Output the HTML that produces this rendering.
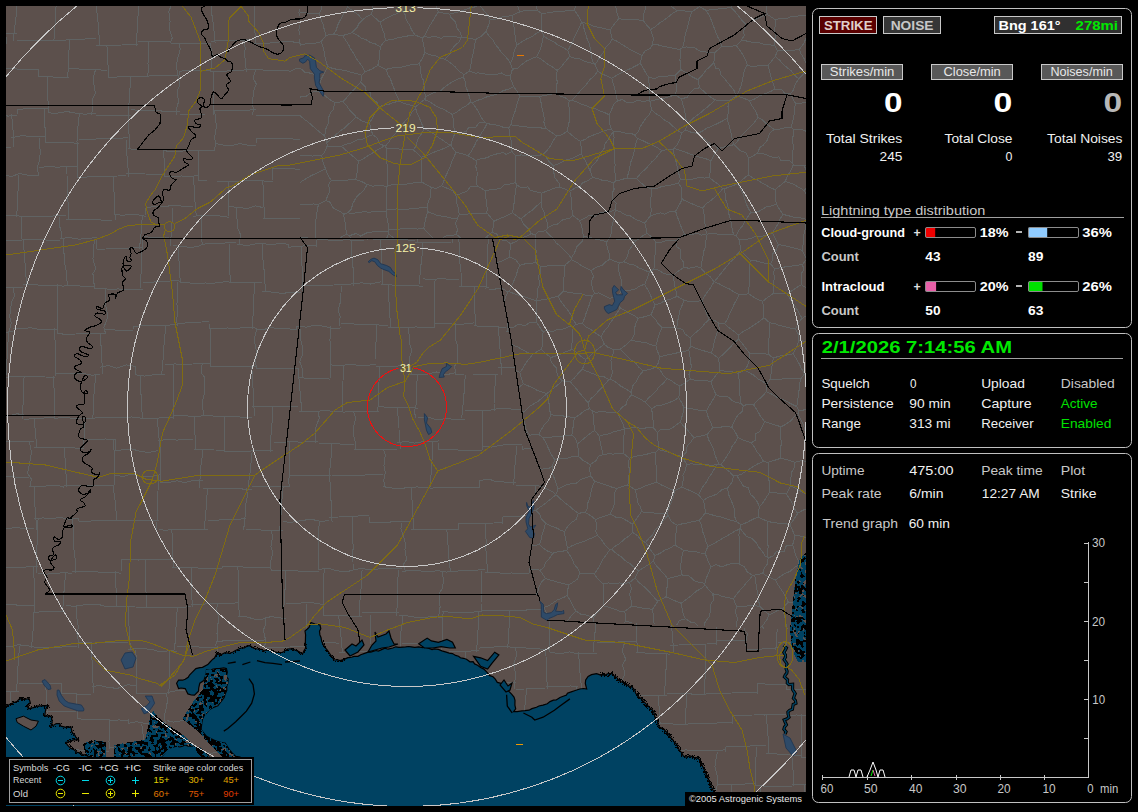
<!DOCTYPE html><html><head><meta charset="utf-8"><style>html,body{margin:0;padding:0;background:#000;width:1138px;height:812px;overflow:hidden;}body{position:relative;}</style></head><body><svg width="1138" height="812" viewBox="0 0 1138 812" style="position:absolute;left:0;top:0;font-family:'Liberation Sans',sans-serif;">
<defs><clipPath id="mc"><rect x="6" y="6" width="800" height="800"/></clipPath></defs>
<rect x="0" y="0" width="1138" height="812" fill="#000"/>
<g clip-path="url(#mc)">
<rect x="6" y="6" width="800" height="800" fill="#5c504c"/>
<g fill="none" stroke="#606363" stroke-width="1" shape-rendering="crispEdges">
<path d="M6,33.5 L8.9,33.4 L17,33.5"/>
<path d="M17,6 L16.3,14.5 L15.2,23.3 L14.1,32.2 L13.5,40.7"/>
<path d="M17,40.7 L26.7,40.6 L36.9,40.3 L46.6,40.8 L56.1,40.4"/>
<path d="M56.1,6 L55.5,14.9 L55.1,23.1 L54.7,31.9 L53.8,40.7"/>
<path d="M56.1,40.4 L64.3,40.2 L72.2,39.4 L80.1,39.3 L88,38.8 L96.3,38.4"/>
<path d="M96.3,6 L97.1,14.1 L98,21.8 L98.3,30.3 L99.5,37.9 L100,46"/>
<path d="M96.3,46 L104.8,45.8 L113.3,45.4 L121.6,45 L129.7,44.7 L138.4,44.7"/>
<path d="M138.4,6 L138.1,13.9 L137.8,22.1 L137.1,29.8 L136.9,37.8 L136.3,46"/>
<path d="M138.4,41.5 L146.6,41.6 L154.4,41.3 L163,41.6 L170.9,41.4"/>
<path d="M170.9,6 L168.8,12 L170.1,21.2 L169,27.7 L172.2,37.9 L170.4,43.2"/>
<path d="M170.9,43.2 L179.2,43.3 L186.9,43.2 L194.8,43.5 L202.8,43.2 L211.2,43.6"/>
<path d="M211.2,6 L211.7,13.5 L212.9,21.1 L213.7,28.4 L214.5,36 L215.1,43.2"/>
<path d="M211.2,41.2 L219.8,40.6 L228.6,40.8 L236.7,40.2 L245.4,40 L254.3,39.6"/>
<path d="M254.3,6 L254.2,13.6 L254.9,21.2 L254.9,28.4 L255.1,36.1 L255.1,43.5"/>
<path d="M254.3,43.5 L263.8,43.5 L273.1,42.8 L281,41.7 L293.5,42 L300,43.1"/>
<path d="M300,9.4 L298.8,12.6 L300,16.1"/>
<path d="M300,25 L298.7,30.3 L300,34.4"/>
<path d="M300,38.9 L299.3,43.5"/>
<path d="M6,37 L6.9,40.6 L6,44.2"/>
<path d="M6,68.9 L13.6,68.9 L22,69.2 L30.4,69.4 L38.5,69.5"/>
<path d="M38.5,68.9 L38.5,76.6"/>
<path d="M38.5,76.6 L48.6,76.7 L59.3,77.4 L69.4,77.5"/>
<path d="M69.4,40.4 L69.1,47.8 L68.8,54.7 L68.2,62 L68.2,69.4 L67.6,76.6"/>
<path d="M69.4,68.9 L78.5,69 L88,69.6 L97.6,69.8 L106.9,70.4"/>
<path d="M106.9,46 L107.6,53.6 L107.7,61.8 L108.4,69.2 L108.9,77"/>
<path d="M106.9,77 L115.4,77.1 L123.3,76.6 L132.1,76.7 L140.5,76.4 L148.7,76.4"/>
<path d="M148.7,41.5 L148.3,48.4 L148.5,55.8 L148,63 L148.2,69.8 L147.8,77"/>
<path d="M148.7,75.4 L158.9,75.4 L169.2,75.6 L179.4,75.8"/>
<path d="M179.4,43.2 L180.2,49.4 L177.3,60 L176.4,66.5 L177.8,75.4"/>
<path d="M179.4,71.1 L189.4,70.7 L199.9,70.4 L210,70.2"/>
<path d="M210,43.2 L212,52.3 L212.1,57.2 L211.8,63.8 L210.6,71.8"/>
<path d="M210,71.8 L218.7,71.7 L226.9,71 L235.5,70.7 L243.7,70.7"/>
<path d="M243.7,41.2 L245.3,48.3 L244.4,55 L245.9,62.8 L246.1,71.8"/>
<path d="M243.7,69.5 L253.6,69.6 L262.7,70 L272.7,70.3 L282.3,70.5"/>
<path d="M282.3,69.5 L282.3,70.4"/>
<path d="M282.3,70.4 L290.5,71.1 L296.9,68.2 L300,69"/>
<path d="M6,115.7 L8,116.1 L17,115.2"/>
<path d="M17,109.3 L17,113.9"/>
<path d="M17,109.3 L27.5,108.8 L37.8,108.9 L47.9,108.3"/>
<path d="M47.9,76.6 L47.8,83.7 L47.9,90.9 L47.8,98.5 L48.4,105.6 L48.1,112.8"/>
<path d="M47.9,112.8 L56.3,113.3 L66.7,111.5 L75,113 L84.8,114.3 L95.7,113"/>
<path d="M95.7,68.9 L93.9,75.7 L93.6,82.4 L95.4,93.5 L92.6,99.2 L92.7,105.6 L91.7,115.3"/>
<path d="M95.7,115.3 L104.3,115.2 L112.9,115.4 L122.1,115.4 L130.6,115.1"/>
<path d="M130.6,77 L130.3,84.6 L129.6,92.2 L129.4,100.3 L128.5,107.7 L128.2,115.3"/>
<path d="M130.6,109.8 L139.2,110.2 L147,110.6 L155.7,110.5 L163.6,111.2 L171.8,111.5 L180.2,111.6"/>
<path d="M180.2,71.1 L178.4,77.5 L180,84.2 L177.1,91.7 L178.6,101.4 L176.8,108.1 L176.8,114.6"/>
<path d="M180.2,114.6 L188.4,114.6 L197.3,114.9 L205.4,115 L213.9,115"/>
<path d="M213.9,71.8 L213.9,79 L213.5,86.1 L213.6,93.1 L213.8,100.1 L213.4,107.6 L213.5,114.6"/>
<path d="M213.9,111 L222.4,110.5 L230.8,110.3 L239.2,110.3 L247.6,110.1 L255.7,109.8"/>
<path d="M255.7,69.5 L253.2,78.3 L256.3,84 L253.9,90.3 L252.4,101.5 L253.4,109.8 L252.2,115.3"/>
<path d="M255.7,115.3 L265.4,115.1 L274.8,115.5 L284.5,115.4 L294.2,115.7 L300,115.7"/>
<path d="M6,147.8 L11.5,147.7"/>
<path d="M11.5,113.9 L12.3,122.3 L13,130.2 L13.6,138.7 L13.9,147"/>
<path d="M11.5,137.7 L21.3,135.7 L28.4,136.2 L36,136.5 L44.7,136.7"/>
<path d="M44.7,109.3 L44.9,117.5 L44.9,125.9 L45.5,133.9 L45.7,142.3"/>
<path d="M44.7,142.3 L53.2,142.7 L62.1,142.9 L70.6,142.8 L79.5,143.3"/>
<path d="M79.5,112.8 L78.6,120.1 L77.9,127.3 L77.8,135.1 L76.9,142.3"/>
<path d="M79.5,139.6 L87.4,139 L95.8,139 L103.8,138.6 L112.3,138.3 L120.3,138.2 L128.3,137.7"/>
<path d="M128.3,115.3 L128.9,123.5 L128.8,131.9 L129.6,140.1 L129.7,148.7"/>
<path d="M128.3,148.7 L136.3,149.5 L147,149.3 L158,149.6 L166.9,150.3"/>
<path d="M166.9,148.7 L166.9,151.5"/>
<path d="M166.9,151.5 L175,151.4 L182.9,151 L191.1,150.7 L198.8,150.5 L206.6,150.5 L214.9,150"/>
<path d="M214.9,111 L215.2,119.5 L216.6,125.7 L214.5,137.5 L215.6,142.6 L214.5,151.5"/>
<path d="M214.9,143.3 L222.8,145 L230.1,145.9 L239.7,143.6 L249.2,145.4 L256.2,145.3"/>
<path d="M256.2,138.1 L256.2,143.3"/>
<path d="M256.2,138.1 L264.5,138.6 L272.5,138.7 L281.1,138.5 L289.4,138.8 L297.5,139.3 L300,139.3"/>
<path d="M6,175.8 L12.2,176.2 L19.7,173.5 L30.9,175.8 L39.1,175.3"/>
<path d="M39.1,137.7 L39.5,145 L40.2,151.1 L39.8,159.7 L37,167.7 L38.8,175.2"/>
<path d="M39.1,167.2 L48.6,166.8 L58.5,167.1 L67.6,166.6 L77.3,166.6"/>
<path d="M77.3,142.3 L77.7,149.6 L77.5,156.4 L77.5,163.5 L77.5,170.3 L77.8,177.4"/>
<path d="M77.3,177.4 L85.6,177.1 L93.6,176.7 L101.5,176.8 L109.9,176.4 L117.6,176 L126,175.6"/>
<path d="M126,139.6 L126.7,147 L126.9,154.5 L127.5,162.6 L128.2,169.7 L128.9,177.4"/>
<path d="M126,173 L135.5,173.3 L145,174 L154.1,174.2 L163.6,174.8"/>
<path d="M163.6,148.7 L164,158 L164.4,167 L165,176.6"/>
<path d="M163.6,176.6 L172.2,176.4 L181.3,176 L190,176.2 L198.5,175.8"/>
<path d="M198.5,151.5 L198.7,159.1 L198.8,166 L198.4,173.8 L198.8,180.9"/>
<path d="M198.5,180.9 L207.4,181 L216.3,181 L224.9,181.3 L233.8,181.5 L242.8,181.5"/>
<path d="M242.8,179.9 L242.8,180.9"/>
<path d="M242.8,179.9 L252.6,180.8 L263,180.9 L272.9,181.7"/>
<path d="M272.9,168.1 L272.9,179.9"/>
<path d="M272.9,168.1 L281.8,168.3 L290,168.6 L298.5,169.3 L300,169.3"/>
<path d="M6,215.9 L10.7,216 L19,215.8"/>
<path d="M19,175.2 L18.8,183.2 L17.9,191.9 L17.4,200.2 L17.2,208.3 L16.7,216.7"/>
<path d="M19,216.7 L28.4,216.2 L37.7,216.2 L47.5,216.3 L57,215.8 L66.4,215.6"/>
<path d="M66.4,167.2 L67,174.4 L67.1,182.2 L67.4,189.8 L67.9,197.5 L68.1,205.1 L68.5,212.3 L68.8,219.9"/>
<path d="M66.4,219.9 L75.7,220 L85.1,219.7 L94.8,219.8 L104.3,220.1 L113.7,220"/>
<path d="M113.7,177.4 L113.9,184.4 L114,191.5 L114.8,198.9 L114.5,205.4 L114.9,212.9 L115.3,219.9"/>
<path d="M113.7,214.8 L123.5,215.1 L130.8,214.6 L139,215 L145.9,216.3"/>
<path d="M145.9,207.8 L145.9,214.8"/>
<path d="M145.9,207.8 L156.2,206.1 L163.3,207 L172.7,205.2 L183.5,206.2 L193.4,206"/>
<path d="M193.4,176.6 L194,184.6 L194.5,192.8 L194.9,200.3 L195.5,208.5 L196.3,216.2"/>
<path d="M193.4,216.2 L203.6,215.4 L209.4,215.2 L219.1,215.9 L228.7,217.2"/>
<path d="M228.7,180.9 L228.5,188 L228.5,194.9 L228.7,202.1 L228.4,209.4 L228.4,216.2"/>
<path d="M228.7,206.9 L237.8,207.1 L246.7,208.7 L255.5,205.8 L262.6,207.5"/>
<path d="M262.6,179.9 L263.2,187.7 L263.4,195.2 L263.8,202.7 L264.2,210.6 L264.4,218.2"/>
<path d="M262.6,218.2 L270.9,218.5 L279.2,218.2 L287.4,218.3 L296.2,218.3 L300,218.4"/>
<path d="M6,240.4 L13,240.8 L21.8,240.7"/>
<path d="M21.8,216.7 L21.9,224.3 L21.7,231.7 L21.8,239.3"/>
<path d="M21.8,239.3 L31,239.7 L40.8,239.9 L50.2,240.1 L59.6,240.3"/>
<path d="M59.6,216.7 L59,224.2 L61.8,233.4 L61.4,239.3"/>
<path d="M59.6,238.6 L69.1,237.5 L79,239.2 L87.6,238.3 L96.7,237.7"/>
<path d="M96.7,238.6 L96.7,249.1"/>
<path d="M96.7,249.1 L105.9,249 L115,248.8 L124.3,248.1 L133.6,247.9 L142.6,247.7"/>
<path d="M142.6,214.8 L141.6,223.3 L141.2,232.1 L140.3,240.8 L139.4,249.1"/>
<path d="M142.6,236.6 L152.5,237.3 L162.8,237.5 L172.9,238.3"/>
<path d="M172.9,207.8 L172.3,215.1 L172,223.1 L171.6,230.3 L170.9,237.9 L170.2,245.5"/>
<path d="M172.9,245.5 L182.6,246.8 L192.3,247.3 L201.1,245.7"/>
<path d="M201.1,216.2 L201.3,223.2 L201.6,230.7 L201.9,238.2 L202.1,245.5"/>
<path d="M201.1,244.2 L209.7,243.8 L218.9,243.6 L227.8,242.7 L236.5,242.4"/>
<path d="M236.5,206.9 L236.5,216.2 L237.4,221.4 L237.8,228.6 L240.6,234.7 L238.9,244.2"/>
<path d="M236.5,244 L246.7,245.6 L253.5,244.3 L260.9,243.1 L269.7,244.6 L278.9,243.7 L288.2,244.1"/>
<path d="M288.2,244 L288.2,247.3"/>
<path d="M288.2,247.3 L297.5,246.4 L307.1,245.7 L316.8,245.3"/>
<path d="M316.8,240 L316.8,247.3"/>
<path d="M316.8,240 L326.1,239.9 L335.6,240.4 L345.1,239.9 L354.8,240.1 L364.2,240.2"/>
<path d="M367.7,238 L368,240"/>
<path d="M364.2,238.7 L372.4,239 L380.9,239.2 L389.6,239.8 L397.8,239.6 L406.2,239.9 L414.6,240.4"/>
<path d="M417.3,238 L417.9,243"/>
<path d="M414.6,243 L424.2,242.6 L433.5,242.6 L443.4,242.1 L452.8,242"/>
<path d="M452.5,238 L452.5,243"/>
<path d="M6,287.4 L14.3,287.3 L23.3,287.8"/>
<path d="M23.3,239.3 L23.7,247.4 L24.5,254.8 L25,263.1 L25.4,270.7 L26.2,278.6 L26.5,286.5"/>
<path d="M23.3,284.3 L31.4,284.6 L39.9,285.1 L47.9,285.1 L55.9,285.6 L64,286.1"/>
<path d="M64,238.6 L63,246.1 L64.2,254.9 L64.1,261.1 L66,269.5 L66.7,277.8 L67.5,285.1"/>
<path d="M64,285.1 L74.4,285.9 L84.1,286.1 L94.3,286.9"/>
<path d="M94.3,238.6 L93.8,248 L93.8,250.9 L92.9,258.9 L95.8,268.9 L92.9,273.4 L93.9,283 L95.2,289"/>
<path d="M94.3,289 L102.4,288.9 L110.7,289.1 L118.3,289 L126.9,289.3 L135,289.2 L142.8,289.2"/>
<path d="M142.8,236.6 L142.7,243.9 L141.8,251.8 L141.8,259.3 L141.4,266.7 L141,274.1 L140.1,281.6 L140,289"/>
<path d="M142.8,282.4 L151.5,282.1 L160.7,281.8 L170,281 L178.7,280.6"/>
<path d="M178.7,245.5 L178.9,252.9 L179,260.5 L179.8,267.8 L179.9,274.9 L180.2,282.4"/>
<path d="M178.7,281.9 L188.2,282.7 L194.2,283.6 L205.4,283 L210.9,283.5 L221.8,282.1 L229,281.7"/>
<path d="M229,244.2 L229.4,251.6 L229.4,259.2 L229.6,267.1 L230,274.9 L230.4,282.2"/>
<path d="M229,282.2 L237.4,282.6 L246,282.7 L254.3,282.7 L262.4,282.9"/>
<path d="M262.4,244 L262.9,251.8 L263,259.9 L263.9,267.8 L264.4,275.6 L265,283.5 L265.3,291.1"/>
<path d="M262.4,291.1 L272.6,292.2 L282.1,293.4 L290,292.5 L301.4,292.7"/>
<path d="M301.4,247.3 L301.4,254.5 L301.8,261.7 L302.2,269.1 L302.6,276.4 L302.9,283.6 L302.9,291.1"/>
<path d="M301.4,285.7 L309.4,285.4 L318.2,285.2 L326.2,285.1 L334.4,285 L342.5,284.7 L351.1,284.6"/>
<path d="M351.1,240 L351.7,247.3 L351.8,255.4 L352.7,263.1 L353.2,270.2 L353.6,278.1 L354,285.7"/>
<path d="M351.1,283.3 L362.7,282.9 L370.1,284.1 L380.9,281.8"/>
<path d="M380.9,238.7 L380.9,246.1 L381.3,254 L381.8,261.8 L382.4,269.3 L382.3,277 L382.8,284.5"/>
<path d="M380.9,284.5 L389.2,284.9 L397.9,285.2 L406.1,285.6 L414.4,285.9 L423,286.1"/>
<path d="M423,243 L422.5,251.5 L421.6,259.6 L420.6,268 L419.9,276.2 L419.5,284.5"/>
<path d="M423,278.8 L430.5,279.7 L441.5,278.5 L450.7,279.6 L458.6,279.5"/>
<path d="M458.7,238 L459.2,243.8 L459.2,250.9 L459.7,258.3 L460.1,264.9 L461,272.3 L461.1,279.2 L461.5,286.3"/>
<path d="M458.6,286.3 L468.6,286.5 L479,286.7 L488.7,287.1"/>
<path d="M488.6,238 L488,244.4 L487.9,251.8 L487.8,259.2 L487.3,266.8 L486.5,274 L486.4,282 L485.9,289.3"/>
<path d="M488.7,289.3 L498,288.9 L501.6,288.9"/>
<path d="M6,332.1 L13,331.8"/>
<path d="M13,286.5 L14.4,295.9 L11.5,302.3 L10.8,307.8 L9.7,316.7 L11.3,322.8 L9,332.1"/>
<path d="M13,328.3 L20.1,328.8 L30.5,327.7 L41.4,329.8 L47.9,329.4 L57.4,329.6"/>
<path d="M57.4,284.3 L57.2,291.2 L57.2,298.4 L57.3,305.6 L57.2,312.7 L57.3,319.9 L57.5,326.7 L57.3,333.9"/>
<path d="M57.4,333.9 L66.9,334.1 L76.5,334 L86.1,333.7 L95.6,333.8 L105.2,333.4"/>
<path d="M105.2,289 L105.4,296.7 L105.7,305.9 L106.6,309.7 L107.8,316.8 L103.8,327.8 L105.8,333.9"/>
<path d="M105.2,329.1 L114.8,330 L123.8,330.4 L133.4,331"/>
<path d="M133.4,326.4 L133.4,329.1"/>
<path d="M133.4,326.4 L141.9,325.9 L150.9,325.9 L159.8,325.5 L168.5,325.1 L177.2,324.5"/>
<path d="M177.2,282.4 L177.1,289.9 L177.1,297.1 L177,304.2 L177.3,311.8 L176.9,318.8 L177.1,326.4"/>
<path d="M177.2,323.5 L185.2,323 L193.2,322.3 L201.7,322 L209.5,321.7"/>
<path d="M209.5,323.5 L209.5,328.5"/>
<path d="M209.5,328.5 L218.9,328.3 L227.6,328 L236.4,328.2 L245.5,327.7 L254.7,327.8"/>
<path d="M254.7,282.2 L254.2,290.1 L253.9,297.5 L253.6,305.8 L253.2,313.2 L252.7,321.1 L252.3,328.7"/>
<path d="M254.7,328.7 L262.2,329.9 L270.1,327.8 L280,328.3 L288.6,328.8 L296.8,329.8"/>
<path d="M296.8,326.2 L296.8,328.7"/>
<path d="M296.8,326.2 L306.5,327.2 L313.7,325.1 L325.2,326.3 L332,328.5 L341.2,327.9"/>
<path d="M341.2,285.7 L341,293.1 L340.1,303.1 L338.2,309.9 L340.1,316.5 L339.7,326.2"/>
<path d="M341.2,323.6 L350.3,323.8 L360.1,324.4 L369.5,324.6 L378.8,325 L388.3,325.2"/>
<path d="M388.3,284.5 L388.6,291.8 L388.7,298.8 L389.4,306.3 L389.6,313.4 L390.2,320.2 L390.3,327.6"/>
<path d="M388.3,327.6 L397.4,327.6 L407.1,327.1 L416.6,327 L425.6,327.3 L435.1,327.1"/>
<path d="M435.1,278.8 L434.8,286.9 L434.8,295.1 L434.8,303.3 L434.8,311.5 L434.9,319.4 L434.9,327.6"/>
<path d="M435.1,323.1 L446.2,323.1 L456.1,324.7 L465.8,323.8 L474.4,322.8"/>
<path d="M474.4,286.3 L474.3,294.1 L474.8,301.9 L474.8,309.9 L475.2,317.8 L475.1,325.9"/>
<path d="M474.4,325.9 L484.8,326.3 L495.3,326.9 L505.8,327.4"/>
<path d="M507.2,319.3 L507.5,324.9 L508,332"/>
<path d="M505.8,332 L509.4,331.5"/>
<path d="M6,377.9 L8.7,377.9"/>
<path d="M8.7,332.1 L8.3,339.4 L7.6,346.6 L7.2,354.2 L6.9,361.3 L6.2,368.9 L6,376.1"/>
<path d="M8.7,376.1 L17.6,376.2 L27,376.4 L36.4,376.6 L45.1,377 L54.6,377.2"/>
<path d="M54.6,328.3 L54.8,336.3 L55.3,344.2 L55.1,352 L55.1,360.2 L55.6,368 L55.8,376.1"/>
<path d="M54.6,374.1 L64.4,373.4 L73.3,373.4 L82.9,373.2 L91.5,375.2 L100.3,374.4"/>
<path d="M100.3,333.9 L100.7,341.8 L101.4,349.8 L101.6,357.8 L102.3,366 L102.7,374.1"/>
<path d="M100.3,367.2 L108.6,365.4 L116.6,368.2 L126.2,364.9 L135.7,366.5"/>
<path d="M135.7,367.2 L135.7,374.8"/>
<path d="M135.7,374.8 L144.6,376.1 L157,374.2 L165.4,375"/>
<path d="M165.4,326.4 L165,334.4 L164.3,342.3 L163.3,350.4 L163.1,358.9 L162.5,366.7 L161.6,374.8"/>
<path d="M165.4,364.4 L174.3,364 L183.5,364.1 L193,364 L201.9,363.7 L211,363.6"/>
<path d="M211,328.5 L210.6,335.9 L210.7,343.7 L210.4,351.5 L210.2,358.8 L210.2,366.7"/>
<path d="M211,366.7 L220.4,366.4 L229.4,366.9 L238.3,366.9 L247.5,366.9 L256.9,366.9"/>
<path d="M256.9,328.7 L254.7,336.8 L254.9,343.1 L256.8,352.9 L255.4,361.1 L256.6,368.8"/>
<path d="M256.9,368.8 L265.7,368.7 L274,368.4 L282.3,368.8 L290.6,368.5 L299.4,368.3"/>
<path d="M299.4,326.2 L300.5,332.1 L300.9,340.8 L302.7,347.2 L302,355.9 L299.7,361.6 L302.9,370.5 L302.9,377.7"/>
<path d="M299.4,377.7 L309.8,378.4 L319.7,378.5 L330.2,379.1"/>
<path d="M330.2,326.2 L330.1,333.4 L330,340.6 L330.4,348 L330.6,355.9 L330.2,363.2 L330.6,370 L330.6,377.7"/>
<path d="M330.2,364.8 L338.2,365.7 L349.7,364.6 L355.9,365 L366.2,365.4 L376,364.5"/>
<path d="M376,323.6 L376.2,330.7 L376.2,338.1 L375.9,345.2 L375.9,352 L376,359.1 L376,366.5"/>
<path d="M376,366.5 L384.1,366.5 L392.2,366.3 L400.3,365.9 L408.2,365.5"/>
<path d="M408.2,327.6 L409.2,336.1 L409.6,343.4 L411.8,350.2 L409.1,358.9 L410.2,367.7 L411.6,374.6"/>
<path d="M408.2,374.6 L416.6,374.6 L426.7,374.4 L436.4,372 L446.6,374.7 L455.4,372.6"/>
<path d="M455.4,323.1 L456,330.5 L455.7,340.1 L457.4,345 L457.3,353.5 L457.4,362.3 L454.3,366.3 L456.3,374.9"/>
<path d="M455.4,374.9 L464,375 L472.6,375 L480.9,374.5 L489.9,374.6 L498.3,374.5"/>
<path d="M498.3,325.9 L498.7,333 L499.5,339.8 L499.8,347.2 L500.6,354.2 L500.7,361 L501.6,368.2 L502,374.9"/>
<path d="M498.3,368 L507.2,367.7 L515.1,367.8"/>
<path d="M6,416.3 L6.1,416.4 L16.6,413.8 L24.2,414.6"/>
<path d="M24.2,376.1 L23.6,383.2 L23.6,390.5 L23,397.9 L23,405 L22.4,412.3 L22,419.2"/>
<path d="M24.2,419.2 L34.3,418.8 L43.9,418 L53.8,417.6"/>
<path d="M53.8,376.1 L53.7,383.2 L54.2,390.4 L54.5,397.9 L54.7,404.6 L54.6,412.3 L54.7,419.2"/>
<path d="M53.8,418.1 L62.4,417.9 L70.3,418 L78.7,418.6 L87.1,418.7 L95.5,418.6"/>
<path d="M95.5,374.1 L95.2,381.3 L94.5,389 L93.8,396.2 L93.3,403.4 L93.4,410.8 L92.7,418.1"/>
<path d="M95.5,417.3 L104.5,417.2 L113.3,417.1 L122.3,417.3 L131.2,417 L140.4,417.2"/>
<path d="M140.4,374.8 L140.6,382.2 L140.8,389.5 L141.1,396.7 L141.5,404.2 L142,411.5 L142.4,419"/>
<path d="M140.4,419 L148.4,418.4 L157.1,418.2 L165.4,417.3 L173.6,417.1"/>
<path d="M173.6,364.4 L173.5,372.4 L173.5,380.3 L173.2,387.8 L173.3,395.3 L173.5,403.5 L173.4,410.9 L173.3,419"/>
<path d="M173.6,415.6 L181.4,415.5 L194,416.5 L202.1,415.9"/>
<path d="M202.1,364.4 L201.2,372.6 L204.4,376.9 L204.9,386.1 L204.9,391.5 L202.8,400.1 L202.7,409 L204.2,415.7"/>
<path d="M202.1,415.7 L210.2,415.8 L218.6,416.4 L227,416.8 L235.3,416.8 L243.5,417.2 L251.6,417.3"/>
<path d="M251.6,366.7 L252.2,373.5 L252.1,380.8 L253,387.5 L253.4,394.8 L253.4,401.5 L254.1,408.7 L254.4,415.7"/>
<path d="M251.6,406.6 L261.2,406.6 L270.4,406.3 L279.6,406.6 L288.9,406.3 L298.3,406.5"/>
<path d="M298.3,368.8 L298.7,375.9 L299.5,383 L299.8,389.8 L300.7,396.7 L301.1,404.1 L301.7,411"/>
<path d="M298.3,411 L307.3,411.3 L316.3,411.1 L325.1,410.9 L334.2,411.1 L343.4,411.3"/>
<path d="M343.4,364.8 L343.5,372.9 L343,380.7 L342.9,388.6 L342.9,396.1 L342.7,404.2 L342.5,412.2"/>
<path d="M343.4,412.2 L352.3,411.3 L363.2,411.6 L368.8,411.1 L379.4,411.2"/>
<path d="M379.4,366.5 L379.4,374.1 L379,382 L378.6,389.3 L378.4,397 L378.2,404.6 L377.6,412.2"/>
<path d="M379.4,406.8 L388.9,407.2 L398.7,407.8 L408.5,407.6 L417.9,408.2"/>
<path d="M417.9,374.6 L416.7,383.5 L416.1,387.5 L416.1,396.1 L416.5,403.4 L414.3,411.9 L416,418"/>
<path d="M417.9,418 L427.6,417.1 L435.8,419.4 L446.5,418.8 L455.9,419.2 L465.4,419.9"/>
<path d="M465.4,374.9 L464.8,382 L464.3,389.3 L463.8,396.7 L463.2,403.7 L462.4,410.6 L461.8,418"/>
<path d="M465.4,410.6 L475.1,410.4 L484.8,411 L495.7,409.3"/>
<path d="M495.7,374.9 L495.3,382.1 L494.8,389.4 L494.6,396.5 L494,403.5 L494,410.6"/>
<path d="M495.7,408.7 L505.1,408.8 L513.8,409.1 L521.1,409.2"/>
<path d="M6,441.5 L7.1,441.5 L16,441.3 L25.2,441.2 L34.4,441.3"/>
<path d="M34.4,419.2 L34.8,426.4 L35.7,433.3 L36.1,440.3 L36.5,447.4"/>
<path d="M34.4,447.4 L43.1,447.4 L51.1,447.6 L59.9,447.6 L68.6,447.6 L76.7,448.1 L85.3,448"/>
<path d="M85.3,418.1 L84.9,425.5 L84.6,432.6 L84,440.1 L83.5,447.4"/>
<path d="M85.3,439.1 L95.4,439.4 L105,439 L115,439.1"/>
<path d="M115,439.1 L115,450.6"/>
<path d="M115,450.6 L124.1,449.7 L131.6,448.8 L141.4,451.8 L150,452.3 L157.7,450.7"/>
<path d="M157.7,419 L158,427.1 L158.7,435 L159.5,442.7 L159.8,450.6"/>
<path d="M157.7,440.9 L166.9,439.3 L177.2,440.1 L183.2,439.1 L194.1,439"/>
<path d="M194.1,415.6 L194.2,424.3 L194.8,432.5 L195.6,440.9 L195.8,449.2"/>
<path d="M194.1,449.2 L204.2,449.7 L214.3,450 L224.2,450.1"/>
<path d="M224.2,415.7 L224.4,422.9 L224.3,430 L224.9,437.3 L224.7,444.2 L224.9,451.7"/>
<path d="M224.2,451.7 L232.1,451.5 L240.5,451.1 L248.3,451.2 L256.8,450.7 L264.6,450.6 L272.9,450.4"/>
<path d="M272.9,406.6 L272.6,414.2 L272.1,421.8 L271.4,429.2 L270.9,436.8 L270.5,444.4 L270.1,451.7"/>
<path d="M272.9,442 L281.9,442.2 L291.2,441.8 L300.5,442.1 L309.1,441.9 L318.5,441.7"/>
<path d="M318.5,411 L319.2,418.4 L315.8,427.5 L315.5,432.9 L315.3,443"/>
<path d="M318.5,443 L327.3,443.4 L335.9,443.7 L344.8,444.3 L353.7,444.4"/>
<path d="M353.7,412.2 L355.6,418.3 L353.4,427.9 L353.8,436.1 L355.2,441.4 L355.6,449.1"/>
<path d="M353.7,449.1 L362.3,449.5 L370.9,449.6 L380,449.6 L388.6,449.8 L397.4,449.7"/>
<path d="M397.4,406.8 L397.8,414 L398.5,420.9 L399,427.9 L399.1,435 L400,441.9 L400.3,449.1"/>
<path d="M397.4,442.5 L406.5,441.6 L414.2,443.1 L422.5,441.8 L431,442 L438.7,440.9"/>
<path d="M438.7,442.5 L438.7,449.7"/>
<path d="M438.7,449.7 L447.6,450 L456.5,449.9 L464.8,450.4 L473.5,450.4 L482.5,450.6"/>
<path d="M482.5,410.6 L482.3,418.5 L482.6,426.1 L482.4,433.8 L482.5,442.1 L482.5,449.7"/>
<path d="M482.5,445.9 L491.3,447.1 L503.7,444.9 L511.7,444.4 L522.3,444.6"/>
<path d="M522.3,445.9 L522.3,449.1"/>
<path d="M522.3,449.1 L531.6,448.6 L531.9,448.6"/>
<path d="M6,476.9 L9.8,476.8 L19.6,477.2 L29.1,477.2"/>
<path d="M29.1,441.5 L31.3,450.8 L30.8,457.7 L29.4,464.2 L27.5,473.4 L31.4,479 L30,486.5"/>
<path d="M29.1,486.5 L36.2,486.3 L45.3,486.1 L56.7,485.2 L64.2,487.2"/>
<path d="M64.2,447.4 L64.7,455.2 L65.6,463.2 L65.8,470.7 L66.3,478.4 L66.9,486.5"/>
<path d="M64.2,485.5 L72.3,485.6 L80.7,485.8 L89.2,485.6 L96.9,485.6 L105.3,485.4 L113.7,485.6"/>
<path d="M113.7,439.1 L113.7,446.7 L114.4,454.6 L114.4,462.2 L114.8,470.2 L114.7,477.5 L114.9,485.5"/>
<path d="M113.7,475 L123.4,476.5 L131.3,474.1 L140.3,476.4 L151.3,476.5 L160.5,474.7"/>
<path d="M160.5,440.9 L160.8,449.1 L160.4,457.6 L160.3,466 L160.4,473.8 L160.6,482.3"/>
<path d="M160.5,482.3 L168.3,482.7 L176.9,480.8 L184.2,482.6 L193.5,480.4 L202.7,481"/>
<path d="M202.7,449.2 L202.2,457.2 L201,464.8 L200.8,472.7 L199.8,480.8 L199.3,488.4"/>
<path d="M202.7,488.4 L210.9,488.4 L219.2,488.7 L227.3,488.7 L235.7,488.6 L244.1,489.1 L252.1,489.1"/>
<path d="M252.1,451.7 L251.6,458.9 L250.6,466.5 L249.9,473.8 L248.9,481.1 L248.4,488.4"/>
<path d="M252.1,486.9 L261.8,486.7 L270.6,486.7 L279.8,486.2 L289.4,486.2"/>
<path d="M289.4,442 L289.1,449.6 L289.5,456.9 L289.1,464.3 L289.5,472.2 L288.9,479.3 L289.1,486.9"/>
<path d="M289.4,475.9 L298.1,476 L306.7,475.4 L315,475.2 L323.4,475.2 L331.9,475"/>
<path d="M331.9,443 L331.6,451.4 L330.9,459.2 L330,467.9 L329.7,475.9"/>
<path d="M331.9,475.4 L340.3,475.2 L349,475.2 L357.7,475.4 L366.5,474.9 L374.7,474.9 L383.4,474.8"/>
<path d="M383.4,449.1 L385.3,455.2 L383.9,465.6 L385.3,472.2 L383.7,480.7 L385.3,486.8"/>
<path d="M383.4,486.8 L390.7,487.8 L400.5,489 L408.2,487.1 L417.8,487 L426.2,487.6 L433,488.3"/>
<path d="M433,442.5 L432.7,450.3 L432.1,457.5 L431.8,465.1 L431.2,472.4 L430.7,480 L430.5,487.5"/>
<path d="M433,487.5 L442,487.2 L451.6,487.3 L460.8,487.6 L469.7,487.2 L479,487.3"/>
<path d="M479,480.5 L479,487.5"/>
<path d="M479,480.5 L489.5,479.3 L496,481.7 L507,482.1 L516.5,482.4"/>
<path d="M516.5,445.9 L516.2,453.7 L515.4,461.4 L514.6,469.4 L514.1,477.5 L513.6,485.3"/>
<path d="M516.5,485.3 L525.1,485.5 L533.8,485.8 L541,486.1"/>
<path d="M6,528.2 L15,527.9 L23.9,528.1 L34,528.3"/>
<path d="M34,486.5 L34.6,493.5 L34.6,500.7 L35.1,508.1 L35.5,515.3 L36.3,522.5 L36.6,529.7"/>
<path d="M34,518.9 L43,517.9 L50.7,519 L59.6,517.3 L69.2,519.3 L78.9,518.3"/>
<path d="M78.9,518.9 L78.9,521.3"/>
<path d="M78.9,521.3 L87.6,521.3 L96.5,520.5 L104.9,520.5 L113.6,520.3"/>
<path d="M113.6,485.5 L114,492.9 L115,499.6 L115.5,506.8 L116.3,514.1 L116.8,521.3"/>
<path d="M113.6,520.9 L122.7,520.8 L131.4,520.8 L140.8,520.7 L149.5,520.6 L158.8,520.5"/>
<path d="M158.8,475 L158.5,482.9 L158,490.8 L157.8,498.2 L157.6,506.6 L157.2,514 L157,522 L156.7,529.9"/>
<path d="M158.8,529.9 L166.8,530.1 L174.8,529.6 L183.4,529.5 L191.2,529.7 L199.4,529.6 L207.7,529.6"/>
<path d="M207.7,488.4 L206.9,496.4 L206.5,504.8 L205.7,513 L205,521.5 L204.3,529.9"/>
<path d="M207.7,520.2 L217.2,520.1 L226.7,519.5 L236.6,519.1 L246.3,518.9"/>
<path d="M246.3,488.4 L247.5,494.9 L245.6,505.6 L245.4,513.4 L244.4,522.5 L243.7,529.7"/>
<path d="M246.3,529.7 L255.7,529.9 L264.8,530.1 L273.7,530.5 L283.1,530.5"/>
<path d="M283.1,486.9 L282.3,494 L281.9,501.2 L281.4,508.5 L281,515.6 L280.5,522.3 L279.6,529.7"/>
<path d="M283.1,521.6 L290.7,522.4 L300.3,520.8 L310.8,519.2 L320.9,521.4 L329.5,520.5"/>
<path d="M329.5,475.9 L330.1,483.4 L330.1,491.2 L330.9,498.8 L331.4,506.4 L331.4,514.1 L332.1,521.6"/>
<path d="M329.5,517.1 L339.3,517 L349.6,516.6 L359.4,515.9 L369.1,515.8"/>
<path d="M369.1,517.1 L369.1,522.6"/>
<path d="M369.1,522.6 L377.7,522.6 L386.1,522.4 L394,521.7 L402.9,521.5 L411.1,521.4"/>
<path d="M411.1,486.8 L411.5,493.8 L412.1,501.2 L412.5,507.9 L412.7,514.9 L413.4,522.2 L413.7,529.2"/>
<path d="M411.1,529.2 L420.8,529.5 L430.3,529.2 L439.5,529.4 L449.3,529.4 L458.5,529.4"/>
<path d="M458.5,523.7 L458.5,529.2"/>
<path d="M458.5,523.7 L467.4,523.6 L476.2,523.4 L484.7,523.2 L493.8,523 L502.6,522.8"/>
<path d="M502.6,516.5 L502.6,523.7"/>
<path d="M502.6,516.5 L510.5,516.3 L519,516.1 L526.9,515.7 L531.9,515.6"/>
<path d="M534.9,485.3 L535.7,492.8 L535.7,493.5"/>
<path d="M6,567.4 L13.9,567.5 L22,567.2 L29.9,566.8 L38.1,566.9"/>
<path d="M38.1,518.9 L37.6,526.6 L37.8,534.4 L37.1,542.4 L36.8,550.2 L36.9,558.1 L36,565.8 L36,573.4"/>
<path d="M38.1,573.4 L45.3,574.2 L55.6,573.5 L64.8,572.5 L72.4,573.8"/>
<path d="M72.4,518.9 L73.2,526.9 L73.2,534.4 L73.8,542.3 L74,550 L75,557.8 L75.4,565.9 L75.6,573.4"/>
<path d="M72.4,571.2 L80.3,571.6 L89,571.7 L96.8,571.9 L105.3,572.5 L113.3,572.8 L121.4,573.1"/>
<path d="M121.4,559.8 L121.4,571.2"/>
<path d="M121.4,559.8 L129.8,559.7 L138.5,560 L146.6,559.7 L155.1,559.7 L163.4,559.8 L171.9,560"/>
<path d="M171.9,529.9 L172.2,537.4 L172.3,545 L172.6,552.3 L173.1,560 L173.4,567.5"/>
<path d="M171.9,567.5 L180.2,567.6 L188.5,567.7 L197.5,568 L205.6,568.3 L213.9,568.2 L222.5,568.6"/>
<path d="M222.5,566.4 L222.5,567.5"/>
<path d="M222.5,566.4 L230.8,566.6 L238.6,566.6 L247,567.4 L255.4,567.7 L263,567.5 L271.3,568"/>
<path d="M271.3,529.7 L272.5,536.7 L270.9,546.6 L272.9,552.9 L270.5,561.9 L271.1,570.2"/>
<path d="M271.3,570.2 L281.1,570.7 L290.7,570.7 L300,571.1 L309.7,571.5 L319.2,571.8"/>
<path d="M319.2,521.6 L318.9,529.9 L318.7,537.8 L318.9,545.9 L318.4,554 L318.3,562.2 L318.2,570.2"/>
<path d="M319.2,569.3 L328.6,568.3 L335.2,570.5 L344.9,571.7 L352.9,570.5"/>
<path d="M352.9,517.1 L352.7,524.7 L353,532.1 L352.9,539.4 L353.1,547.5 L352.8,554.5 L353,562.4 L353.1,569.8"/>
<path d="M352.9,569.8 L361.9,568.5 L368.5,569.6 L377.5,569.1 L385,568.2 L392.8,568.3 L401.8,568.8"/>
<path d="M401.8,522.6 L400.9,528.3 L403.6,536.6 L405.2,542.9 L405,550.2 L406.6,559.5 L403.6,564 L405.5,571.6"/>
<path d="M401.8,571.6 L410,570 L421.2,571 L430.5,571.8 L437.5,570.5 L446.7,572.2"/>
<path d="M446.7,529.2 L447.4,536.2 L447.8,543.2 L448.6,550.6 L448.8,557.5 L449.8,564.4 L450.2,571.6"/>
<path d="M446.7,571.4 L456.1,571.2 L466.1,570.2 L475.4,570.2 L485,569.5"/>
<path d="M485,523.7 L485.4,531.7 L486.1,540.2 L485.9,548.3 L486.2,556.1 L487.1,564.7 L487.2,572.6"/>
<path d="M485,572.6 L494.1,572.5 L502.7,573.2 L511.5,573 L520.8,573.7 L529.5,573.6"/>
<path d="M529.5,567.9 L529.5,572.6"/>
<path d="M529.5,567.9 L530.3,567.9"/>
<path d="M6,604.5 L9.5,604.5 L17.8,605.1 L25.5,605.2 L33.9,605.4"/>
<path d="M33.9,567.4 L33.8,574.6 L34.3,582.6 L34.2,589.9 L34.8,597.6 L34.5,604.9 L34.8,612.4"/>
<path d="M33.9,612.4 L44.5,611.6 L55.2,611.5 L65.8,611"/>
<path d="M65.8,573.4 L64.9,581.2 L64.2,589.3 L63.6,596.5 L63.1,604.7 L62.3,612.4"/>
<path d="M65.8,604.9 L74.1,606.6 L84,604.8 L90.4,604.1 L97.1,604.1 L106.8,606.7 L115.1,606.2"/>
<path d="M115.1,571.2 L115.4,578.1 L115.9,585.6 L116.2,592.8 L116.8,599.9 L116.9,606.9"/>
<path d="M115.1,606.9 L125.1,606.8 L135,607 L145.1,607.2"/>
<path d="M145.1,559.8 L145.7,567.9 L145.5,575.7 L145.8,583.7 L146,591.7 L146.6,599.5 L146.8,607.4"/>
<path d="M145.1,607.4 L154.6,607.1 L163.6,607.1 L172.7,607.1 L182,607.1 L191.4,606.9"/>
<path d="M191.4,567.5 L191.4,575.4 L191.7,583.7 L191.5,591.4 L192,599.6 L192,607.4"/>
<path d="M191.4,604.1 L200.6,604.1 L209.9,603.9 L219.3,603.4 L228.7,603.3 L237.9,602.9"/>
<path d="M237.9,566.4 L238.1,573.4 L238.5,580.6 L238.3,588.3 L238.6,595.2 L238.5,602.5 L239,609.9 L239,617"/>
<path d="M237.9,617 L245.4,616.5 L254.3,619.1 L262.6,619.2 L271.1,616.5 L278.4,617.6 L285.9,618.8"/>
<path d="M285.9,570.2 L285.4,577.8 L285.3,585.9 L284.7,593.6 L284.4,601.4 L283.6,609.5 L283.4,617"/>
<path d="M285.9,603.9 L294.9,603.5 L305.4,602.6 L314.1,603 L324.1,604.7"/>
<path d="M324.1,569.3 L323.9,577.2 L323.8,584.6 L323.8,592.7 L323.9,600 L323.4,607.7 L323.6,615.7"/>
<path d="M324.1,615.7 L333.4,615.7 L343.3,615.7 L352.8,616.3 L362.1,616.3"/>
<path d="M362.1,569.8 L361.6,577.6 L361.1,585.2 L360.9,593 L359.9,600.4 L359.9,607.7 L359.2,615.7"/>
<path d="M362.1,612.6 L371.4,612.5 L380.2,612.3 L389.6,612.4 L398.6,612.3"/>
<path d="M398.6,569.8 L398,577.5 L397.7,585.5 L397.5,593.1 L397.2,600.5 L397,608.5 L396.6,616"/>
<path d="M398.6,616 L406.6,615.8 L414.6,617.1 L423.2,617.5 L433.6,616.4 L442.2,617.5"/>
<path d="M442.2,571.6 L443.5,580.7 L442.4,588.3 L439.8,592.2 L439.6,603.1 L440.1,606.9 L438.8,616"/>
<path d="M442.2,611.3 L452.7,612.6 L461.8,612.3 L472.2,612.2 L481.8,611.2"/>
<path d="M481.8,571.4 L481.5,579.4 L481.4,587.6 L481.2,595.4 L481,603.5 L481,611.3"/>
<path d="M481.8,610.7 L490.9,610.9 L499.8,610.3 L508.7,610.5 L517.6,610.5 L526.8,610.4"/>
<path d="M526.8,609.3 L526.8,610.7"/>
<path d="M526.8,609.3 L536.5,609.2 L541.9,609.4"/>
<path d="M6,646.3 L10,646.8 L17.5,644.8 L26,645.4 L33.9,646.8"/>
<path d="M33.9,612.4 L33.7,619.4 L33.2,626.5 L32.9,633.8 L32.1,640.4 L31.7,647.7"/>
<path d="M33.9,647.7 L42.3,647.5 L51,647.4 L59.8,647.2 L67.9,646.6 L76.7,646.6"/>
<path d="M76.7,604.9 L76.7,613.4 L77,619.4 L78.6,628 L76.5,631.7 L78.1,639.1 L78.5,647.7"/>
<path d="M76.7,643.1 L85.2,642.7 L94.1,643.1 L102.8,642.8 L111.2,642.9 L119.8,642.9 L128.3,642.7"/>
<path d="M128.3,606.9 L128.5,613.8 L128.8,621.4 L129.1,628.3 L129.8,635.5 L130,642.5 L130.4,649.6"/>
<path d="M128.3,649.6 L137.3,648.4 L144.4,648.7 L153.7,649.8 L159.7,652 L170.3,650.6 L177.4,651.4"/>
<path d="M177.4,607.4 L176.8,614.4 L176.6,621.3 L175.8,628.7 L175.3,635.7 L175.1,642.8 L174.2,649.6"/>
<path d="M177.4,646.1 L185.3,646.4 L193.5,646.6 L201.9,647.2 L209.9,647.4 L217.8,647.5"/>
<path d="M217.8,604.1 L216.2,610.7 L219,617.3 L217.9,624.2 L217,633.7 L217.8,639.4 L215.2,646.1"/>
<path d="M217.8,641.2 L227.6,640.8 L236.7,640.9 L246.5,640.4 L255.9,640.4 L265.7,639.9"/>
<path d="M265.7,617 L265.4,624.7 L263.4,630.1 L265.4,639.3 L264.8,647.5"/>
<path d="M265.7,647.5 L273.6,647.1 L282.1,647.1 L290.2,647 L298.2,646.5 L306.3,646.5"/>
<path d="M306.3,603.9 L306.3,611.3 L306.6,618.5 L306.7,625.9 L306.8,632.8 L307,640.2 L307.3,647.5"/>
<path d="M306.3,641.2 L314.5,641.8 L322.7,642 L331,642.6 L338.8,643.2"/>
<path d="M338.8,615.7 L339.3,623 L340.3,630.3 L341.1,637.7 L341.8,644.9 L342.3,652.2"/>
<path d="M338.8,652.2 L349.1,651.9 L359.7,651.5 L370,651"/>
<path d="M370,612.6 L370.1,620.8 L370.4,628.5 L370.6,636.6 L371,644.4 L371.3,652.2"/>
<path d="M370,652.2 L379.9,651.1 L392.8,653.4 L402,652"/>
<path d="M402,616 L402.7,621.2 L401.2,628.8 L400.4,637.9 L400.5,644.9 L402.5,652.2"/>
<path d="M402,643.5 L410.4,643.7 L418.7,643.6 L427,644.2 L434.7,644.4 L443.2,644.3"/>
<path d="M443.2,611.3 L442.7,619.3 L442.6,627.6 L442.3,635.8 L441.7,644.1 L441.2,652.3"/>
<path d="M443.2,652.3 L452.4,651.8 L461.2,651.4 L469.7,651.1 L478.9,650.6"/>
<path d="M478.9,611.3 L478.4,619.4 L478.1,627.6 L477.8,635.7 L477.1,643.9 L476.6,652.3"/>
<path d="M478.9,648.1 L489.1,647.3 L499.8,646.6 L509.9,646.1"/>
<path d="M509.9,610.7 L509.6,618.1 L509.2,625.6 L508.6,633.3 L508.3,640.9 L507.7,648.1"/>
<path d="M509.9,647.7 L519.5,647.8 L529.5,648.1 L539.6,649 L549.2,649"/>
<path d="M549.4,620.1 L549.6,623.6 L549.5,630.3 L549.7,637.3 L549.7,644.7 L550,651.8"/>
<path d="M549.2,651.8 L559.8,653.9 L569.6,651.9 L576.6,653.6 L588.1,653 L596.8,653.7"/>
<path d="M595.9,621.9 L595.6,627.1 L594.7,635.6 L593.8,643.8 L593.4,651.8"/>
<path d="M596.8,643 L606.7,642.3 L616.4,642.1 L626.5,641.6 L636.4,641.2"/>
<path d="M636.5,623.5 L636.9,630.4 L636.6,637.8 L637.2,645.5 L637,652.8"/>
<path d="M636.4,652.8 L645.1,653 L653.5,653.7 L662,653.8 L670.2,654.1"/>
<path d="M671.5,624.8 L671.9,628.8 L672.3,637.2 L673.3,644.9 L673.6,652.8"/>
<path d="M670.2,645.1 L679.5,645 L688.6,644.6 L698.1,644.1 L707.1,644 L716.4,643.5"/>
<path d="M716.7,626.6 L716.8,628.4 L716.6,636.9 L716.9,645.1"/>
<path d="M716.4,640.8 L726,640.9 L736.2,640.8 L745.7,640.9"/>
<path d="M744.8,627.6 L744.4,630.4 L747.6,633.5 L745.5,643.8 L747.3,649.6"/>
<path d="M745.7,649.6 L753.9,649.4 L761.9,649 L770.1,648.2 L778,647.9"/>
<path d="M777.3,628.9 L776.9,633.3 L776.3,641.3 L775.9,649.6"/>
<path d="M778,642.8 L786.5,642.8 L795.1,643.2 L804.1,643.3 L806,643.5"/>
<path d="M6,691.8 L10.9,692 L19.3,691.7"/>
<path d="M19.3,645.9 L19,653.6 L18.6,661.2 L17.7,668.8 L17.6,676.4 L17,684.3 L16.6,692"/>
<path d="M19.3,683.5 L27.5,683.5 L35.9,683.4 L44.7,683.9 L53.3,683.7 L61.5,684"/>
<path d="M61.5,683.5 L61.5,693.5"/>
<path d="M61.5,693.5 L71.7,693.8 L81.8,694.3 L91.5,694.6"/>
<path d="M91.5,643.1 L91.5,650.4 L91.9,657.4 L92.2,664.6 L92.7,672.2 L92.8,679.2 L93.2,686.1 L93.3,693.5"/>
<path d="M91.5,687.1 L99.5,685.3 L108.8,687.8 L117.9,688.2 L127.8,684.7 L135.8,686"/>
<path d="M135.8,649.6 L136.1,656.8 L136.1,664.4 L136.1,671.6 L136.3,679 L136.6,686.5 L136.6,694"/>
<path d="M135.8,694 L144.1,693.5 L153,693.7 L161.6,693.2 L169.9,692.9"/>
<path d="M169.9,649.6 L169.6,657.2 L169.2,664.6 L169.4,671.7 L169,679.5 L169.2,686.7 L168.7,694"/>
<path d="M169.9,691.2 L178.3,690.9 L187.3,691 L198.7,691.2 L207.2,690.4 L217.3,689.5"/>
<path d="M217.3,646.1 L217.3,653.6 L217.7,661.2 L217.3,668.9 L217.7,676.2 L217.9,683.8 L217.7,691.2"/>
<path d="M217.3,686.4 L225.8,686.4 L233.7,686.4 L242.3,686.1 L250.1,685.9 L258.5,685.9 L266.8,686"/>
<path d="M266.8,647.5 L266.9,655.5 L266.4,663.1 L265.9,670.9 L265.9,678.3 L265.8,686.4 L265.5,693.9"/>
<path d="M266.8,693.9 L276.5,695.1 L284.9,692.9 L295.4,693.2 L306,692.3"/>
<path d="M306,647.5 L305.3,655.6 L304.6,663.3 L304.5,671.7 L303.8,679.5 L303.2,687.7 L302.5,695.7"/>
<path d="M306,695.7 L314.8,696 L323.7,696.3 L333.3,696.4 L342,696.3 L350.9,696.7"/>
<path d="M350.9,652.2 L351.4,659.3 L351.8,667 L352.1,673.7 L352.4,681.2 L353.3,688.7 L353.5,695.7"/>
<path d="M350.9,693.9 L360.2,692.5 L370.2,694.2 L380.1,692.8"/>
<path d="M380.1,652.2 L380.4,660.5 L381.1,668.9 L381.4,677.3 L381.9,685.7 L382.6,693.9"/>
<path d="M380.1,684.1 L388.6,684.1 L395.8,684 L404.2,683.1 L412.5,685.5 L421.9,684.1"/>
<path d="M421.9,643.5 L421.6,651.3 L421.3,658.6 L420.8,666.5 L420.8,673.8 L420.3,681.4 L420.3,689"/>
<path d="M421.9,689 L430.7,688.7 L439.2,689.1 L448,688.8 L456.9,689.1 L465.7,689"/>
<path d="M465.7,652.3 L465.2,660 L464,666.9 L463.8,674.2 L462.9,681.9 L462.1,689"/>
<path d="M465.7,683.8 L474.3,683.4 L482.3,683.6 L490.9,683.6 L499.1,683 L507.6,682.9 L515.8,682.9"/>
<path d="M515.8,647.7 L516.4,655.9 L513.8,663.6 L515.2,672 L515,680.7 L514.8,689.1"/>
<path d="M515.8,689.1 L525.6,689 L535.6,688.6 L545.5,688.4"/>
<path d="M545.5,647.7 L546,656.1 L546.2,664.1 L546.5,672.8 L546.9,680.9 L547.6,689.1"/>
<path d="M545.5,686.8 L553.4,686.8 L561.8,686.7 L570,686 L578.2,686.1"/>
<path d="M578.2,651.8 L579.1,659.4 L579.5,667.1 L580.2,674.7 L581,682.5 L581.9,690.2"/>
<path d="M578.2,690.2 L587.7,690.1 L596.7,689.6 L605.9,689.3 L615.4,688.7 L624.4,688.5"/>
<path d="M624.4,643 L622.3,651.1 L625.8,659.3 L622.5,664.6 L625,674.1 L622.9,678.3 L620.5,688.6 L621.7,695"/>
<path d="M624.4,695 L632.9,695.2 L641.3,695.5 L650,695.4 L658.6,695.6 L667.1,695.8"/>
<path d="M667.1,652.8 L666.5,659.8 L666.1,666.5 L665.9,673.8 L665.6,680.9 L664.8,687.9 L664.7,695"/>
<path d="M667.1,693.2 L676.6,693.6 L686.3,693.6 L696.5,694.4 L705.9,694.5"/>
<path d="M705.9,645.1 L705.9,653.2 L705.7,661.3 L705.1,669.6 L705.1,677.6 L704.6,685.5 L704.5,693.9"/>
<path d="M705.9,693.9 L714.7,693.7 L723.2,693.3 L731.8,693 L740.4,692.7 L748.8,692.6 L757.2,692.5"/>
<path d="M757.2,683.6 L757.2,693.9"/>
<path d="M757.2,683.6 L767.2,684.1 L776.9,684.2 L786.9,684.5"/>
<path d="M786.9,642.8 L786.9,650.6 L786.7,658.6 L786.4,666.4 L786.7,674.1 L786.2,682.1 L786.2,689.6"/>
<path d="M786.9,689.6 L795.3,689.5 L803.2,689.4 L806,689.4"/>
<path d="M6,720.6 L10.6,720.6"/>
<path d="M10.6,692 L10.4,701 L10.3,709.8 L10.1,719"/>
<path d="M10.6,715.6 L18,716.5 L27.7,718 L37.4,716.6 L45.7,716.7"/>
<path d="M45.7,683.5 L46.1,691.8 L46.6,699.8 L47.3,707.4 L47.8,715.6"/>
<path d="M45.7,711.5 L56.2,711.2 L66.1,711.2 L76.5,711.1"/>
<path d="M76.5,693.5 L76.8,702.2 L77.8,710.1 L78,718.7"/>
<path d="M76.5,718.7 L85.3,719.3 L93.6,719.4 L102.5,719.7 L111,720.1 L119.7,720 L128.2,720.4"/>
<path d="M128.2,718.7 L128.2,723.5"/>
<path d="M128.2,723.5 L136.4,721.6 L146.1,723.7 L158.7,723.1 L166.5,722.7"/>
<path d="M166.5,694 L167.6,700.5 L165.8,709.9 L164.1,717.3 L165.6,723.5"/>
<path d="M166.5,720.6 L173.9,722.1 L183.6,720.3 L190.1,719.9 L198.2,720.4 L208.2,721.3"/>
<path d="M208.2,691.2 L208.3,698.4 L208,705.9 L207.9,713 L208.1,720.6"/>
<path d="M208.2,717.8 L217.3,717.9 L226.4,718 L235.6,718 L244.9,718.1"/>
<path d="M244.9,686.4 L244.4,693.7 L243.7,700.9 L243,708.7 L242.2,715.7 L241.6,723.1"/>
<path d="M244.9,723.1 L253.7,723 L262,722.5 L270.5,722.4 L279.2,721.8"/>
<path d="M279.2,711.9 L279.2,723.1"/>
<path d="M279.2,711.9 L289.9,710.5 L297.7,713.2 L306.2,710.8 L314.9,712.2"/>
<path d="M314.9,711.9 L314.9,714.2"/>
<path d="M314.9,714.2 L323,713.9 L331.7,714 L339.8,714.2 L348.4,714.1 L356.6,713.7 L365.3,713.6"/>
<path d="M365.3,714.2 L365.3,716.4"/>
<path d="M365.3,716.4 L375.5,716.4 L385.1,716.8 L395,717 L405,717.6"/>
<path d="M405,711.5 L405,716.4"/>
<path d="M405,711.5 L413,710.2 L422.6,713.1 L433.2,711.7 L440.4,711.5 L450.1,712.9"/>
<path d="M450.1,689 L450.7,696.7 L451.1,704.9 L451.9,712.5"/>
<path d="M450.1,712.5 L458.6,712.5 L466.9,713.1 L476,713.2 L484.6,713.6 L492.9,713.5"/>
<path d="M492.9,683.8 L492.4,691.4 L492.2,699.4 L491.8,706.9 L491.4,714.5 L491.3,722.4"/>
<path d="M492.9,722.4 L501.5,722.8 L509.7,722.7 L518.3,723.3 L526.7,723.4"/>
<path d="M526.7,689.1 L525.8,697.4 L525,705.5 L524.4,713.8 L523.7,722.4"/>
<path d="M526.7,717.8 L533.8,718.7 L543,718.1 L553,717.9 L558.5,717.3 L567,719.4 L576.5,718"/>
<path d="M576.5,686.8 L576.3,695 L576.9,703.6 L576.5,711.7 L576.8,720.4"/>
<path d="M576.5,720.4 L585.1,720.7 L593.2,720.1 L601.6,720.2 L609.9,720.5 L618.4,720.5 L626.5,720.4"/>
<path d="M626.5,695 L627.8,703.4 L628.4,712 L629.6,720.4"/>
<path d="M626.5,713.8 L635.2,715.2 L648,715.4 L657.9,714.2"/>
<path d="M657.9,695 L658.7,702 L659.3,709.3 L659.4,716.8 L660.3,724"/>
<path d="M657.9,724 L667.6,723.9 L677.2,724.1 L687,724.5"/>
<path d="M687,693.2 L686.8,701.2 L685.9,708.9 L685.7,716.2 L685.1,724.1"/>
<path d="M687,724.1 L696.2,723.5 L705.1,723.4 L714,723.1 L723.3,722.8 L732.4,722.3"/>
<path d="M732.4,716 L732.4,724.1"/>
<path d="M732.4,716 L743.2,715.1 L753.8,715 L764,714.1"/>
<path d="M764,714 L764,716"/>
<path d="M764,714 L771.9,714.3 L780.3,714.5 L788.6,715.2 L796.5,715 L804.6,715.8 L806,715.9"/>
<path d="M6,760.8 L7.6,761.2 L16.5,760.1 L23.7,760.8"/>
<path d="M23.7,715.6 L23.1,722.8 L22.8,730.7 L21.8,738.2 L21,745.5 L20.9,753.2 L20,760.5"/>
<path d="M23.7,755.4 L32.4,755.8 L41.4,754.2 L47.9,755.7 L57.2,756.7 L65.9,754.8"/>
<path d="M65.9,749.2 L65.9,755.4"/>
<path d="M65.9,749.2 L74.8,749.8 L83,750.2 L92.2,750.2 L100.5,751 L109.4,751.1"/>
<path d="M109.4,718.7 L109.5,726.6 L109.6,734.2 L109,741.3 L109.2,749.2"/>
<path d="M109.4,747.2 L118.7,748.2 L125.2,748.1 L132.7,748.2 L141.8,748.9"/>
<path d="M141.8,723.5 L142.5,730.9 L143.7,738.9 L144.5,747 L145.8,754.6"/>
<path d="M141.8,754.6 L152.4,753 L158.4,754.9 L168.4,754.6 L178.3,755.6 L187.6,754.1"/>
<path d="M187.6,752 L187.6,754.6"/>
<path d="M187.6,752 L194.5,753.9 L205.5,752 L211.7,753.4 L218.2,751.7 L226.3,752 L236,752.8"/>
<path d="M236,717.8 L235.6,724.6 L234.8,731.7 L233.8,739.1 L233.3,746.3 L232.7,753.1"/>
<path d="M236,753.1 L245.2,753 L254.7,753.1 L264.6,753.3 L273.8,753.3 L283.3,753.7"/>
<path d="M283.3,711.9 L282.5,720 L282.2,728.5 L281.3,736.4 L280.7,745.1 L280.3,753.1"/>
<path d="M283.3,752 L295.4,751.3 L305.1,754.4 L315.3,753.1"/>
<path d="M315.3,714.2 L315.9,722.6 L316.4,730.8 L317.4,739.1 L317.6,747.2 L318.4,755.3"/>
<path d="M315.3,755.3 L324,754.4 L333.7,755.8 L339.7,755.7 L348,755.2 L359.6,755.6 L366.8,756.1"/>
<path d="M366.8,716.4 L365.8,724.3 L365.6,732.6 L365,740.9 L364.3,749.1 L363.4,757.5"/>
<path d="M366.8,757.5 L375.1,756.5 L382.4,759.3 L393.2,757.3 L401.4,758.4 L408.2,758.9 L417,757.9"/>
<path d="M417,711.5 L417.6,719.3 L418.2,727 L418.5,734.8 L418.8,741.9 L419.1,750 L419.8,757.5"/>
<path d="M417,749.5 L427.2,750.3 L437.6,750.7 L447.9,751.2"/>
<path d="M447.9,746.7 L447.9,749.5"/>
<path d="M447.9,746.7 L456.9,747 L465.7,746.4 L474.6,746.7 L483.3,746.6"/>
<path d="M483.3,712.5 L483.2,720.1 L482.4,727.5 L482.1,735.2 L481.6,742.9 L481.3,750.9 L481,758.2"/>
<path d="M483.3,758.2 L491.6,758.5 L504.2,757.9 L510.8,755.7 L522.2,756.8"/>
<path d="M522.2,722.4 L522.3,729.8 L521.9,736.9 L521.6,743.9 L521.4,751.1 L521.5,758.2"/>
<path d="M522.2,757 L532.4,757 L542.4,757.3 L552.2,757.3"/>
<path d="M552.2,755.4 L552.2,757"/>
<path d="M552.2,755.4 L560.6,755.4 L568.3,755.1 L576.6,754.7 L585.3,754.6 L593.3,754.2"/>
<path d="M593.3,720.4 L592.8,727.7 L591.9,734.3 L591.1,741.5 L590.7,748.3 L590.1,755.4"/>
<path d="M593.3,746.6 L601.5,746 L609.4,746.1 L617.3,745.4 L625.4,745.4 L633.7,745"/>
<path d="M633.7,713.8 L634.4,721.4 L634.6,729.1 L635.2,736.8 L636,744.8 L636.6,752.5"/>
<path d="M633.7,752.5 L642,752.2 L650.7,752.2 L658.7,751.7 L667.3,751.7 L675.5,751.4"/>
<path d="M675.5,751.6 L675.5,752.5"/>
<path d="M675.5,751.6 L685.3,749.9 L691.6,750.3 L699.6,750.3 L707.9,750.4 L716.5,750.3 L725.6,749.9"/>
<path d="M725.6,746.8 L725.6,751.6"/>
<path d="M725.6,746.8 L733.8,746.4 L742,746.3 L750.3,746 L758.2,745.9 L766.5,745.8"/>
<path d="M766.5,714 L766.9,722.2 L767.5,730 L768.2,738 L768.6,745.7 L769,753.7"/>
<path d="M766.5,753.7 L775.4,753.9 L784,754.6 L792.5,755.2 L801.1,755.3"/>
<path d="M801.1,714 L801.2,721.3 L801.1,728.6 L801.1,735.7 L801.4,742.9 L801.2,750.4 L801.2,757.4"/>
<path d="M801.1,757.4 L806,757.7"/>
<path d="M6,789.1 L12.4,788.5 L22,789.8 L30.4,789.4 L36.1,788.8 L47.5,787.1 L54.7,787.5"/>
<path d="M54.7,755.4 L55,763.1 L55.9,770.9 L56.6,778.7 L57.4,786 L57.9,793.9"/>
<path d="M54.7,793.9 L63.1,793.6 L71.5,793.3 L79.6,793.2 L87.9,793.1 L96.1,792.7 L104.2,792.4"/>
<path d="M104.2,749.2 L103.9,756.4 L103.3,764 L102.2,771.8 L101.7,779 L101.4,786.7 L100.5,793.9"/>
<path d="M104.2,793.3 L112.7,793 L121.8,792.9 L130.2,792.5 L139.2,792.5"/>
<path d="M139.2,747.2 L139,754.9 L139,763.2 L138.7,770.8 L139.2,778.7 L139.1,786.8 L138.8,794.6"/>
<path d="M139.2,794.6 L147.7,794.7 L156.3,794.5 L164.9,793.9 L173.6,793.8 L182.4,794 L190.8,793.8"/>
<path d="M190.8,752 L191.8,759.2 L190,764.2 L194.3,773.4 L192.7,778.9 L192.4,787 L194.5,794.6"/>
<path d="M190.8,794.4 L198.2,792.8 L206.8,795.5 L217.2,793.4 L225.6,793.4"/>
<path d="M225.6,752 L224.5,760.9 L226.3,767.5 L224.7,771.2 L224.6,778.2 L226.6,787.4 L226.6,794.4"/>
<path d="M225.6,787.2 L234.2,787.4 L243.4,786.9 L252.5,787.5 L261.4,787.2"/>
<path d="M261.4,753.1 L260.4,760.9 L259.7,769 L258.8,777.1 L258.4,784.7 L257.4,792.9"/>
<path d="M261.4,792.9 L272.4,791.6 L282.3,792.5 L291.5,793.5 L299.9,791.5"/>
<path d="M299.9,752 L300.4,760.3 L299.2,767.9 L302.5,774.7 L298.7,785.4 L300.6,792.9"/>
<path d="M299.9,788.9 L308.9,789 L315.9,788.1 L324.8,787.4 L332,790 L341.2,786.6 L348.2,788.2"/>
<path d="M348.2,755.3 L347.6,762.2 L347.3,769.3 L346.7,776.6 L346.6,783.4 L346.3,790.4 L345.8,797.3"/>
<path d="M348.2,797.3 L358,796.9 L367.5,796.7 L377.3,796.7"/>
<path d="M377.3,757.5 L377.3,765.2 L377.7,773.1 L377.8,781.1 L377.7,789.1 L377.9,797.3"/>
<path d="M377.3,785.5 L386.9,784.2 L394.2,785.9 L400.6,784.3 L410.3,783.6 L419.9,783.3 L427.3,784.5"/>
<path d="M427.3,749.5 L427.9,757 L428.2,764 L429.4,771.3 L429.7,778 L430.2,785.5"/>
<path d="M427.3,785 L437,784.7 L446.2,785 L455.7,784.5 L465,785 L474.5,784.7"/>
<path d="M474.5,746.7 L473.9,754.4 L473.8,762.3 L473.2,769.8 L473.3,777.6 L472.8,785.6"/>
<path d="M474.5,785.6 L484.2,785.5 L494.4,784.9 L504.2,784.6 L514.2,784.3"/>
<path d="M514.2,758.2 L514.2,767.5 L513.7,776.3 L513.7,785.6"/>
<path d="M514.2,784.3 L523.9,783.7 L533.4,783.6 L542.9,782.7 L552.7,782.5"/>
<path d="M552.7,784.3 L552.7,785.3"/>
<path d="M552.7,785.3 L561.6,785.7 L571.2,786 L580.2,786.4 L589.7,786.7 L598.7,787"/>
<path d="M598.7,746.6 L598.8,753.5 L599,761 L598.9,767.9 L598.4,775.1 L598.8,782.2 L598.6,789.6"/>
<path d="M598.7,789.6 L608.1,789.6 L617.6,789.2 L626.9,789 L636.7,789 L645.8,789"/>
<path d="M645.8,789.6 L645.8,792.2"/>
<path d="M645.8,792.2 L654.2,792.4 L662.8,792 L671.2,791.9 L679.7,792 L688.3,792.1"/>
<path d="M688.3,790.1 L688.3,792.2"/>
<path d="M688.3,790.1 L698.4,790.5 L706.9,788.3 L717.4,789.6"/>
<path d="M717.4,751.6 L715.7,761 L714.9,767 L716.9,774.1 L718,781.9 L716.2,790.1"/>
<path d="M717.4,784.7 L727,784.8 L736.7,784.6 L746.3,783.9 L756.3,783.9"/>
<path d="M756.3,746.8 L756.1,754.3 L755.8,762.2 L755.8,770.1 L755.5,777.6 L755.3,785.6"/>
<path d="M756.3,785.6 L765.4,786.2 L774.2,786.5 L782.7,786.4 L791.7,787"/>
<path d="M791.7,753.7 L792.3,761.8 L793,769.8 L793.6,777.8 L794,785.6"/>
<path d="M791.7,784.2 L801.3,784.3 L806,784.5"/>
<path d="M6.8,789.3 L7.6,797.6 L8,805.7 L8,806"/>
<path d="M36.6,789.3 L35.3,798.1 L34.5,802.5 L34.3,806"/>
<path d="M77.1,793.9 L77.2,802.1 L77.3,806"/>
<path d="M160.1,794.6 L160.1,803 L160.1,806"/>
<path d="M196.8,794.4 L196.9,801.2 L197.1,806"/>
<path d="M280.1,792.9 L280.1,800.2 L279.5,806"/>
<path d="M328.9,788.9 L329.6,796.2 L330,803.6 L330.2,806"/>
<path d="M357.9,797.3 L358.2,804.4 L358.3,806"/>
<path d="M394.6,785.5 L396.4,792.9 L394.8,803.5 L396,806"/>
<path d="M430.2,785 L430.6,793.3 L430.6,801.4 L431,806"/>
<path d="M466.7,785 L466.6,793.4 L466.1,801.5 L466.2,806"/>
<path d="M503.9,785.6 L504.3,792.7 L505.3,799.7 L505.7,806"/>
<path d="M543.1,784.3 L543.1,791.5 L543.2,798.8 L543.2,806"/>
<path d="M576.9,785.3 L577.1,792.8 L576.9,800.9 L577.3,806"/>
<path d="M623.1,789.6 L623.9,796.6 L624,804 L624.3,806"/>
<path d="M666,792.2 L665.5,799.7 L664.6,806"/>
<path d="M698.1,790.1 L698.8,797.6 L699.7,805.5 L699.7,806"/>
<path d="M732,784.7 L731.7,791.6 L731.7,798.9 L731.4,806"/>
<path d="M761.1,785.6 L760.4,793.4 L759.8,801 L759.3,806"/>
<path d="M804.2,784.2 L805.2,793.3 L806,801.5"/>
<path d="M806,801.9 L803.9,806"/>
<path d="M517.4,6 L517.9,7.1 L519.9,11.8"/>
<path d="M519.9,11.8 L525.5,10.2 L529.8,10.2 L537.3,10.3"/>
<path d="M537.3,10.3 L536.4,6"/>
<path d="M436.7,6 L436.9,7.3 L438.4,11.8"/>
<path d="M438.4,11.8 L444.3,13.5 L449.8,14.1"/>
<path d="M449.8,14.1 L454.7,12.9 L459.7,11.5 L464.7,9.7 L469.8,7.9 L474.6,7 L477.4,6"/>
<path d="M300,237.3 L305.1,237.6 L308.4,238"/>
<path d="M315.9,238 L315.2,232.8 L315.6,227.8 L315.5,222.1 L316.6,216.2 L317.2,210 L318.5,204.5"/>
<path d="M318.5,204.5 L313.1,203.9 L308.7,205 L303.4,204.1 L300,204.6"/>
<path d="M300,97.3 L300.8,96.6 L306.5,96.1 L311.7,92.1 L318.6,91.6"/>
<path d="M318.6,91.6 L319.4,85.1 L321.2,79.1"/>
<path d="M321.2,79.1 L314.9,75.8 L312.6,73.5 L304.5,72.2 L302.5,70 L300,68.4"/>
<path d="M300,46.3 L301.5,44.8"/>
<path d="M301.5,44.8 L300,43.7"/>
<path d="M300,155.8 L301,155.9 L306.1,155.1 L312.1,156.1 L316.7,155.6 L321.7,155.7"/>
<path d="M321.7,155.7 L324.2,152.6 L327.2,146.2"/>
<path d="M327.2,146.2 L326.9,142.6"/>
<path d="M326.9,142.6 L324.7,135.7"/>
<path d="M324.7,135.7 L320.4,132.8 L316.2,129.1 L312.8,126.2 L308.7,122.5 L304.1,119.1 L300.1,115.7 L300,115.6"/>
<path d="M300,182.6 L302.2,181 L306.6,178.4 L311.1,175.6 L315.8,173.7 L321,171.1 L325.5,168.8"/>
<path d="M325.5,168.8 L323.1,162.7 L321.7,155.7"/>
<path d="M300,12.1 L300.2,12.1 L307.4,13.3 L313,13.7 L319.4,13.9"/>
<path d="M319.4,13.9 L321.7,8.1 L321.3,6"/>
<path d="M301.5,44.8 L307.5,43.6 L314.9,43.2 L321.1,41.7"/>
<path d="M321.1,41.7 L326.2,35.3"/>
<path d="M326.2,35.3 L324.4,30.1 L323,24.2 L320.9,18.8 L319.4,13.9"/>
<path d="M321.2,79.1 L324.5,72.8 L327.7,66.5"/>
<path d="M327.7,66.5 L326.1,61.7 L324.9,57 L324.3,52 L322.8,46.7 L321.1,41.7"/>
<path d="M318.5,204.5 L325.8,200.4"/>
<path d="M325.8,200.4 L327.8,195.8 L329.7,191 L328.6,184.5 L331.1,180.5"/>
<path d="M331.1,180.5 L327.8,174.7 L325.5,168.8"/>
<path d="M324.7,135.7 L325.8,129.1 L328,123.7 L328,118.8 L331.1,112 L333.3,109.6 L334.8,102.6"/>
<path d="M334.8,102.6 L329.5,99.4 L324.6,95.4 L318.6,91.6"/>
<path d="M327.2,146.2 L334.4,146.2 L341.4,146.2"/>
<path d="M341.4,146.2 L346.1,144.3 L351.7,142.8 L357.1,140 L362.8,139.1 L367.5,136.6 L372.7,134.9"/>
<path d="M372.7,134.9 L371,129.1 L369.6,123"/>
<path d="M369.6,123 L362.6,121.4 L356.3,117.1"/>
<path d="M356.3,117.1 L351.8,121.1 L347.8,124.8 L344,128.4 L339.7,131.2 L334.8,135.8 L330.7,139.4 L326.9,142.6"/>
<path d="M347.5,6 L347.6,7"/>
<path d="M347.6,7 L352.8,10.8 L358.2,14.8 L362.7,19.6"/>
<path d="M362.7,19.6 L366.6,16.5 L371.4,14.5"/>
<path d="M371.4,14.5 L373,8.1 L372.3,6"/>
<path d="M334.8,102.6 L342.9,101.7"/>
<path d="M342.9,101.7 L346.2,98.2 L349.9,93.6 L354.1,89.6 L357.2,85.8 L360.8,82"/>
<path d="M360.8,82 L361.9,75.2"/>
<path d="M361.9,75.2 L356.7,73.7 L352.1,72.6 L347.5,71.2 L342.1,70 L337.2,69.4 L332,68.2 L327.7,66.5"/>
<path d="M361.9,75.2 L364.8,72"/>
<path d="M364.8,72 L362.6,66.9 L359.5,62.9 L356.5,58.9 L354.2,54.3 L350.6,49 L348.6,44.6 L345.6,40.2 L342.6,35.6"/>
<path d="M342.6,35.6 L333.4,34.3"/>
<path d="M333.4,34.3 L326.2,35.3"/>
<path d="M340.4,238 L342.5,236.3 L346.6,234.2"/>
<path d="M346.6,234.2 L345.9,229 L345.5,224.4 L344.3,219.1 L343.7,214.3"/>
<path d="M343.7,214.3 L340.7,211.7 L333.6,208.4 L329.8,202.1 L325.8,200.4"/>
<path d="M356.3,117.1 L353.2,113.7 L349.4,109.9 L346.3,105.2 L342.9,101.7"/>
<path d="M331.1,180.5 L337.7,180.6 L343.6,180.6 L350,179.7 L355.7,179.6"/>
<path d="M355.7,179.6 L357,172.9 L357.4,166.9 L358.5,161.1"/>
<path d="M358.5,161.1 L354.7,157.6 L349.8,153.7 L346.2,150.5 L341.4,146.2"/>
<path d="M350.4,238 L349.5,235.7"/>
<path d="M349.5,235.7 L346.6,234.2"/>
<path d="M333.4,34.3 L336.2,30.2 L337.8,24.9 L340.1,20.2 L342.4,16.5 L345.1,11.3 L347.6,7"/>
<path d="M343.7,214.3 L347.4,212.9"/>
<path d="M347.4,212.9 L351.2,209.5 L352.8,203.6 L356.4,197.1 L359.1,194.4 L363.5,190.8 L367.1,184.5"/>
<path d="M367.1,184.5 L361.9,181.6 L355.7,179.6"/>
<path d="M342.6,35.6 L351.9,32.7"/>
<path d="M351.9,32.7 L357.1,27.4 L359,23.6 L362.7,19.6"/>
<path d="M364.8,72 L371,69.4 L377.8,65.6"/>
<path d="M377.8,65.6 L379.1,59.2 L379.6,53.6 L380.4,46.7"/>
<path d="M380.4,46.7 L375.3,43.9 L370.6,42.6 L365.6,39.5 L361.1,37.9 L356.4,34.5 L351.9,32.7"/>
<path d="M369.6,123 L373,117.1 L375.4,112.6 L378.8,106.7"/>
<path d="M378.8,106.7 L377.2,102.6 L371.1,97.4 L370.2,92.6 L365.2,90.3 L365.3,86.9 L360.8,82"/>
<path d="M358.5,161.1 L363.3,158.9 L367,156.3 L371.5,153.8 L375.3,151.1 L379.9,148.5 L384.5,145.9"/>
<path d="M384.5,145.9 L379.9,143.8 L376.5,137.1 L372.7,134.9"/>
<path d="M378.8,106.7 L384.1,105.1 L389.3,104.1 L394.3,102.3 L399.4,101.1"/>
<path d="M399.4,101.1 L396.7,95.7 L394.9,90.4 L392.8,85.8 L390.7,79.6 L388.3,75.3 L385.7,69.4"/>
<path d="M385.7,69.4 L377.8,65.6"/>
<path d="M349.5,235.7 L356.4,233.4 L360.5,236 L367.3,232.6 L370.3,232.2 L378.9,231.2 L384.5,231.8 L388.4,231.1"/>
<path d="M388.4,231.1 L388.9,229.7"/>
<path d="M388.9,229.7 L388.1,223.2 L387,217.9 L386.2,211.7"/>
<path d="M386.2,211.7 L381,211.9 L375.1,211.6 L369.9,212.1 L363.6,211.9 L358,212.3 L353.5,213.3 L347.4,212.9"/>
<path d="M371.4,14.5 L375.9,18.6 L380.1,22.3"/>
<path d="M380.1,22.3 L385.2,19 L391,16 L396.6,13.6 L402.1,10.7"/>
<path d="M402.1,10.7 L402.1,6"/>
<path d="M367.1,184.5 L373.1,186.2 L380.9,185 L386.5,187"/>
<path d="M386.5,187 L387.6,185.7"/>
<path d="M387.6,185.7 L387.7,180.6 L387.8,175.5 L387.5,169.8 L387.1,164.9 L386.6,159.3 L386.4,153.9 L386.5,148.3"/>
<path d="M386.5,148.3 L385.2,146.3"/>
<path d="M385.2,146.3 L384.5,145.9"/>
<path d="M386.2,211.7 L386.6,210"/>
<path d="M386.6,210 L386.5,204.8 L386.4,198.2 L386.3,192.5 L386.5,187"/>
<path d="M385.2,146.3 L389,142.1 L391.7,137.3 L395.5,133.5 L398.5,128.9 L402.2,124.5 L405.8,120.3 L409.2,117.1 L411.6,112.6 L415.6,108.1"/>
<path d="M415.6,108.1 L415.7,106.9"/>
<path d="M415.7,106.9 L410.2,105 L404.3,103.6 L399.4,101.1"/>
<path d="M380.4,46.7 L385.4,40.2"/>
<path d="M385.4,40.2 L384.2,33.7 L381.8,27.7 L380.1,22.3"/>
<path d="M386.8,238 L388.6,233.7"/>
<path d="M388.6,233.7 L388.4,231.1"/>
<path d="M386.6,210 L391.1,209.6 L397.1,208.9 L402.3,209.4 L407.4,209.3 L411.9,208.4 L417.4,208.2 L421.7,207.6 L427,207.7"/>
<path d="M427,207.7 L427.6,204.2 L430.3,196.9 L430.1,192.4 L431.4,187.5"/>
<path d="M431.4,187.5 L425.3,184 L421.5,182"/>
<path d="M421.5,182 L415.8,182.2 L409.9,183.7 L405,184.2 L398.4,184.6 L392.7,184.6 L387.6,185.7"/>
<path d="M388.6,233.7 L393.6,238"/>
<path d="M432.7,238 L430.4,235.5 L427,232 L423.8,228.3"/>
<path d="M423.8,228.3 L417.8,229.1 L412,228.6 L406.6,228.7 L400.2,228.9 L395.2,229.8 L388.9,229.7"/>
<path d="M385.4,40.2 L391.8,39.7 L397.3,38 L403.4,36.6 L409,35.8 L414.9,34.9"/>
<path d="M414.9,34.9 L411.7,30 L410,26.1 L406,19.1 L405.5,15 L402.1,10.7"/>
<path d="M385.7,69.4 L391.6,68.1 L396.4,67.5 L402.2,67 L407.5,65.5 L413.2,64.4 L419.1,63.9"/>
<path d="M419.1,63.9 L422.5,57.9 L424.8,52.6"/>
<path d="M424.8,52.6 L423.7,45.2 L422.3,38"/>
<path d="M422.3,38 L414.9,34.9"/>
<path d="M415.7,106.9 L420,102.9 L424.6,99.6"/>
<path d="M424.6,99.6 L425.5,97.1"/>
<path d="M425.5,97.1 L424.7,92.6 L424.4,87.7 L423.1,79.6 L421.1,76.7 L420.8,67.9 L419.1,63.9"/>
<path d="M421.5,182 L421.7,176.1 L421.3,169.8 L421.8,163.9 L421.3,157.2"/>
<path d="M421.3,157.2 L417.6,153.7 L413.5,150"/>
<path d="M413.5,150 L408.6,149.6 L402.5,149.8 L397.5,148.5 L392,148.3 L386.5,148.3"/>
<path d="M422.3,38 L424.3,36.1"/>
<path d="M424.3,36.1 L427.2,30.8 L429.4,26.2 L432.3,21.9 L435,17.1 L438.4,11.8"/>
<path d="M425.5,97.1 L431.5,93.5 L434.4,92.4 L440.5,91.1 L443.8,87.9 L448.9,84 L455.6,80.1 L458.2,79.1 L463.3,76.8"/>
<path d="M463.3,76.8 L464.1,74.6"/>
<path d="M464.1,74.6 L458.8,71.1 L454.8,66.4 L450,62.6 L445.1,59.2"/>
<path d="M445.1,59.2 L439.6,57.8 L435.4,55.6 L429.3,54.7 L424.8,52.6"/>
<path d="M423.8,228.3 L424.8,222.7 L426.1,217.1 L427.6,211.7"/>
<path d="M427.6,211.7 L427,207.7"/>
<path d="M413.5,150 L415.9,146.2 L418.1,138.5 L422.7,132.3 L423.7,127.9"/>
<path d="M423.7,127.9 L421.1,122.6 L419.6,118.3 L417.3,113.6 L415.6,108.1"/>
<path d="M423.7,127.9 L428,130.5 L432.9,133.3 L437.2,136.7 L442.1,139.7 L445.5,142.3 L450.5,145.3"/>
<path d="M450.5,145.3 L450.8,145.3"/>
<path d="M450.8,145.3 L452.4,139.2 L455,133.4"/>
<path d="M455,133.4 L454,127.7 L453.5,120.5 L452.4,114.5"/>
<path d="M452.4,114.5 L447.3,111.6 L443.7,109.3 L439,107.6 L434.1,104.8 L429.4,101.7 L424.6,99.6"/>
<path d="M431.4,187.5 L436,188.3 L441.5,185.9"/>
<path d="M441.5,185.9 L443.8,181 L445.8,175.9 L447.8,171.9 L450.1,166.4 L451.7,161.8 L453.9,157.6 L455.8,152.4"/>
<path d="M455.8,152.4 L450.8,145.3"/>
<path d="M450.5,145.3 L445.4,147.7 L441.2,149.6 L435.6,151.6 L431.6,153.2 L426.1,155.7 L421.3,157.2"/>
<path d="M442.7,238 L446.5,235.5 L452,236 L456.1,234.1"/>
<path d="M456.1,234.1 L457.6,229.9 L455.5,223.5 L457.5,218.7"/>
<path d="M457.5,218.7 L451.6,218.1 L448.4,217.2 L441.2,216.1 L436.1,215.2 L432.9,213.6 L427.6,211.7"/>
<path d="M457.5,218.7 L459.3,214.2"/>
<path d="M459.3,214.2 L458.1,207.7 L456.5,201.7 L455.9,194.6"/>
<path d="M455.9,194.6 L452.8,190.9 L445,187.3 L441.5,185.9"/>
<path d="M460.7,238 L456.1,234.1"/>
<path d="M455.8,152.4 L462.1,153.7 L468,155.7"/>
<path d="M468,155.7 L471.2,151.6 L473.9,146.8 L476.2,142 L478.8,137.7 L481.3,133.3 L484.6,128.3 L487,123.6"/>
<path d="M487,123.6 L485.5,122.8"/>
<path d="M485.5,122.8 L479.2,122.8 L475.6,127.2 L468.8,127.3 L466.3,131.1 L460.5,133.1 L455,133.4"/>
<path d="M459.3,214.2 L464.7,214.5 L470,213.6 L476.4,213.9 L481.3,213 L486.9,213"/>
<path d="M486.9,213 L487.2,207.6 L486.2,202.4 L485.8,195.9 L485.6,190.7"/>
<path d="M485.6,190.7 L477.3,186.1"/>
<path d="M477.3,186.1 L470.4,186.5 L467.5,190.8 L459.7,194.1 L455.9,194.6"/>
<path d="M452.4,114.5 L457,112 L462,108.1 L466.5,105.6 L470.7,102.1"/>
<path d="M470.7,102.1 L469.5,97.2 L467.9,91.6 L466.1,87.2 L465.2,81.4 L463.3,76.8"/>
<path d="M445.1,59.2 L450.1,54.1 L450.1,51.6 L455.3,45 L458.8,42.1 L461.2,37.5"/>
<path d="M461.2,37.5 L455,36.7 L450.2,36.7 L444,36.4 L441.2,38.4 L435.6,36.5 L428.4,37.3 L424.3,36.1"/>
<path d="M477.3,186.1 L476.4,181.6 L477.1,175.6 L477,171.2 L476,167.4 L476.1,160.5"/>
<path d="M476.1,160.5 L468,155.7"/>
<path d="M485.5,238 L487.2,236.4"/>
<path d="M487.2,236.4 L491.9,232.3"/>
<path d="M491.9,232.3 L493.5,226.2 L494,221.2"/>
<path d="M494,221.2 L490.8,217.5 L486.9,213"/>
<path d="M464.1,74.6 L469.5,71"/>
<path d="M469.5,71 L470.7,65.9 L471.4,60.7 L472.8,55.5 L473.8,50.3 L474.9,44.4 L475.5,39.5"/>
<path d="M475.5,39.5 L468.2,38.1 L461.9,37.2"/>
<path d="M461.9,37.2 L461.2,37.5"/>
<path d="M461.9,37.2 L460.1,32.2 L457.2,28.4 L455.3,21.6 L450.8,17.5 L449.8,14.1"/>
<path d="M470.7,102.1 L472.4,102.9"/>
<path d="M472.4,102.9 L477.7,100.3 L482.8,98.6 L487.8,96.4 L493,95.3 L498.8,93.3 L503.3,90.5 L509,89.2 L513.7,86.7"/>
<path d="M513.7,86.7 L511,79.6 L510.4,75.9"/>
<path d="M510.4,75.9 L504.4,74.9 L501.3,72.9 L495.5,74.9 L490.5,74.7 L484.7,74 L478.1,72.8 L476.1,73.3 L469.5,71"/>
<path d="M475.5,39.5 L480.6,36.8 L486,31.7"/>
<path d="M486,31.7 L488.6,25.1 L490.2,19.6"/>
<path d="M490.2,19.6 L487.1,14.6 L483,9.5 L480.1,6"/>
<path d="M503.9,301.4 L504,301.2 L506,296.3 L507.8,291.9"/>
<path d="M507.8,291.9 L503.4,289.2 L501.4,287.7"/>
<path d="M485.5,122.8 L481.7,118.3 L478.9,112.5 L475.8,107.7 L472.4,102.9"/>
<path d="M510.4,75.9 L512.4,69.2"/>
<path d="M512.4,69.2 L510.6,63.5"/>
<path d="M510.6,63.5 L507.7,59.1 L504.2,55.2 L501.1,52 L498.4,48 L495.1,44.2 L492.6,39.4 L489,35.7 L486,31.7"/>
<path d="M487,123.6 L492.5,124.5 L497.5,125.2 L503.6,127.4 L508.9,127.9"/>
<path d="M508.9,127.9 L510.8,124.8"/>
<path d="M510.8,124.8 L512.2,119.6 L513.8,115 L515.5,110.1 L516.7,105.3 L518.2,100.5 L519.8,96"/>
<path d="M519.8,96 L517,91 L513.7,86.7"/>
<path d="M487.9,238 L487.2,236.4"/>
<path d="M485.6,190.7 L490,189.9 L493.8,189.8 L501.1,188.2 L504,184.7 L511.4,183.8 L515.4,182.7"/>
<path d="M515.4,182.7 L516,177.1 L515.5,172.1 L515.3,167.2 L515.6,160.9 L515.7,155.9"/>
<path d="M515.7,155.9 L512,151.5"/>
<path d="M512,151.5 L506.3,154.5 L503.3,152.6 L496.1,154.1 L490,156.1 L487.4,157.7 L480.6,158.8 L476.1,160.5"/>
<path d="M512,151.5 L511.8,147 L511.2,140.3 L509.6,135.1 L508.9,127.9"/>
<path d="M527.3,437.4 L529.9,435.1"/>
<path d="M529.9,435.1 L527.5,432.4"/>
<path d="M527.5,432.4 L525.1,431.8"/>
<path d="M494,221.2 L498.8,219 L503.2,217.3 L508.6,214.7 L512.7,212.8"/>
<path d="M512.7,212.8 L513.5,205.4 L515,199.7 L514.8,196.9 L515.4,191.8 L516.6,184.5"/>
<path d="M516.6,184.5 L515.4,182.7"/>
<path d="M549,620.1 L547.4,617.3 L546.1,612 L543.7,607.6"/>
<path d="M543.7,607.6 L540.9,606.8"/>
<path d="M510.6,63.5 L513,57 L514.2,51.4 L516.7,45.3"/>
<path d="M516.7,45.3 L515.7,40.1 L515.1,35.7 L514.5,30.5 L513.9,25.8 L512.7,20.7 L511.9,15.5"/>
<path d="M511.9,15.5 L506.1,16.6 L500.6,17.2 L496,19.1 L490.2,19.6"/>
<path d="M512.4,69.2 L518,68.2 L520.2,65.7 L526,61.3 L531.3,58.7 L536.4,56.7"/>
<path d="M536.4,56.7 L538.7,52.9 L541.6,45.8 L542.4,40.5 L543.6,36"/>
<path d="M543.6,36 L542.1,30.4"/>
<path d="M542.1,30.4 L537,33 L532,36.7 L526.4,39 L521.4,42 L516.7,45.3"/>
<path d="M511.9,15.5 L519.9,11.8"/>
<path d="M507.8,291.9 L509.4,291.7"/>
<path d="M509.4,291.7 L511.3,286.4 L513.5,281.7 L516.2,275.8 L517.6,270.1 L520,265.3"/>
<path d="M520,265.3 L515.7,259.7 L509.8,257.2"/>
<path d="M509.8,257.2 L503.1,260.6 L496.7,262.9"/>
<path d="M531.6,510.2 L532.3,510"/>
<path d="M532.3,510 L531.4,507.5"/>
<path d="M527.5,432.4 L525.7,428 L524.7,422.7 L522.5,418.6 L522.5,418.4"/>
<path d="M515.7,155.9 L521.1,154.9 L525,155.4 L532.3,155.6 L539,155.4 L543.1,154.3"/>
<path d="M543.1,154.3 L547.3,150.2 L550.7,145.7 L552.7,141.2 L556.6,136.1"/>
<path d="M556.6,136.1 L551.5,132.3 L545.5,128.2"/>
<path d="M545.5,128.2 L539.2,127.9 L534.3,127.4 L528.2,127.1 L522.5,126.5 L516.9,125.7 L510.8,124.8"/>
<path d="M508.8,327.9 L513.3,327.5 L517.2,324.9 L525.7,325.1 L530.2,322.2 L536.3,322.1"/>
<path d="M536.3,322.1 L536.6,316.6 L536.9,311.2 L536.2,306.5 L536.3,301.2"/>
<path d="M536.3,301.2 L536,300.8"/>
<path d="M536,300.8 L531.1,299 L525,297 L520.1,295.6 L514.6,293.9 L509.4,291.7"/>
<path d="M518.2,389.2 L519.2,387.3 L523.2,383.7"/>
<path d="M523.2,383.7 L521.1,377.8 L519.9,372.4"/>
<path d="M519.9,372.4 L515.4,370.4"/>
<path d="M509.8,257.2 L510,250.6 L510.6,243.8"/>
<path d="M510.6,243.8 L506,240.3 L499.9,239.8 L497.3,234.3 L491.9,232.3"/>
<path d="M510.6,243.8 L515.6,241.7 L521.3,238.1 L526.6,236.1 L531.3,233.6"/>
<path d="M531.3,233.6 L528.3,228.6 L523.7,224.3 L520.9,219.1"/>
<path d="M520.9,219.1 L516.3,215.6 L512.7,212.8"/>
<path d="M519.9,372.4 L522.9,368.1 L525.9,362.9 L529.5,358.5 L532.8,354.3"/>
<path d="M532.8,354.3 L527.9,352.7 L522.6,349.8 L518.3,347.2 L513.2,345.3 L511.7,344.7"/>
<path d="M519.8,96 L526.7,96.3 L533,96.4 L539.7,96.4"/>
<path d="M539.7,96.4 L543.6,95.7 L550.4,94.2 L556,93.3"/>
<path d="M556,93.3 L556.8,87.9 L557.1,81.6 L556.7,76.1 L557.2,70.4"/>
<path d="M557.2,70.4 L551.9,66.5 L546.9,63.7 L541.8,59.6 L536.4,56.7"/>
<path d="M536,300.8 L537.8,296.4 L537.7,289.2 L539.8,283.5 L538.1,276.2 L541,273.1 L540.4,266.4"/>
<path d="M540.4,266.4 L535.9,262.5"/>
<path d="M535.9,262.5 L530.7,263.3 L524.8,263.9 L520,265.3"/>
<path d="M529.9,435.1 L539.1,434.5"/>
<path d="M539.1,434.5 L540.5,430.8 L544.7,424.2 L548.4,420.7 L550.8,414.8"/>
<path d="M550.8,414.8 L549.7,410.2 L549.1,403.9 L547.8,398.6 L546.8,394"/>
<path d="M546.8,394 L542.1,397.8 L538.6,401 L534,403.6 L529.4,406.6 L525.8,410.4 L521.7,413.1"/>
<path d="M539.9,468.8 L541.4,469.1 L548.3,468.7 L552.2,466.3"/>
<path d="M552.2,466.3 L554.8,459.9"/>
<path d="M554.8,459.9 L551.5,454.7 L548.9,449.4 L546,442.9 L543,437.9"/>
<path d="M543,437.9 L539.1,434.5"/>
<path d="M535.9,262.5 L535.4,257 L536.1,252 L535.9,246.3 L535.4,240.2 L535.2,234.9"/>
<path d="M535.2,234.9 L531.3,233.6"/>
<path d="M542.1,30.4 L541.4,24.2 L541.5,18.5 L541,13.1"/>
<path d="M541,13.1 L537.3,10.3"/>
<path d="M546.8,394 L546.8,393.9"/>
<path d="M546.8,393.9 L542.1,391.9 L536.9,390.3 L532.6,387.8 L528,385.8 L523.2,383.7"/>
<path d="M530.7,569.9 L536.7,569 L540.1,570.5"/>
<path d="M540.1,570.5 L544.4,566.6 L545.1,563.4 L550.1,557.4 L552.9,553.2"/>
<path d="M552.9,553.2 L548.6,551.6 L543.8,548.6 L539.6,544.6"/>
<path d="M539.6,544.6 L534.7,545.3 L531.5,546"/>
<path d="M532.8,354.3 L541.2,349.3"/>
<path d="M541.2,349.3 L542.5,345 L542.7,336.8 L543.1,332.3"/>
<path d="M543.1,332.3 L540.9,328.8 L536.3,322.1"/>
<path d="M546.8,393.9 L550.6,390.2 L554.7,387.3 L558.6,384.3 L562.3,380.9"/>
<path d="M562.3,380.9 L558.2,376.4 L557,372.8 L556.2,367.9 L551.2,362.3 L550.7,357.6"/>
<path d="M550.7,357.6 L545.6,353.3 L541.2,349.3"/>
<path d="M516.6,184.5 L520.7,187.5 L527.8,186.9 L530.1,190.1 L537,192 L541.7,193.1"/>
<path d="M541.7,193.1 L547,191.1 L553.5,188.4 L559,186.9"/>
<path d="M559,186.9 L559,183 L555,177.8 L553.1,169.4 L553.2,165.7"/>
<path d="M553.2,165.7 L549.2,161.8 L547.1,158.4 L543.1,154.3"/>
<path d="M536.3,301.2 L541.7,299.8 L547.1,299 L552.2,297.6 L558,296.3"/>
<path d="M558,296.3 L563.1,291.4"/>
<path d="M563.1,291.4 L563.5,286.3 L563.6,281.2 L564.1,276.1 L564.5,269.8 L565.1,265"/>
<path d="M565.1,265 L559.2,265.5 L553.2,265.4 L546.5,266.1 L540.4,266.4"/>
<path d="M536.3,594.7 L537.6,592.8 L538.9,587.5 L541.8,581.8 L545.4,578.4"/>
<path d="M545.4,578.4 L540.1,570.5"/>
<path d="M543.6,36 L548.3,39.4 L553.4,41.4 L558.3,45.3 L562.5,47.1 L567.9,50.6"/>
<path d="M567.9,50.6 L570.1,46.3 L572.9,41.3 L574.6,36.8 L577.3,31.6 L579.7,27 L581.6,21.9"/>
<path d="M581.6,21.9 L578.3,16 L574.3,10"/>
<path d="M574.3,10 L569,10.4 L562.7,11.3 L558.1,11.6 L552.6,12 L546.6,13 L541,13.1"/>
<path d="M520.9,219.1 L525.4,215.2 L528.4,212.8 L533.3,209.4 L537.2,205.4 L541,202.4"/>
<path d="M541,202.4 L541.7,193.1"/>
<path d="M567.1,620.8 L569,618.9 L572.2,614.6 L576.1,611.1"/>
<path d="M576.1,611.1 L572.8,606 L570.5,600.8 L567.1,595.6"/>
<path d="M567.1,595.6 L562.9,597.8 L557.5,599.9 L553.3,602.6 L548.9,605.6 L543.7,607.6"/>
<path d="M535.2,234.9 L538.6,231.6 L545.6,230.8"/>
<path d="M545.6,230.8 L548,227.4"/>
<path d="M548,227.4 L546.9,221.9 L545.2,216.8 L544.2,212.2 L541.9,207.9 L541,202.4"/>
<path d="M539.6,544.6 L541.3,539 L542.1,534.2 L544.2,528.9 L545.4,523"/>
<path d="M545.4,523 L541.7,519.2 L539.4,514 L535.9,510.1"/>
<path d="M535.9,510.1 L532.3,510"/>
<path d="M565.1,265 L571.3,259.8"/>
<path d="M571.3,259.8 L571.3,258"/>
<path d="M571.3,258 L568.1,254 L564.2,250.3 L560.3,246.2 L556.1,243 L552.9,238 L549.3,234.9 L545.6,230.8"/>
<path d="M543.1,332.3 L546.6,330.2 L552.6,331.5 L557.9,329.3 L561.8,329.5 L568.9,326.8 L573.2,326.4"/>
<path d="M573.2,326.4 L576.4,324.3"/>
<path d="M576.4,324.3 L572.9,319.8 L570.8,314.5 L567.6,309.8 L563.8,305.3 L560.5,300.8 L558,296.3"/>
<path d="M535.9,510.1 L540,507.2 L544.1,504.5 L547.8,501.3 L552.1,498.1 L555.8,494.7"/>
<path d="M555.8,494.7 L552.2,491.4 L547.4,489.2 L543.3,486.7 L541.7,485.1"/>
<path d="M550.8,414.8 L556.3,415.3 L562.9,415.9 L569.1,416.9 L574.6,417.7"/>
<path d="M574.6,417.7 L579.8,414.6 L583.9,411.1 L589.3,408.6"/>
<path d="M589.3,408.6 L588.1,402.9"/>
<path d="M588.1,402.9 L584.1,398.2 L580.7,394.3 L577.7,390.5 L574,386.1 L570.2,381.6"/>
<path d="M570.2,381.6 L562.3,380.9"/>
<path d="M545.4,523 L550,525.7 L555.4,527.4 L560.3,530 L564.5,531.8"/>
<path d="M564.5,531.8 L568.1,525.6 L571.4,522.6 L576.1,519.5 L578.4,513.2"/>
<path d="M578.4,513.2 L573.7,510 L569.8,506.4 L564.4,502.5 L560,498.4 L555.9,494.7"/>
<path d="M555.9,494.7 L555.8,494.7"/>
<path d="M545.4,578.4 L551.6,580.5 L557.4,582 L562.7,583.6 L569,584.7"/>
<path d="M569,584.7 L573.8,581.7 L577.8,578.8 L579.8,573.2"/>
<path d="M579.8,573.2 L577.8,568.2 L574.4,564.6 L572.1,559.3 L570,555.4 L566.8,550.7"/>
<path d="M566.8,550.7 L559.3,551.4 L552.9,553.2"/>
<path d="M567.1,595.6 L567.5,590.5 L569,584.7"/>
<path d="M555.9,494.7 L558,489.2"/>
<path d="M558,489.2 L555.9,482.5 L554.1,477.7 L552.2,473.5 L552.2,466.3"/>
<path d="M543,437.9 L549.3,437.8 L554.8,436.3 L560.6,436.3 L566.5,435.6 L571.8,435.1"/>
<path d="M571.8,435.1 L572.9,428.8 L573.4,423.4 L574.6,417.7"/>
<path d="M545.5,128.2 L544,122.5 L544.1,117.1 L543.2,112.6 L541.6,106.4 L540.9,101.8 L539.7,96.4"/>
<path d="M556.6,136.1 L561.1,134.9 L567.1,131.6"/>
<path d="M567.1,131.6 L568,126.8 L569.5,120.4 L569.7,115.5 L569.8,110 L568.3,104.3 L569.5,100.9"/>
<path d="M569.5,100.9 L565.6,98 L560.7,96.3 L556,93.3"/>
<path d="M548,227.4 L554.5,224.2 L557.3,224.3 L563.4,219.2 L569.5,218.7 L572.9,215.4"/>
<path d="M572.9,215.4 L572,209.8 L571.1,202.8 L571.1,197.5 L569.8,191.3"/>
<path d="M569.8,191.3 L563.8,188.5 L559,186.9"/>
<path d="M553.2,165.7 L557.7,164.1 L562.9,161.6 L567.3,159.5 L572.4,158.4 L576.1,156.3 L581.2,154"/>
<path d="M581.2,154 L581.1,146.8 L580.2,141.3"/>
<path d="M580.2,141.3 L574.1,137.2 L569.8,133.3 L567.1,131.6"/>
<path d="M569.5,100.9 L571.8,100.3"/>
<path d="M571.8,100.3 L575.9,96.4 L578.8,92.6 L582.5,88.3 L586.6,84.1 L589.7,79.9 L594.5,75.4 L597.7,71.1"/>
<path d="M597.7,71.1 L595.1,64.4"/>
<path d="M595.1,64.4 L593.7,63.6"/>
<path d="M593.7,63.6 L589.1,62.6 L584.7,61.3 L579.4,58.9 L574.7,58.1 L569.7,56.5"/>
<path d="M569.7,56.5 L565.5,61.3 L561.8,66.2 L557.2,70.4"/>
<path d="M569.7,56.5 L567.9,50.6"/>
<path d="M566.8,550.7 L567.4,548.4"/>
<path d="M567.4,548.4 L566.5,542.8 L565.2,537.4 L564.5,531.8"/>
<path d="M554.8,459.9 L560.2,458.6 L566.4,458.4 L572.9,456.5 L578.2,456.1"/>
<path d="M578.2,456.1 L578.3,450.6 L577.5,443.9"/>
<path d="M577.5,443.9 L575.5,438.7 L571.8,435.1"/>
<path d="M571.3,258 L574.4,253.2 L576.9,246.5 L582,241.5 L583.5,236.7"/>
<path d="M583.5,236.7 L582.4,230.3 L581.3,225 L579.5,220.6"/>
<path d="M579.5,220.6 L572.9,215.4"/>
<path d="M550.7,357.6 L555.8,355.9 L561.6,353.9 L566,351.6 L572,349.5"/>
<path d="M572,349.5 L571.8,343.4 L573,338.5 L572.8,331.8 L573.2,326.4"/>
<path d="M574.3,10 L575.9,6"/>
<path d="M563.1,291.4 L568.6,292.2 L574.4,293.2 L581,293.8 L586.3,295.4 L592.3,295.7"/>
<path d="M592.3,295.7 L594.8,293.6"/>
<path d="M594.8,293.6 L592.9,289.5 L591.3,282.5 L593.5,276.1 L591.1,270.6"/>
<path d="M591.1,270.6 L586.4,268.2 L581.3,265.5 L576.8,262.2 L571.3,259.8"/>
<path d="M567.4,548.4 L571.9,545.8 L577.2,543.6 L582.4,542 L587.3,539.9 L592.5,537.7 L597.5,535.2"/>
<path d="M597.5,535.2 L595.6,531.6 L596.9,526.4 L595.6,519.6"/>
<path d="M595.6,519.6 L590.9,515.7 L585.2,512.6"/>
<path d="M585.2,512.6 L578.4,513.2"/>
<path d="M569.8,191.3 L575.3,187.9 L580,187.4 L582,183.3 L588.9,179.9 L592.6,177.6"/>
<path d="M592.6,177.6 L590.1,170.6"/>
<path d="M590.1,170.6 L587.4,165.3 L584.6,159.3 L581.2,154"/>
<path d="M558,489.2 L561.4,487.3 L568,484.1 L573.2,483.9 L576.3,483.3 L580.8,479.5 L585.7,477.6 L591,476.1"/>
<path d="M591,476.1 L589.7,470.4 L590.3,464.7"/>
<path d="M590.3,464.7 L583.1,460.5 L578.2,456.1"/>
<path d="M576.1,611.1 L580.8,614.1 L586.6,615.2 L593.2,617.8"/>
<path d="M593.2,617.8 L596,614.3 L600,609.8 L603.3,605.7"/>
<path d="M603.3,605.7 L603.3,600.7 L603.7,594.4 L603.5,589.8 L603,583.8"/>
<path d="M603,583.8 L597.5,578.8 L594.3,574"/>
<path d="M594.3,574 L587.6,573.4 L579.8,573.2"/>
<path d="M593.7,63.6 L591.8,58.8 L591.4,53.6 L590.1,47.7 L588.8,42.5 L586.9,38.2 L585.4,33.2 L583.9,28.1 L582.8,22.6"/>
<path d="M582.8,22.6 L581.6,21.9"/>
<path d="M585.2,512.6 L588,507 L587.8,503.2 L590.4,496.1 L590.7,492.8 L593,485 L594.7,481.5"/>
<path d="M594.7,481.5 L591,476.1"/>
<path d="M570.2,381.6 L574.8,377.6 L578.3,373.1 L582.1,369.4"/>
<path d="M582.1,369.4 L584.3,364.6 L585.6,359.4"/>
<path d="M585.6,359.4 L581,356.6 L577,352.6 L572,349.5"/>
<path d="M576.4,324.3 L582.5,323.4"/>
<path d="M582.5,323.4 L584.6,317.9 L586.6,311.8 L588.7,306.5 L590.4,300.8 L592.3,295.7"/>
<path d="M585.6,359.4 L590.4,355.7 L594.7,351.5 L599,348.2 L604.3,344.2"/>
<path d="M604.3,344.2 L601.2,336.8"/>
<path d="M601.2,336.8 L596.6,333.7 L591.9,330.2 L586.6,327.3 L582.5,323.4"/>
<path d="M577.5,443.9 L581.8,440.3 L585.7,437.2 L590.4,433.2 L594.7,430.4"/>
<path d="M594.7,430.4 L593.8,423.8 L593.4,417.6 L592.6,411"/>
<path d="M592.6,411 L589.3,408.6"/>
<path d="M588.1,402.9 L591.1,398.5 L594.8,395.3 L598.4,391.2 L602,387.6 L605.6,383.3 L609,379.5"/>
<path d="M609,379.5 L604.2,376.9 L597.7,375.8 L593.2,373.7 L587.7,371.6 L582.1,369.4"/>
<path d="M593.7,621.8 L593.2,617.8"/>
<path d="M590.3,464.7 L596,460.6 L598.3,456.2 L602.9,454.7"/>
<path d="M602.9,454.7 L601.8,448.8 L600.1,441.9 L599.5,436.3"/>
<path d="M599.5,436.3 L594.7,430.4"/>
<path d="M579.5,220.6 L586.1,217.4 L589.1,215.5 L595.4,216.4 L599,213.3 L604.8,211.8 L611.3,211.7 L615,209.1"/>
<path d="M615,209.1 L616.2,203.4 L612.7,199.7 L612.7,192.1 L614.1,189.4 L613.5,182.8"/>
<path d="M613.5,182.8 L608.6,181.1 L602.7,180.5 L598.2,178.6 L592.6,177.6"/>
<path d="M580.2,141.3 L585.7,139.1 L589,136.6 L594.9,134.5 L601.9,131.8 L605.4,130.4 L611.4,129.2"/>
<path d="M611.4,129.2 L609.5,123.6 L609.3,114.9"/>
<path d="M609.3,114.9 L604.7,112.6 L600.1,111 L595.7,108.9 L590.5,107.4 L586.1,105.8 L580.7,103.8 L576.8,102 L571.8,100.3"/>
<path d="M591.1,270.6 L597.3,266.7 L602,265.4 L605.9,261.5 L610,259.2"/>
<path d="M610,259.2 L609.3,254 L607.3,247.5 L606.5,242.1"/>
<path d="M606.5,242.1 L602.4,240.5 L596.5,239.4 L589.2,237.2 L583.5,236.7"/>
<path d="M594.3,574 L597.4,569.7 L600.5,564.4 L603,559.2 L606.6,554.5 L609.8,549.6"/>
<path d="M609.8,549.6 L605.2,545.1 L601.4,539.6 L597.5,535.2"/>
<path d="M590.1,170.6 L591.6,166.7 L596.7,161.2 L599.6,156.1 L600,153.9 L604.6,147.7 L604.2,144.8 L607,141.4 L610.6,135.2 L613.5,131.7"/>
<path d="M613.5,131.7 L613.6,131.3"/>
<path d="M613.6,131.3 L611.4,129.2"/>
<path d="M601.2,336.8 L604,331.5 L607.9,326.9 L610.3,322.8 L613.8,317.9 L617,313.1 L620.3,308"/>
<path d="M620.3,308 L617.8,303.4 L616.2,297.7"/>
<path d="M616.2,297.7 L609.1,298.1 L605.9,296.4 L598.7,292.9 L594.8,293.6"/>
<path d="M592.6,411 L596.3,412.6 L601.7,411 L608.6,412.5 L611,412.4 L617.7,412.5"/>
<path d="M617.7,412.5 L622.7,406.6 L626.2,404.6 L627.3,399.7 L631.5,394.8"/>
<path d="M631.5,394.8 L631,392.3"/>
<path d="M631,392.3 L625.2,388.5 L620.9,386.2 L615.9,382.3 L610.2,379"/>
<path d="M610.2,379 L609,379.5"/>
<path d="M595.6,519.6 L601,517.2 L605.8,515.9 L610.2,513.8"/>
<path d="M610.2,513.8 L613.2,507.5 L614.2,504.3 L614.2,500.2 L614.6,492.9 L616.6,488.5"/>
<path d="M616.6,488.5 L610.8,486.8 L606,485 L599.8,482.8 L594.7,481.5"/>
<path d="M582.8,22.6 L588.1,23.5 L593.2,26 L599,27.4 L605,28.7 L610.2,29.9"/>
<path d="M610.2,29.9 L614.4,23.9 L618.7,18.8"/>
<path d="M618.7,18.8 L617,12.9 L616.6,10 L615.4,6"/>
<path d="M603,583.8 L608.5,583 L613.5,583.5 L619.4,583 L624.4,583.4 L629.5,582.6"/>
<path d="M629.5,582.6 L635.2,577.9"/>
<path d="M635.2,577.9 L638.4,570.9"/>
<path d="M638.4,570.9 L633.7,566.9 L630,563.7 L624.6,560.3 L620.9,556.6 L615.6,552.8 L611.5,549.3"/>
<path d="M611.5,549.3 L609.8,549.6"/>
<path d="M609.3,114.9 L610.7,111.6 L613.8,104.2 L617.5,100.9"/>
<path d="M617.5,100.9 L616.2,95.1 L614.9,89.7 L613.9,85.7 L611.7,78.3"/>
<path d="M611.7,78.3 L607.1,76.2 L602,73.9 L597.7,71.1"/>
<path d="M616.6,488.5 L622.3,486.5 L627.9,485.2"/>
<path d="M627.9,485.2 L628.4,479.4 L629.1,474.1 L629.1,468.5 L628.6,463.2 L629.3,458.2"/>
<path d="M629.3,458.2 L623.2,453.1"/>
<path d="M623.2,453.1 L618.7,453.1 L613.6,454.1 L608.3,453.8 L602.9,454.7"/>
<path d="M595.1,64.4 L597.7,60.7 L600.9,55.5 L603.8,52.1 L606,47 L609.8,43.5 L612.2,39.1"/>
<path d="M612.2,39.1 L610.2,29.9"/>
<path d="M611.5,549.3 L615.2,546.2 L620.1,543.1 L624.7,538.9 L628.8,536 L632.7,532.5"/>
<path d="M632.7,532.5 L632.4,524.5"/>
<path d="M632.4,524.5 L628.5,521.6 L620.7,517.4 L616.2,517.4 L610.2,513.8"/>
<path d="M624.2,623 L625.8,621.1"/>
<path d="M625.8,621.1 L624.8,611.4"/>
<path d="M624.8,611.4 L619.9,611.4 L615.2,609.4 L608.5,607.2 L603.3,605.7"/>
<path d="M599.5,436.3 L604.3,434.6 L609.9,433.6 L614.2,431.4 L619.3,430.7 L624.3,429"/>
<path d="M624.3,429 L624.4,428.8"/>
<path d="M624.4,428.8 L622.6,422.9 L619.8,418 L617.7,412.5"/>
<path d="M606.5,242.1 L609.7,237.9"/>
<path d="M609.7,237.9 L611.4,232.4 L612,226.1 L613.2,221.1 L614,215.7 L615.6,209.9"/>
<path d="M615.6,209.9 L615,209.1"/>
<path d="M610.2,379 L612.5,373 L611.6,368.1 L610.9,360 L612.7,355.8 L613.8,349.6"/>
<path d="M613.8,349.6 L607.7,347.2 L604.3,344.2"/>
<path d="M611.7,78.3 L616.1,75.6 L620.8,73 L626.3,70.3 L630.5,68.6 L635.4,66.1 L640.4,63.4"/>
<path d="M640.4,63.4 L641.9,55.6"/>
<path d="M641.9,55.6 L637,52.9 L631.7,50.6 L626.6,47.3 L622.2,44.6 L617.4,41.4 L612.2,39.1"/>
<path d="M613.6,131.3 L619.8,131.8 L625.3,133.1 L631.2,133.2 L634.9,135.3"/>
<path d="M634.9,135.3 L638.3,131.5 L640.3,126.5 L643.1,122.4 L646,118 L649.2,114.6 L651.6,109.9"/>
<path d="M651.6,109.9 L649.9,101.2"/>
<path d="M649.9,101.2 L649.1,100.3"/>
<path d="M649.1,100.3 L642.2,101.7 L638.8,100.1 L633.8,102 L626.5,102.5 L622.5,99.4 L617.5,100.9"/>
<path d="M613.5,182.8 L615.6,181.2"/>
<path d="M615.6,181.2 L615.5,175.3 L614.5,169.7 L615.2,165 L614.1,159.2 L614.8,154.3 L614,148.2 L613.4,142.4 L614.1,137.4 L613.5,131.7"/>
<path d="M609.7,237.9 L614.6,238.9 L620.7,239.3 L625.3,239.4 L631.5,239.7 L636.3,240.6"/>
<path d="M636.3,240.6 L641.8,236.5 L646.8,233.4"/>
<path d="M646.8,233.4 L646.1,228.6 L644.8,223"/>
<path d="M644.8,223 L640,221.1 L635,219.1 L630.5,216 L625,214.7 L620.5,211.9 L615.6,209.9"/>
<path d="M615.6,181.2 L621.3,179.5 L627,178.2"/>
<path d="M627,178.2 L628.4,173.1 L629.6,168.7 L630.4,163.2 L632.5,157.7 L633.9,153 L634.6,148.6 L635.6,143.9 L637.4,138.4"/>
<path d="M637.4,138.4 L634.9,135.3"/>
<path d="M616.2,297.7 L619.8,293.2"/>
<path d="M619.8,293.2 L621.5,288.8 L621.1,284.2 L621.1,278.9 L619.1,273.1 L618.6,266.8 L619.1,263"/>
<path d="M619.1,263 L610,259.2"/>
<path d="M618.7,18.8 L625.4,19.4 L630.4,19.9 L636.9,19.9 L643.2,20.3"/>
<path d="M643.2,20.3 L643.6,14.6 L645.5,8.9 L645.9,6"/>
<path d="M613.8,349.6 L620.2,349.3"/>
<path d="M620.2,349.3 L625.5,345.2 L631.4,340"/>
<path d="M631.4,340 L634.2,334.9 L634.6,327.9 L636.2,322.7 L638,318.2"/>
<path d="M638,318.2 L633.9,315.3 L629.6,313.4 L625.2,310.7 L620.3,308"/>
<path d="M619.1,263 L624.1,261.8"/>
<path d="M624.1,261.8 L627.5,256.3 L628.6,250.5 L633.4,244.5 L636.3,240.6"/>
<path d="M624.4,428.8 L630.4,427.9 L635.6,427.7 L641.4,428.3 L647,427.9 L653.1,427.4"/>
<path d="M653.1,427.4 L653.2,420.9 L652.3,415.1 L651.8,408.7"/>
<path d="M651.8,408.7 L645.3,402.3"/>
<path d="M645.3,402.3 L640.6,399.2 L636.3,397 L631.5,394.8"/>
<path d="M623.2,453.1 L623.6,447.5 L623.2,441.6 L624,435.1 L624.3,429"/>
<path d="M629.3,458.2 L634.6,456.6 L639.6,455.4 L645.4,454.7 L650.1,453.1 L655.9,452.2"/>
<path d="M655.9,452.2 L658.7,449.5"/>
<path d="M658.7,449.5 L658.6,444.1 L657.4,438.6 L657.4,432.4"/>
<path d="M657.4,432.4 L653.1,427.4"/>
<path d="M631,392.3 L633,385.5 L635.9,381.9 L639.4,375.6 L643.3,370.8"/>
<path d="M643.3,370.8 L638.9,367.2 L635.9,363.5 L631.3,360.1 L627.3,356.5 L623.5,352.4 L620.2,349.3"/>
<path d="M632.4,524.5 L635.9,519.7 L638.1,516.4 L641.4,511.8"/>
<path d="M641.4,511.8 L640.8,507.6 L637.3,502.1 L636.9,496.7 L635.4,489.8"/>
<path d="M635.4,489.8 L627.9,485.2"/>
<path d="M624.8,611.4 L631.6,606.1"/>
<path d="M631.6,606.1 L630.9,598.7 L629.5,594.8 L631.5,588.9 L629.5,582.6"/>
<path d="M631.6,623.3 L631.4,622.9 L625.8,621.1"/>
<path d="M649.1,100.3 L649.2,94.7 L649.4,88.7 L649,82.7 L648.8,77.5"/>
<path d="M648.8,77.5 L645.6,72.5 L643.2,68.1 L640.4,63.4"/>
<path d="M641.9,55.6 L644.8,51.3 L650.2,48.4 L652.7,44.5"/>
<path d="M652.7,44.5 L653.4,37.8 L651.9,33.6 L650.7,29.6"/>
<path d="M650.7,29.6 L645.8,24 L643.2,20.3"/>
<path d="M638,318.2 L644,316.9 L651.1,314.8"/>
<path d="M651.1,314.8 L652.9,310.4 L655,305.1"/>
<path d="M655,305.1 L652.4,299.8 L650.2,294.6 L647.6,289.6 L644.8,284.6"/>
<path d="M644.8,284.6 L640.9,285.3 L634.4,289.6 L630.7,290 L625.9,290.6 L619.8,293.2"/>
<path d="M638.4,570.9 L643.1,568 L648.4,564.7 L653.3,561.2"/>
<path d="M653.3,561.2 L654.9,555.6"/>
<path d="M654.9,555.6 L651.5,551.4 L648.6,546.3 L645.4,542.6"/>
<path d="M645.4,542.6 L640.9,539.5 L637.7,535.9 L632.7,532.5"/>
<path d="M644.8,284.6 L647.8,276.7 L649.2,272.2"/>
<path d="M649.2,272.2 L642.6,269.3 L639.3,268.3 L635,265.1 L629.4,264.3 L624.1,261.8"/>
<path d="M644.8,223 L650.5,215.8"/>
<path d="M650.5,215.8 L651.3,210 L650.6,205.1 L650.8,199.7 L651.2,194 L651.3,189"/>
<path d="M651.3,189 L645.9,186.8 L640.4,182.4 L636.4,178.7"/>
<path d="M636.4,178.7 L627,178.2"/>
<path d="M631.6,606.1 L637,607 L642,608 L647.1,608.7 L652.4,609.3"/>
<path d="M652.4,609.3 L657.9,601.2"/>
<path d="M657.9,601.2 L654,597.3 L650.5,593.1 L646.8,589.1 L642.8,585.7 L638.6,582.2 L635.2,577.9"/>
<path d="M649.2,272.2 L653.9,269"/>
<path d="M653.9,269 L654.7,263.1 L654.2,258.1 L655.5,253.1 L655.6,247 L655.9,242.1"/>
<path d="M655.9,242.1 L652.1,237 L646.8,233.4"/>
<path d="M643.3,370.8 L649.8,369.3 L655.6,367.3"/>
<path d="M655.6,367.3 L658.5,362.9 L659.6,356.8"/>
<path d="M659.6,356.8 L657.4,350.9 L655.9,345.8"/>
<path d="M655.9,345.8 L650.6,344.7 L646.7,343 L640.7,342 L636.7,341.6 L631.4,340"/>
<path d="M654.5,624.2 L653.3,620.2 L653.3,614.3 L652.4,609.3"/>
<path d="M645.4,542.6 L649,538.2 L652.4,535.3 L654.9,530.4 L658.8,526.3 L661.8,522.6 L664.9,518.9 L668.1,515.1"/>
<path d="M668.1,515.1 L667.4,513.9"/>
<path d="M667.4,513.9 L662.3,513.9 L657.3,513.2 L652.3,512.9 L646.1,512.4 L641.4,511.8"/>
<path d="M648.8,77.5 L654.6,78.5 L660.2,76.1 L665.3,76.7 L671.4,75.3 L675.4,75.3"/>
<path d="M675.4,75.3 L680.9,69.6"/>
<path d="M680.9,69.6 L680.7,64.4 L679.9,59.9 L680.7,54 L679.9,49.5"/>
<path d="M679.9,49.5 L674.6,48.5 L668.8,47.3 L663.7,46.5 L658.2,44.9 L652.7,44.5"/>
<path d="M671,6 L672.4,7.1 L677,10.8"/>
<path d="M677,10.8 L684.6,11 L691.6,11.8"/>
<path d="M691.6,11.8 L699.4,6.8"/>
<path d="M699.4,6.8 L699.5,6"/>
<path d="M637.4,138.4 L642.3,140.4 L647.7,143.1 L652.3,145.2 L657,147.6 L662,150.6"/>
<path d="M662,150.6 L666,149.7 L672.9,149.8"/>
<path d="M672.9,149.8 L674,148.4"/>
<path d="M674,148.4 L677.2,144.6 L680.6,137.8 L681.4,132.9"/>
<path d="M681.4,132.9 L676.9,129.9 L672.9,126.2 L668.9,122.6 L664,119.7 L659.7,116 L655.8,113.6 L651.6,109.9"/>
<path d="M635.4,489.8 L641,487.9 L645.5,485.7 L651.5,483.9 L656.6,482.3"/>
<path d="M656.6,482.3 L656.9,476.9 L656.6,472.8 L656.4,467.7 L655.6,462.4 L655.9,457 L655.9,452.2"/>
<path d="M645.3,402.3 L648.5,397.7 L652,395.1 L656.3,390.9 L658.4,387.7 L664.2,382.3 L666.8,378.6"/>
<path d="M666.8,378.6 L662.5,374.2 L659.8,369.4 L655.6,367.3"/>
<path d="M636.4,178.7 L639.5,174.8 L643.4,170.9 L647.6,166.8 L651.5,162.1 L655.1,158.9 L658.3,154.7 L662,150.6"/>
<path d="M676.8,625 L679.3,620.4 L685.6,618.8"/>
<path d="M685.6,618.8 L683.4,614.5 L682.2,608.9 L681.3,603.3"/>
<path d="M681.3,603.3 L675.9,601.2 L671.6,599.3 L666,596.8"/>
<path d="M666,596.8 L657.9,601.2"/>
<path d="M655,305.1 L660.4,303.2 L665.6,300.4 L672.1,298.6 L677.1,296.2"/>
<path d="M677.1,296.2 L676.1,291.3 L674.8,285.9 L674,280.7 L673.4,275.1"/>
<path d="M673.4,275.1 L667.8,274.7 L662.3,272.6 L658.7,270.2 L653.9,269"/>
<path d="M655.9,345.8 L657.9,338.6 L659.5,333.4 L662,327.4"/>
<path d="M662,327.4 L657.9,323.3 L655.3,319.2 L651.1,314.8"/>
<path d="M666,596.8 L666.4,590.6 L667.5,585.2 L667.6,578.6"/>
<path d="M667.6,578.6 L663.9,573.9 L660.3,570 L656.7,566.1 L653.3,561.2"/>
<path d="M651.3,189 L656.8,188.3 L662.5,186.3 L668.1,185.6 L673.1,184.6 L678.4,183"/>
<path d="M678.4,183 L680.4,178.9"/>
<path d="M680.4,178.9 L678.7,173.5 L677.5,169 L676.8,164.6 L675.4,159.2 L674.4,155.2 L672.9,149.8"/>
<path d="M651.8,408.7 L657.4,405.3 L661.2,405.3 L668.7,402.7 L672.8,401.2 L678.7,397.7"/>
<path d="M678.7,397.7 L679.8,391.8 L679.9,386.1"/>
<path d="M679.9,386.1 L675.1,383.5 L671.7,380.7 L666.8,378.6"/>
<path d="M655.9,242.1 L660.9,242.2 L665.8,240.8 L671.8,240.9 L676.8,240.4"/>
<path d="M676.8,240.4 L684.5,234.2"/>
<path d="M684.5,234.2 L681.8,228.8 L679.8,223.1 L677.6,217.4 L675.6,211.2"/>
<path d="M675.6,211.2 L669.8,211.4 L664.9,214.2 L660.7,212.8 L654.6,214.4 L650.5,215.8"/>
<path d="M649.9,101.2 L655.5,99.8 L659.8,98.9 L665.6,97.9 L670.4,96.3 L675.3,95"/>
<path d="M675.3,95 L676.8,89.1 L675.8,80.4 L675.4,75.3"/>
<path d="M657.4,432.4 L661.3,429 L668,429.9 L672.2,427.9 L676.5,424.8 L680.3,422.1"/>
<path d="M680.3,422.1 L682.6,414.6 L684.1,407.7"/>
<path d="M684.1,407.7 L681.8,402.8 L678.7,397.7"/>
<path d="M675.6,211.2 L679.2,205 L682.1,199.4"/>
<path d="M682.1,199.4 L681.4,192.3 L681.2,187.1 L678.4,183"/>
<path d="M667.4,513.9 L668.8,508.1 L671,502.7 L673.3,497.1 L674.6,490.9"/>
<path d="M674.6,490.9 L669.1,488.5 L662.5,485.5 L656.6,482.3"/>
<path d="M654.9,555.6 L659.9,553.4 L664.5,550.4 L670.3,547.9 L675,545"/>
<path d="M675,545 L675.8,538.7 L676.1,531.3 L677.1,525.2"/>
<path d="M677.1,525.2 L671.3,521.6 L668.1,515.1"/>
<path d="M659.6,356.8 L664.5,355.7 L668.6,354.5 L674.2,353.7 L680.6,351.8 L685.3,351.4 L688.7,349.5"/>
<path d="M688.7,349.5 L690.7,346.3"/>
<path d="M690.7,346.3 L690.3,337.8"/>
<path d="M690.3,337.8 L684.5,333.5 L682.7,329.4 L676.8,327.9"/>
<path d="M676.8,327.9 L669.4,327.1 L662,327.4"/>
<path d="M679.9,386.1 L684.6,383.1 L690.3,379"/>
<path d="M690.3,379 L689,374.6 L691.2,367.8 L690.9,362.2 L689.7,354.9 L688.7,349.5"/>
<path d="M681.4,132.9 L685.4,130.2"/>
<path d="M685.4,130.2 L687.5,123.7"/>
<path d="M687.5,123.7 L685.7,118.7 L685.4,114.3 L684,108.3 L682.5,103.2 L681.5,98.8"/>
<path d="M681.5,98.8 L675.3,95"/>
<path d="M650.7,29.6 L655.6,26.4 L659.5,23.1 L664.4,19.9 L667.8,17.4 L672.2,13.7 L677,10.8"/>
<path d="M674.6,490.9 L681.8,487.2"/>
<path d="M681.8,487.2 L683.1,481 L683,475 L685,470.9 L686.6,464.2"/>
<path d="M686.6,464.2 L682.3,456.6"/>
<path d="M682.3,456.6 L676.8,455.4 L670.1,452.5 L664.2,451.1 L658.7,449.5"/>
<path d="M676.8,327.9 L677.4,321.5 L678.7,317.3 L679.6,311 L682.7,304 L683.7,300.1"/>
<path d="M683.7,300.1 L677.1,296.2"/>
<path d="M679.9,49.5 L682.3,47.9"/>
<path d="M682.3,47.9 L684,42.5 L684.6,37 L685.8,33 L687.4,27.7 L688.8,21.9 L690.1,16.7 L691.6,11.8"/>
<path d="M667.6,578.6 L675.1,576.7 L681.8,574.9"/>
<path d="M681.8,574.9 L680.6,567.2 L680.9,564.1 L681.4,558.1 L683.5,550.3"/>
<path d="M683.5,550.3 L678.8,547.4 L675,545"/>
<path d="M677.1,525.2 L682.2,523.8 L687.7,522.9 L694.2,521.3 L699.3,520.5"/>
<path d="M699.3,520.5 L705.5,512.8"/>
<path d="M705.5,512.8 L704.6,506.2 L703.5,500.3"/>
<path d="M703.5,500.3 L698.3,494.9"/>
<path d="M698.3,494.9 L692.6,491.8 L687.2,489.4 L681.8,487.2"/>
<path d="M681.5,98.8 L687.5,97.2 L689,94 L694.2,88.8 L699.7,87.8"/>
<path d="M699.7,87.8 L697.9,79.7"/>
<path d="M697.9,79.7 L692.2,76.8 L686.2,72.9 L680.9,69.6"/>
<path d="M674,148.4 L679.4,150 L684.1,151.7 L689.7,153.8 L694.9,155.6 L700.4,157.4 L706.2,158.9 L710.9,161"/>
<path d="M710.9,161 L714.1,154.9 L718.2,148.6"/>
<path d="M718.2,148.6 L714,145.5 L709.5,143 L705.8,139.9 L701.8,136.9 L697.1,133.5"/>
<path d="M697.1,133.5 L691.4,132.3 L685.4,130.2"/>
<path d="M682.3,456.6 L686.2,452.4 L687.1,446.1 L689.8,443.5 L694,437.5"/>
<path d="M694,437.5 L690.2,433.4 L687.3,429.5 L683.6,426.3 L680.3,422.1"/>
<path d="M673.4,275.1 L678.2,271.3 L684,267.4"/>
<path d="M684,267.4 L683.3,261.7 L680.1,257.8 L680.4,249.5 L676.5,246.6 L676.8,240.4"/>
<path d="M680.4,178.9 L687.3,179.7 L692.8,179 L698.1,177.6 L704.8,178.1 L709.2,177"/>
<path d="M709.2,177 L710.3,172 L710.8,166.7 L710.9,161"/>
<path d="M682.1,199.4 L687.1,201.5 L692.9,204.2 L698.1,206.3 L702.7,207.9"/>
<path d="M702.7,207.9 L706.4,203.7 L710.8,200.5 L715.1,197 L719.4,192.6 L722.8,188.8"/>
<path d="M722.8,188.8 L718.8,184.6 L713.2,180.8 L709.2,177"/>
<path d="M684.1,407.7 L689.7,408.6 L695.4,409.4 L701.2,410.7 L706.4,411"/>
<path d="M706.4,411 L709.6,405.2 L712.5,400.3 L716,394.7"/>
<path d="M716,394.7 L712.5,386.8 L711.1,381.7"/>
<path d="M711.1,381.7 L705.7,380.5 L700.7,380.2 L695.1,380.2 L690.3,379"/>
<path d="M681.3,603.3 L684.9,600.4 L689.3,597.3 L693.4,593.8 L696.8,590.9 L701.5,588.4 L705,584.8"/>
<path d="M705,584.8 L704.8,583.5"/>
<path d="M704.8,583.5 L697.7,581.9 L694.2,580.7 L689.2,576 L681.8,574.9"/>
<path d="M683.7,300.1 L689.2,301.7 L696.5,301.4 L702,300.5"/>
<path d="M702,300.5 L705,295.4 L707.9,291.2 L711.2,286.8 L714.1,281.7"/>
<path d="M714.1,281.7 L710.1,276.7 L705.1,272.9 L700.9,268.1"/>
<path d="M700.9,268.1 L696.4,266.6 L689.2,268.3 L684,267.4"/>
<path d="M690.3,337.8 L694.5,333.7 L697.8,330.8 L701.7,327.5 L704.8,323.4 L709,319.7"/>
<path d="M709,319.7 L707,315 L705.4,310.2 L703.8,305.3 L702,300.5"/>
<path d="M684.5,234.2 L690.1,234.8 L697.2,233.2 L701.4,235.2 L706.6,233.9"/>
<path d="M706.6,233.9 L705.5,229 L704.9,223 L704.8,218.4 L703.7,212.7 L702.7,207.9"/>
<path d="M697.9,79.7 L702.2,75.3 L705.6,70.6 L709.9,66.6 L713.9,62.5"/>
<path d="M713.9,62.5 L714.8,52.7"/>
<path d="M714.8,52.7 L710.4,53 L704.5,51.7 L700,51.1 L694.8,47.9 L686.5,46.9 L682.3,47.9"/>
<path d="M699.4,6.8 L706.3,10.4"/>
<path d="M706.3,10.4 L712.5,9.6 L718.3,9 L725.2,8.2 L730.8,7.4"/>
<path d="M730.8,7.4 L731.5,6"/>
<path d="M697.6,625.8 L695.1,622.8 L691.9,622.8 L685.6,618.8"/>
<path d="M694,437.5 L701.1,435.9 L707.2,434.5"/>
<path d="M707.2,434.5 L712.7,427.6"/>
<path d="M712.7,427.6 L710.6,422 L708,416.5 L706.4,411"/>
<path d="M705,584.8 L709.9,591.1 L712.9,593.9"/>
<path d="M712.9,593.9 L718.4,594.9 L722.7,596.5 L728.3,597.6 L733.4,598.6"/>
<path d="M733.4,598.6 L736.2,594.9 L739.3,591 L743.4,586.6 L746.1,583.2 L749.8,579.1 L752.7,575.2"/>
<path d="M752.7,575.2 L747.5,572.3 L744.3,566.5 L739.4,564"/>
<path d="M739.4,564 L732.4,563.3 L727.8,564.5 L721.9,566.9 L715.9,564.7 L711,566.9"/>
<path d="M711,566.9 L708.3,573.6 L705.7,579.6 L704.8,583.5"/>
<path d="M711,566.9 L708.6,562.3 L707.2,558.5 L705,553.1"/>
<path d="M705,553.1 L700.1,553 L694.6,551.2 L688.8,551.2 L683.5,550.3"/>
<path d="M704.3,626.1 L704.2,623.9 L705.8,621.4 L709.5,616.1 L710.7,609.3 L710.1,605 L713.4,600.4 L712.9,593.9"/>
<path d="M705,553.1 L707.9,546.4"/>
<path d="M707.9,546.4 L706,541.8 L704.6,536.5 L702.5,531.1 L701.5,525.2 L699.3,520.5"/>
<path d="M698.3,494.9 L700.6,491 L703,486.5 L706.6,481.9 L708.3,478 L712,473.2 L714,469.6 L716.7,464.9"/>
<path d="M716.7,464.9 L711.1,465.1 L706.5,464.9 L702.2,464.4 L696.7,464.9 L692.2,463.9 L686.6,464.2"/>
<path d="M711.1,381.7 L715,376.5 L720.1,370.4"/>
<path d="M720.1,370.4 L719.2,364.5 L718.7,358.3"/>
<path d="M718.7,358.3 L711.4,353.1"/>
<path d="M711.4,353.1 L705.7,351.4 L701,349.9 L695.6,348.1 L690.7,346.3"/>
<path d="M700.9,268.1 L701.7,262.8 L703,256.4 L703.7,251.3 L705.7,245.9 L706,239.9 L707.2,234.3"/>
<path d="M707.2,234.3 L706.6,233.9"/>
<path d="M687.5,123.7 L691.6,119.9 L695.5,116.3 L699.5,113.8 L703.4,110 L707.1,107.3 L711.3,103.5 L714.9,99.9"/>
<path d="M714.9,99.9 L709.2,96.1 L704.5,92 L699.7,87.8"/>
<path d="M711.4,353.1 L713.3,346.8 L714.3,342 L715.8,336.5 L717.1,332.3 L719.3,329.7 L718.7,323.1"/>
<path d="M718.7,323.1 L715.4,320.9 L709,319.7"/>
<path d="M716.7,464.9 L718.9,464.2"/>
<path d="M718.9,464.2 L716.9,459.7 L714.9,454.9 L713.6,449.7 L711.2,444.2 L708.7,439.9 L707.2,434.5"/>
<path d="M739.4,564 L739.3,558.3 L739.6,551.9 L739.8,546.2 L739.8,541 L738.9,535.3 L739.4,529.2"/>
<path d="M739.4,529.2 L734.7,531.2 L730.6,533.8 L726.2,536.3 L721.4,539.1 L716.3,542.1 L712.6,544.4 L707.9,546.4"/>
<path d="M714.9,99.9 L722.1,100.5 L729.2,100.8"/>
<path d="M729.2,100.8 L735.7,96.3"/>
<path d="M735.7,96.3 L734.6,91.2 L731.4,87.1 L727.3,82.2 L725,78.9 L720.8,74.9 L719.6,69.2 L715.7,68.2 L713.9,62.5"/>
<path d="M714.8,52.7 L722,46.3"/>
<path d="M722,46.3 L720.1,41.2 L717.5,36.6 L715.4,31.3 L713.4,25.9 L711.3,20.2 L709.1,15.3 L706.3,10.4"/>
<path d="M718.7,323.1 L724.6,323.9"/>
<path d="M724.6,323.9 L727.4,319.4 L729.4,314.4 L731.8,309.5 L733.9,304.7 L736.5,299.8 L739.2,294.5"/>
<path d="M739.2,294.5 L734.8,292.5 L729.1,288.8 L723.9,286.6 L719.4,284 L714.2,281.7"/>
<path d="M714.2,281.7 L714.1,281.7"/>
<path d="M697.1,133.5 L701.9,131.4 L706.5,128.3 L711.7,126.2 L716.9,123.8 L721.8,121.4 L727.1,118.5"/>
<path d="M727.1,118.5 L728.4,112.2 L728,106.6 L729.2,100.8"/>
<path d="M703.5,500.3 L708.8,497.1 L711.4,496.2 L716.6,494.2 L722.1,489.6 L727.5,488.2"/>
<path d="M727.5,488.2 L732,482.1 L733.4,475.9"/>
<path d="M733.4,475.9 L729.5,471.7 L725.1,468.3 L720.9,464.7"/>
<path d="M720.9,464.7 L718.9,464.2"/>
<path d="M736.5,627.3 L736.1,623.2 L737.8,619.2 L735.5,612.9 L736.4,606.1"/>
<path d="M736.4,606.1 L733.4,598.6"/>
<path d="M707.2,234.3 L712.7,233 L718.7,234.4 L722.4,234.9 L728.5,234.3 L733.8,234.8"/>
<path d="M733.8,234.8 L732.3,230.3 L731.5,224.5 L730.7,219.9 L729,214.5 L728.4,209.8 L727.5,204 L725.5,199.2 L725.5,194.2 L723.9,189"/>
<path d="M723.9,189 L722.8,188.8"/>
<path d="M712.7,427.6 L719.3,427.2 L725.2,426.7 L731.8,427.1"/>
<path d="M731.8,427.1 L734.4,421 L738,414.8 L742.2,411.6 L743.3,405.6"/>
<path d="M743.3,405.6 L741,403.5"/>
<path d="M741,403.5 L734.8,402 L732.7,400.9 L727.6,396.5 L721.8,397 L716,394.7"/>
<path d="M723.9,189 L730.4,186.6 L737.9,183.7"/>
<path d="M737.9,183.7 L742.6,179.6 L748.2,174.9"/>
<path d="M748.2,174.9 L748.8,169.2 L748.8,165 L748.6,158.1"/>
<path d="M748.6,158.1 L745.6,152.5 L740.3,150.8 L734.4,144.9"/>
<path d="M734.4,144.9 L734.1,144.7"/>
<path d="M734.1,144.7 L729,145.7 L724,147.1 L718.2,148.6"/>
<path d="M722,46.3 L729.5,46.4 L736.5,45.7"/>
<path d="M736.5,45.7 L741.2,40.5"/>
<path d="M741.2,40.5 L744.1,35.6 L743.8,30.3 L746.3,25"/>
<path d="M746.3,25 L741.8,20.1 L738.8,16.1 L734.8,11.3 L730.8,7.4"/>
<path d="M739.4,529.2 L739.9,528.1"/>
<path d="M739.9,528.1 L740.8,524.9"/>
<path d="M740.8,524.9 L736.7,521.5"/>
<path d="M736.7,521.5 L731.3,520.4 L726.1,518.8 L720.6,516.8 L716.3,516.2 L710.3,514.3 L705.5,512.8"/>
<path d="M714.2,281.7 L718,277.3 L720.9,273.5 L723.8,269.9 L727.4,265.5 L730.1,262.1 L734.3,258.5 L737.1,254.5 L740.6,250.4"/>
<path d="M740.6,250.4 L739.8,242.9 L738.8,239"/>
<path d="M738.8,239 L736.2,235.9"/>
<path d="M736.2,235.9 L733.8,234.8"/>
<path d="M718.7,358.3 L722.8,354.6 L726.9,350.5 L730.3,347.1 L734.1,343 L738.6,339"/>
<path d="M738.6,339 L738.5,335"/>
<path d="M738.5,335 L734.5,331.6 L729.6,328.1 L724.6,323.9"/>
<path d="M734.1,144.7 L732.3,139.8 L731.5,134.4 L730,128.8 L728.5,123.3 L727.1,118.5"/>
<path d="M741,403.5 L740.5,398.5 L739.6,393.6 L739.3,387.8 L739.6,383.7 L739,378.5 L738.2,373.2"/>
<path d="M738.2,373.2 L732.4,371.8 L725.8,371.2 L720.1,370.4"/>
<path d="M735.7,96.3 L735.8,96.3"/>
<path d="M735.8,96.3 L738.9,91.2 L740.8,86.7 L742.3,80.3 L743.6,73.6 L744.8,69 L747.3,64.9"/>
<path d="M747.3,64.9 L746,60.6 L742.4,54.1 L740,50.5 L736.5,45.7"/>
<path d="M736.7,521.5 L734.8,517.1 L734.6,509.6 L733.1,505.1 L730.2,498.3 L728.5,494.4 L727.5,488.2"/>
<path d="M734.4,144.9 L737.5,141.2 L740.6,136.8 L744.1,132.7 L748.3,128.7 L751.8,125.4 L754.9,121.8 L758.2,117.3"/>
<path d="M758.2,117.3 L755.8,111.5 L752.2,106.1 L749.5,100.8"/>
<path d="M749.5,100.8 L742.2,97.5 L735.8,96.3"/>
<path d="M720.9,464.7 L724.3,460.1 L727.1,455.7 L729.7,451.6 L732.1,446.3 L735.5,441.9 L738.1,437.5"/>
<path d="M738.1,437.5 L735.5,432.5 L731.8,427.1"/>
<path d="M740.8,524.9 L746.5,522.6 L751.8,519.9 L758.1,516.8"/>
<path d="M758.1,516.8 L759.3,506.9"/>
<path d="M759.3,506.9 L757.6,502.4 L753.4,496.8 L750.7,494.5 L748.2,487.9 L743.5,486.2 L739.2,479.4 L736.9,475.9"/>
<path d="M736.9,475.9 L733.4,475.9"/>
<path d="M736.9,475.9 L741.8,474 L745.6,471.4 L749.6,468.9 L754.1,465.9 L758.9,463.3 L763.5,461.5"/>
<path d="M763.5,461.5 L760.9,456.5 L757.5,452.5 L754.4,447.2 L751.3,442.8"/>
<path d="M751.3,442.8 L744.2,440.5 L738.1,437.5"/>
<path d="M751.3,442.8 L755.7,439.9 L756,433.3 L759.6,431.7 L763,425.3 L764.6,421.5"/>
<path d="M764.6,421.5 L760.5,416.3 L757.1,410.1 L753.5,404.9"/>
<path d="M753.5,404.9 L748.8,404.1 L743.3,405.6"/>
<path d="M738.2,373.2 L744.1,370.2"/>
<path d="M744.1,370.2 L747.3,366.2 L749.2,360.3 L749.6,353.3"/>
<path d="M749.6,353.3 L745.6,348.1 L742.3,343.5 L738.6,339"/>
<path d="M739.2,294.5 L748.9,293.9"/>
<path d="M748.9,293.9 L748.8,288.9 L749.4,282.5 L749.9,277.1 L749.3,271.2 L749.8,266 L750.1,260.3"/>
<path d="M750.1,260.3 L745,254.9 L740.6,250.4"/>
<path d="M738.5,335 L742.4,332.1 L747,329.4 L751.3,326.9 L755.3,324.1 L760.1,320.9 L763.9,317.7"/>
<path d="M763.9,317.7 L763,311.9 L763.4,306.5 L762.7,301.4"/>
<path d="M762.7,301.4 L757,299 L753.8,297.2 L748.9,293.9"/>
<path d="M736.2,235.9 L738.5,230.7 L742.2,226.2 L744.7,221.8 L747.8,216.9 L750.7,212.6"/>
<path d="M750.7,212.6 L748.2,207.9 L746,203.3 L744.4,197.6 L742.6,193.4 L740.3,188.8 L737.9,183.7"/>
<path d="M736.4,606.1 L741.8,606.6 L748.5,605.9 L753.5,605.7 L759.6,606.2"/>
<path d="M759.6,606.2 L758.7,600.6 L758.3,596.2 L757.2,590.8 L756.1,585.8 L755.8,580 L754.5,575.2"/>
<path d="M754.5,575.2 L752.7,575.2"/>
<path d="M758.5,628.2 L761.8,626.7"/>
<path d="M761.8,626.7 L766.8,619.9 L769.1,614.6"/>
<path d="M769.1,614.6 L764,610.6 L759.6,606.2"/>
<path d="M746.3,25 L751.6,20.8 L756.2,19.2 L763.1,16.1 L767.4,14.4"/>
<path d="M767.4,14.4 L766.3,9.7 L766.2,6"/>
<path d="M753.5,404.9 L757.8,400.2 L762.4,396.3 L766.3,391.8"/>
<path d="M766.3,391.8 L766.9,383.9"/>
<path d="M766.9,383.9 L761.8,381 L757.7,378.8 L753.7,375.1 L748.7,372.5 L744.1,370.2"/>
<path d="M749.6,353.3 L756.3,353.2 L762.1,353.5 L768.7,354.4"/>
<path d="M768.7,354.4 L769,348.5 L768.5,343.9 L768.9,338.8 L769.6,333.6 L769.2,328.7 L769.6,322.8"/>
<path d="M769.6,322.8 L763.9,317.7"/>
<path d="M754.5,575.2 L762.7,573.4"/>
<path d="M762.7,573.4 L764.6,567.5 L767.3,564.3 L768.1,558"/>
<path d="M768.1,558 L768.1,557.9"/>
<path d="M768.1,557.9 L764.9,555.8 L762.2,551.3 L758.6,546.9 L755.8,542.3 L751.9,538.3 L746.9,536.8 L743.7,533.2 L739.9,528.1"/>
<path d="M738.8,239 L744.8,239.5 L750.6,238.7 L755.3,236.4 L762.7,236.2 L768.5,234.3 L772.4,233"/>
<path d="M772.4,233 L775.3,228.2 L777.9,224 L780.2,218.9 L783.1,214.4"/>
<path d="M783.1,214.4 L779.3,209.1 L776.4,204"/>
<path d="M776.4,204 L771.2,206 L766.2,207 L759.9,210.9 L756.2,211.9 L750.7,212.6"/>
<path d="M766.9,383.9 L769.9,379.6"/>
<path d="M769.9,379.6 L771,374.2 L771.5,368.3 L772.6,363.5 L773.2,358.1"/>
<path d="M773.2,358.1 L768.7,354.4"/>
<path d="M776.4,204 L775.4,198 L775,189.6"/>
<path d="M775,189.6 L770.3,187.7 L765.6,184.8 L761.2,182.4 L756.9,179.7 L752.8,177.8 L748.2,174.9"/>
<path d="M748.6,158.1 L752.8,156.1 L757.4,153"/>
<path d="M757.4,153 L760.3,146.9 L763.4,145.1 L767.1,140.5 L769.5,133.2 L774.2,129.4"/>
<path d="M774.2,129.4 L770.1,126.6 L765.9,123.2 L762.5,120 L758.2,117.3"/>
<path d="M747.3,64.9 L750.9,66.2 L756.4,66.2 L761.9,65 L768.2,65.4"/>
<path d="M768.2,65.4 L771.6,60.9 L775.2,56.6"/>
<path d="M775.2,56.6 L777.5,50.7"/>
<path d="M777.5,50.7 L774.6,45.5"/>
<path d="M774.6,45.5 L769.5,44.7 L763.6,44.2 L758.4,42.4 L752,42.2 L746.5,41 L741.2,40.5"/>
<path d="M767.4,14.4 L775.5,19.8"/>
<path d="M775.5,19.8 L781.1,18.1 L786.4,18.6 L792.3,16.2 L795.8,16.6 L802.3,15.1 L806,15.5"/>
<path d="M749.5,100.8 L755.1,98.8 L759.2,96 L764.3,93.9 L770.1,91.7 L775,89.1"/>
<path d="M775,89.1 L773.1,83.1 L771.2,77.4 L769.7,71.9 L768.2,65.4"/>
<path d="M759.3,506.9 L763,502.7 L766.1,497.6 L769.4,492.6"/>
<path d="M769.4,492.6 L769,487 L769.5,482.8 L768.4,477.5 L768.8,472.1 L768.7,467 L767.8,462.3"/>
<path d="M767.8,462.3 L763.5,461.5"/>
<path d="M768.1,557.9 L767.6,553 L768.1,547.2 L767.8,541.6 L767.5,537.3 L767.6,531.3 L767.6,527 L767.6,521.3"/>
<path d="M767.6,521.3 L763.4,519.6 L758.1,516.8"/>
<path d="M763.9,628.4 L761.8,626.7"/>
<path d="M769.1,614.6 L773.5,612.9 L777.8,610.3 L783,607.9"/>
<path d="M783,607.9 L788.3,602.2"/>
<path d="M788.3,602.2 L786.3,597.8 L783.5,593.1 L781.1,589.2 L777.6,584.3 L775.4,580.1"/>
<path d="M775.4,580.1 L768.7,577 L762.7,573.4"/>
<path d="M750.1,260.3 L755.5,260.7 L760.9,262.4 L765.7,263.4 L770.7,264"/>
<path d="M770.7,264 L772.3,260.4 L772.9,253.8 L776,250.5 L778.4,244.5"/>
<path d="M778.4,244.5 L775.4,238.7 L772.4,233"/>
<path d="M767.8,462.3 L774.7,460.3 L780.9,458.2"/>
<path d="M780.9,458.2 L780.9,452.9 L780.5,448.2 L781.5,443.1 L780.5,437.2 L780.7,431.7 L781,426.8"/>
<path d="M781,426.8 L775.5,425.1 L770.3,423.6 L764.6,421.5"/>
<path d="M775,189.6 L779.5,186 L785.1,181.4"/>
<path d="M785.1,181.4 L787.7,175.8 L790.6,170.8 L793.3,164.8"/>
<path d="M793.3,164.8 L792.4,162.7"/>
<path d="M792.4,162.7 L788.7,160.3 L780.7,160.9 L778.9,156.8 L773.7,157.8 L767.1,155.1 L763,153.6 L757.4,153"/>
<path d="M781,426.8 L785.2,424.6 L790.2,421.2 L794.9,416.3 L797.9,413.3"/>
<path d="M797.9,413.3 L798.9,410.8"/>
<path d="M798.9,410.8 L796.7,406.5"/>
<path d="M796.7,406.5 L792.1,404.4 L786.2,401.1 L781.7,399.2 L776.5,397 L771.6,394 L766.3,391.8"/>
<path d="M767.6,521.3 L773.4,522.7 L778.4,523.1 L784.6,523.8 L790.1,524.4"/>
<path d="M790.1,524.4 L794.3,518.6 L797.6,513.5"/>
<path d="M797.6,513.5 L794.2,508.2 L792.3,503.2 L789.6,499 L786.4,493.8"/>
<path d="M786.4,493.8 L780.4,494 L775,492.5 L769.4,492.6"/>
<path d="M762.7,301.4 L767.8,297.3 L773.5,293.4"/>
<path d="M773.5,293.4 L773.4,288.5 L773.3,283 L774.6,278.2 L773.7,273.9 L774.4,268.4"/>
<path d="M774.4,268.4 L770.7,264"/>
<path d="M774.2,129.4 L780.4,129 L785.2,127.8 L791.3,127.1"/>
<path d="M791.3,127.1 L792.7,121.3 L794,114.9 L794.3,108.9 L795.7,103.5"/>
<path d="M795.7,103.5 L792.9,99 L790.6,93.9"/>
<path d="M790.6,93.9 L785.2,93.8 L781.5,89.4 L775,89.1"/>
<path d="M774.6,45.5 L775,38.6 L776.1,35.8 L774.1,28.5 L776,25.1 L775.5,19.8"/>
<path d="M787.4,629.3 L787.4,629.2 L786,624.1 L785.4,618.9 L783.8,613 L783,607.9"/>
<path d="M769.6,322.8 L775.3,323.9 L780.1,325.6 L785.2,326.9 L790.4,328 L795.5,329"/>
<path d="M795.5,329 L799,322 L802.2,318.3"/>
<path d="M802.2,318.3 L799.4,313.9 L796.5,308.5 L793.5,304.1 L790,298.5 L786.8,293.8"/>
<path d="M786.8,293.8 L778.7,293.1 L773.5,293.4"/>
<path d="M790.6,93.9 L793,90.6 L795.8,83.3 L798.7,78.8"/>
<path d="M798.7,78.8 L794.2,74.8 L791.4,71 L787,67.6 L783.2,64.1 L779.7,60.3 L775.2,56.6"/>
<path d="M773.2,358.1 L777.8,356.6 L783.1,355.4 L788.6,354.9 L793.3,353.8"/>
<path d="M793.3,353.8 L796.1,348.1 L799.1,340.3"/>
<path d="M799.1,340.3 L798.1,333.7 L795.5,329"/>
<path d="M796.7,406.5 L797.9,399.2 L798.4,393.8 L799.4,388.4 L799.6,383.3 L801.2,378.2"/>
<path d="M801.2,378.2 L795.8,378.3 L790.9,378.7 L785,378.4 L780.8,379.3 L774.6,379.4 L769.9,379.6"/>
<path d="M775.4,580.1 L780.1,576.5 L784.6,573.7 L790.2,571.2 L795.1,567 L799.3,564.5"/>
<path d="M799.3,564.5 L797.7,559.4 L795.5,554.8 L794,549.3 L792.6,544.9"/>
<path d="M792.6,544.9 L786.2,546 L784.2,551.3 L776.1,551.7 L773.6,555.8 L768.1,558"/>
<path d="M792.6,544.9 L795.1,536"/>
<path d="M795.1,536 L792.3,530.1 L790.1,524.4"/>
<path d="M778.4,244.5 L784.8,245.6 L790,247 L796.2,248.5 L802.3,250.4"/>
<path d="M802.3,250.4 L803,245.3 L803.4,239.8 L804,234.5 L805.1,229.5 L805.6,223.8 L805.8,219.1"/>
<path d="M805.8,219.1 L799.6,217.8 L794.4,217.3 L788.8,215.8 L783.1,214.4"/>
<path d="M795.7,103.5 L801.3,103.1 L805.5,102.5 L806,102.4"/>
<path d="M806,71.5 L803.7,73.9 L798.7,78.8"/>
<path d="M805.8,219.1 L806,219"/>
<path d="M806,193.7 L804,190.4"/>
<path d="M804,190.4 L800.9,188.5 L793.6,184.3 L788.1,182.2 L785.1,181.4"/>
<path d="M774.4,268.4 L780.5,267.9 L785.4,266.8 L791.7,266 L796.8,265.2 L802.5,264.7"/>
<path d="M802.5,264.7 L806,259.7"/>
<path d="M806,257.7 L802.3,250.4"/>
<path d="M792.4,162.7 L792.4,157.2 L792.8,151.2 L793.4,146.6 L792.5,140.6 L793.2,135 L793.4,129.6"/>
<path d="M793.4,129.6 L791.3,127.1"/>
<path d="M801.2,378.2 L804.6,373.6"/>
<path d="M804.6,373.6 L801.3,368.5 L799.4,364.1 L796.6,359.3 L793.3,353.8"/>
<path d="M786.4,493.8 L790.8,485.7"/>
<path d="M790.8,485.7 L790.9,479.2 L791.3,472.8 L794.2,467.8 L794.9,462.4"/>
<path d="M794.9,462.4 L787.4,459.9 L780.9,458.2"/>
<path d="M806,630 L805.9,630"/>
<path d="M806,613.2 L805.5,612.3 L804.6,606.2 L803.2,603.1"/>
<path d="M803.2,603.1 L796.1,602.6 L788.3,602.2"/>
<path d="M794.9,462.4 L801,460.8 L806,461.1"/>
<path d="M806,433.8 L805.8,433 L804.3,428.2 L803.3,424.3 L800.2,418.5 L797.9,413.3"/>
<path d="M795.1,536 L799.4,535.9 L805.2,537.4 L806,537.5"/>
<path d="M806,508.9 L802,510.7 L797.6,513.5"/>
<path d="M786.8,293.8 L791.1,291.2 L796.7,287.6 L801.3,284.7"/>
<path d="M801.3,284.7 L801.4,281.5 L801.4,273.6 L803.9,269.5 L802.5,264.7"/>
<path d="M777.5,50.7 L783,50 L788,50.5 L794,50.1 L799.5,49.3"/>
<path d="M799.5,49.3 L803.4,44.1 L806,38.4"/>
<path d="M798.9,410.8 L805.3,409.7 L806,409.7"/>
<path d="M806,373.2 L804.6,373.6"/>
<path d="M806,494.2 L802.1,491.9 L796.4,488.8 L790.8,485.7"/>
<path d="M799.1,340.3 L804.6,341.2 L806,341.3"/>
<path d="M806,316 L802.2,318.3"/>
<path d="M799.3,564.5 L804.4,566.2 L806,567.3"/>
<path d="M806,287.8 L801.3,284.7"/>
<path d="M793.3,164.8 L798.4,165.8 L804.4,166"/>
<path d="M804.4,166 L806,165.4"/>
<path d="M806,131.2 L804.4,130.6 L799.7,129 L793.4,129.6"/>
<path d="M806,63.1 L804.2,58.8 L801.1,53.9 L799.5,49.3"/>
<path d="M804,190.4 L806,188.5"/>
<path d="M806,169.9 L804.4,166"/>
<path d="M803.2,603.1 L806,600"/>
</g>
<g fill="#004262" stroke="#000" stroke-width="1.2">
<path d="M-10,704 L6,706.2 L11,703.7 L13.4,702.8 L17.2,701.2 L19.7,698.7 L24.7,699.4 L29.1,698.7 L30.3,702.5 L27.2,706.2 L28.5,708.7 L31.7,707.8 L33.7,707.6 L37.2,706.2 L42.2,705.9 L45.9,705.6 L48.4,706.2 L45.9,708.7 L45.3,711.9 L44.7,716.2 L46.8,715.9 L50.9,716.2 L51.7,718.4 L52.2,722.4 L50.9,726.2 L54.4,724.8 L56.2,723.6 L59.7,723.7 L60.9,726.2 L65.9,727.4 L70.9,726.8 L72.1,732.4 L75,735.4 L75.9,737.4 L78.4,739.9 L73.4,739.9 L70.4,741.4 L65.9,742.4 L67.5,745.2 L70.9,748.6 L74,749.7 L77.1,752.4 L80.9,753 L82.3,754.7 L85.9,754.9 L88.8,757 L93.3,757.4 L93,770 L160,770 L161,757 L163.2,754.9 L165.2,752.5 L167.1,749.3 L170,748 L173.7,746.9 L176.6,746.2 L179.9,747 L182.5,746.1 L185,745 L188.2,746.1 L190.2,746.2 L194.7,746.2 L197.8,748.2 L200,748 L202.1,750 L204.4,752.3 L207.7,754.5 L209,757 L240,770 L240,757 L235.7,756.4 L232.1,752.9 L230.4,751 L229.1,749.4 L226.9,745.7 L225.1,743.1 L221.7,742.7 L217.5,741.5 L214.5,740.4 L210.6,738.6 L206.5,736.4 L203.2,732.4 L201.2,729.8 L201.3,727.1 L201.8,722.9 L202.5,719.1 L204.3,715.2 L206,713.5 L209.1,709.8 L212.3,707.9 L214.8,706.9 L217.9,705.8 L219.8,703.2 L221.4,701.1 L224.3,697.2 L225.1,693.9 L226.8,690.3 L226.7,686.3 L227.8,683.2 L228.2,678.9 L226.2,676.5 L227.3,672.2 L226.4,668.6 L223.8,667.9 L219.3,668.6 L216.3,668.6 L212.3,669.2 L210.6,670.7 L206.5,670 L206.3,673.3 L205.2,676.6 L203.8,680.6 L199.8,683.2 L198.7,688.1 L198.5,691.2 L194.5,695.2 L191.3,695 L187.9,693.9 L185.2,688.6 L181,688 L178.6,688.6 L176.6,683.2 L178.6,680 L182.6,680.2 L185.2,679.3 L188.2,677.3 L189.5,675 L191.9,672.6 L195.9,668.6 L199.9,667.6 L202.5,667.3 L207.8,664.6 L210.1,662 L212.8,659.2 L214.5,658 L217.1,652.7 L219.8,655.3 L225.1,652.7 L229.4,653.3 L233,652 L236,650.2 L241,648 L244.3,647.9 L247.2,645.9 L250,645.6 L253.6,648.2 L257.5,649 L261.6,649.3 L264,651 L266.2,650 L270,650.6 L272.8,651.4 L277.5,652.5 L282,652.5 L284,651.5 L287.5,649 L291.6,648.8 L295,650 L298.8,651.6 L302.5,654 L304.2,650.2 L306,647.5 L305.1,643.6 L305.4,641.3 L305.5,636.7 L305.6,635 L305,631 L309,627.5 L311,622.5 L315,624 L320,625 L320.8,628.7 L319.5,631.2 L319.9,634.9 L321,637.5 L321.7,641.3 L323.2,644.6 L325,647.5 L327.1,649.8 L330,654 L331.8,656.6 L334,660 L337.8,659.9 L340,660.6 L343.5,659.6 L347.9,657.7 L350.7,657.5 L354,656.4 L358,656.3 L360.7,654.7 L364.6,653.4 L368.1,652.2 L370.8,652.1 L376.1,650.5 L378.3,651.1 L382.2,649.4 L384.8,648.1 L388.1,649.2 L392.8,648 L395.9,646.8 L399,647.3 L402.6,647.1 L405.6,646.9 L408.7,646.5 L411.2,646.8 L414.9,647.3 L418.7,646.8 L422.6,647.7 L425.2,647.1 L428.3,648.1 L432.1,649.5 L434.3,648.9 L438.4,649.4 L441.9,650.9 L446.2,652.1 L449.2,653.1 L452.5,653.6 L455.6,655.4 L458.5,656.2 L460.4,657.8 L463.5,658.3 L466.5,659.2 L470,661.8 L473.1,661.6 L474.6,663.9 L477.6,665.2 L480.6,667.6 L483.9,669.1 L486.9,672.2 L489.3,675.4 L493,676.8 L495.3,679.2 L497.3,682.4 L501.3,683.3 L503.7,686.2 L506.2,689.3 L509.4,691.9 L511.6,694.2 L514,697.1 L515,700.3 L514.9,705.2 L515.7,708.8 L513.6,711.6 L517.1,711.6 L522,710.9 L524.9,710.7 L529,710.2 L531.9,708.6 L536.5,707.3 L538.9,706 L543,705.1 L547.3,703.8 L550,701.6 L553.4,700.2 L556.2,700 L560,697.5 L561.9,696.7 L566.5,695.1 L567.4,693.3 L571.2,691.9 L574.5,690.7 L579.7,689 L583.6,688.5 L586.7,689 L585.3,683.4 L585.7,680 L588.1,676.4 L591.5,674.6 L596.6,673.6 L600.7,675.1 L605,675 L608.2,673.6 L612,673.6 L614.9,676.6 L616.7,677.4 L619,680.6 L621.1,681.8 L624.6,682.9 L627.9,685.5 L630,686.2 L632,687 L635.1,690.6 L635.4,692.8 L637.8,696.2 L641.3,698.7 L643,701 L644.6,702.4 L648,705.9 L649.8,707.9 L652.4,710 L654,712.6 L654.5,715.4 L655.6,719.1 L657.8,721 L658,725 L659.8,727.3 L663.8,729 L665.6,731.1 L668.8,734.3 L669.7,736.8 L672.8,739.7 L673.5,741.1 L676.9,744.5 L677.8,747 L679.5,750.4 L681.9,753 L683.3,756 L686.1,757.1 L690,756 L693.9,757.4 L697.8,757.8 L699.8,760.2 L701.7,763.9 L703,767 L708.6,779.6 L712.2,788.6 L714,792 L720,820 L-10,820Z"/>
<path d="M375,632 L378,637 L386,634 L389,631 L391,638 L394,644 L398,644 L389,647 L382,648 L368,652 L372,645 L376,641Z"/>
<path d="M345,650 L352,644 L356,646 L362,640 L364,645 L358,652 L350,656Z"/>
<path d="M418.7,643.7 L427.2,638.1 L431.4,640.9 L438.4,642.3 L446.9,639.5 L452.5,642.3 L455.3,648 L449.7,648 L441.2,646.6 L432.8,648 L424.4,648Z"/>
<path d="M473.6,656.4 L480.6,657.8 L487.6,660.6 L494.7,652.2 L498.9,655 L491.9,663.4 L487.6,669.1 L480.6,666.3Z"/>
<path d="M500,685 L504,680 L508,686 L512,683 L510,690 L506,692Z"/>
<path d="M820,565 L806,565 L803,580 L803,620 L802,640 L803,657 L806,660 L820,660Z"/>
</g>
<g fill="#5c504c" stroke="#000" stroke-width="1">
<path d="M16,718.7 L23.5,716.2 L31,720 L38.4,721.2 L36,726.2 L31,730 L23.5,726.2 L17.2,722.4Z"/>
</g>
<g shape-rendering="crispEdges">
<path d="M206.5,670 L226.4,668.6 L227.8,683.2 L225.1,693.9 L219.8,703.2 L209.1,709.8 L202.5,719.1 L201.2,729.8 L206.5,736.4 L214.5,740.4 L225.1,743.1 L230.4,751 L235.7,756.4 L222,757 L202.5,736.4 L195.9,729.8 L182.6,719.1 L183.9,716.5 L193.2,701.9 L202.5,689.9 L205.2,676.6Z" fill="#004262"/>
<rect x="214" y="669" width="2" height="1" fill="#000"/>
<rect x="220" y="669" width="6" height="1" fill="#000"/>
<rect x="212" y="670" width="3" height="1" fill="#000"/>
<rect x="220" y="670" width="4" height="1" fill="#000"/>
<rect x="225" y="670" width="2" height="1" fill="#000"/>
<rect x="212" y="671" width="3" height="1" fill="#000"/>
<rect x="222" y="671" width="5" height="1" fill="#000"/>
<rect x="217" y="672" width="1" height="1" fill="#000"/>
<rect x="226" y="672" width="1" height="1" fill="#000"/>
<rect x="206" y="673" width="3" height="1" fill="#000"/>
<rect x="217" y="673" width="2" height="1" fill="#000"/>
<rect x="226" y="673" width="1" height="1" fill="#000"/>
<rect x="206" y="674" width="3" height="1" fill="#000"/>
<rect x="211" y="674" width="3" height="1" fill="#000"/>
<rect x="218" y="674" width="1" height="1" fill="#000"/>
<rect x="226" y="674" width="1" height="1" fill="#000"/>
<rect x="207" y="675" width="1" height="1" fill="#000"/>
<rect x="211" y="675" width="3" height="1" fill="#000"/>
<rect x="218" y="675" width="2" height="1" fill="#000"/>
<rect x="206" y="676" width="2" height="1" fill="#000"/>
<rect x="218" y="676" width="5" height="1" fill="#000"/>
<rect x="205" y="677" width="2" height="1" fill="#000"/>
<rect x="220" y="677" width="3" height="1" fill="#000"/>
<rect x="205" y="678" width="1" height="1" fill="#000"/>
<rect x="214" y="678" width="4" height="1" fill="#000"/>
<rect x="220" y="678" width="3" height="1" fill="#000"/>
<rect x="205" y="679" width="1" height="1" fill="#000"/>
<rect x="215" y="679" width="4" height="1" fill="#000"/>
<rect x="221" y="679" width="1" height="1" fill="#000"/>
<rect x="204" y="680" width="3" height="1" fill="#000"/>
<rect x="210" y="680" width="3" height="1" fill="#000"/>
<rect x="216" y="680" width="3" height="1" fill="#000"/>
<rect x="221" y="680" width="1" height="1" fill="#000"/>
<rect x="227" y="680" width="1" height="1" fill="#000"/>
<rect x="204" y="681" width="3" height="1" fill="#000"/>
<rect x="210" y="681" width="3" height="1" fill="#000"/>
<rect x="216" y="681" width="2" height="1" fill="#000"/>
<rect x="220" y="681" width="2" height="1" fill="#000"/>
<rect x="204" y="682" width="1" height="1" fill="#000"/>
<rect x="208" y="682" width="4" height="1" fill="#000"/>
<rect x="215" y="682" width="11" height="1" fill="#000"/>
<rect x="207" y="683" width="6" height="1" fill="#000"/>
<rect x="217" y="683" width="9" height="1" fill="#000"/>
<rect x="204" y="684" width="10" height="1" fill="#000"/>
<rect x="221" y="684" width="1" height="1" fill="#000"/>
<rect x="204" y="685" width="2" height="1" fill="#000"/>
<rect x="208" y="685" width="7" height="1" fill="#000"/>
<rect x="204" y="686" width="2" height="1" fill="#000"/>
<rect x="208" y="686" width="6" height="1" fill="#000"/>
<rect x="218" y="686" width="2" height="1" fill="#000"/>
<rect x="226" y="686" width="1" height="1" fill="#000"/>
<rect x="205" y="687" width="1" height="1" fill="#000"/>
<rect x="210" y="687" width="3" height="1" fill="#000"/>
<rect x="218" y="687" width="3" height="1" fill="#000"/>
<rect x="225" y="687" width="2" height="1" fill="#000"/>
<rect x="210" y="688" width="4" height="1" fill="#000"/>
<rect x="216" y="688" width="7" height="1" fill="#000"/>
<rect x="203" y="689" width="17" height="1" fill="#000"/>
<rect x="221" y="689" width="3" height="1" fill="#000"/>
<rect x="202" y="690" width="9" height="1" fill="#000"/>
<rect x="212" y="690" width="5" height="1" fill="#000"/>
<rect x="218" y="690" width="1" height="1" fill="#000"/>
<rect x="221" y="690" width="5" height="1" fill="#000"/>
<rect x="201" y="691" width="8" height="1" fill="#000"/>
<rect x="213" y="691" width="13" height="1" fill="#000"/>
<rect x="200" y="692" width="10" height="1" fill="#000"/>
<rect x="214" y="692" width="7" height="1" fill="#000"/>
<rect x="224" y="692" width="1" height="1" fill="#000"/>
<rect x="200" y="693" width="10" height="1" fill="#000"/>
<rect x="214" y="693" width="4" height="1" fill="#000"/>
<rect x="224" y="693" width="1" height="1" fill="#000"/>
<rect x="199" y="694" width="2" height="1" fill="#000"/>
<rect x="202" y="694" width="8" height="1" fill="#000"/>
<rect x="214" y="694" width="4" height="1" fill="#000"/>
<rect x="204" y="695" width="8" height="1" fill="#000"/>
<rect x="213" y="695" width="4" height="1" fill="#000"/>
<rect x="201" y="696" width="1" height="1" fill="#000"/>
<rect x="204" y="696" width="13" height="1" fill="#000"/>
<rect x="222" y="696" width="2" height="1" fill="#000"/>
<rect x="197" y="697" width="5" height="1" fill="#000"/>
<rect x="204" y="697" width="3" height="1" fill="#000"/>
<rect x="210" y="697" width="11" height="1" fill="#000"/>
<rect x="222" y="697" width="1" height="1" fill="#000"/>
<rect x="196" y="698" width="3" height="1" fill="#000"/>
<rect x="204" y="698" width="3" height="1" fill="#000"/>
<rect x="210" y="698" width="10" height="1" fill="#000"/>
<rect x="196" y="699" width="3" height="1" fill="#000"/>
<rect x="203" y="699" width="3" height="1" fill="#000"/>
<rect x="209" y="699" width="6" height="1" fill="#000"/>
<rect x="217" y="699" width="2" height="1" fill="#000"/>
<rect x="221" y="699" width="1" height="1" fill="#000"/>
<rect x="197" y="700" width="2" height="1" fill="#000"/>
<rect x="203" y="700" width="3" height="1" fill="#000"/>
<rect x="208" y="700" width="7" height="1" fill="#000"/>
<rect x="217" y="700" width="2" height="1" fill="#000"/>
<rect x="201" y="701" width="1" height="1" fill="#000"/>
<rect x="204" y="701" width="3" height="1" fill="#000"/>
<rect x="208" y="701" width="7" height="1" fill="#000"/>
<rect x="217" y="701" width="1" height="1" fill="#000"/>
<rect x="204" y="702" width="3" height="1" fill="#000"/>
<rect x="214" y="702" width="4" height="1" fill="#000"/>
<rect x="195" y="703" width="2" height="1" fill="#000"/>
<rect x="204" y="703" width="2" height="1" fill="#000"/>
<rect x="214" y="703" width="4" height="1" fill="#000"/>
<rect x="192" y="704" width="1" height="1" fill="#000"/>
<rect x="194" y="704" width="3" height="1" fill="#000"/>
<rect x="202" y="704" width="1" height="1" fill="#000"/>
<rect x="204" y="704" width="2" height="1" fill="#000"/>
<rect x="214" y="704" width="2" height="1" fill="#000"/>
<rect x="191" y="705" width="5" height="1" fill="#000"/>
<rect x="199" y="705" width="4" height="1" fill="#000"/>
<rect x="205" y="705" width="2" height="1" fill="#000"/>
<rect x="210" y="705" width="1" height="1" fill="#000"/>
<rect x="190" y="706" width="1" height="1" fill="#000"/>
<rect x="193" y="706" width="2" height="1" fill="#000"/>
<rect x="199" y="706" width="4" height="1" fill="#000"/>
<rect x="206" y="706" width="1" height="1" fill="#000"/>
<rect x="209" y="706" width="3" height="1" fill="#000"/>
<rect x="190" y="707" width="1" height="1" fill="#000"/>
<rect x="199" y="707" width="4" height="1" fill="#000"/>
<rect x="209" y="707" width="3" height="1" fill="#000"/>
<rect x="189" y="708" width="2" height="1" fill="#000"/>
<rect x="195" y="708" width="9" height="1" fill="#000"/>
<rect x="209" y="708" width="1" height="1" fill="#000"/>
<rect x="188" y="709" width="6" height="1" fill="#000"/>
<rect x="195" y="709" width="2" height="1" fill="#000"/>
<rect x="199" y="709" width="5" height="1" fill="#000"/>
<rect x="190" y="710" width="4" height="1" fill="#000"/>
<rect x="199" y="710" width="5" height="1" fill="#000"/>
<rect x="191" y="711" width="2" height="1" fill="#000"/>
<rect x="198" y="711" width="3" height="1" fill="#000"/>
<rect x="192" y="712" width="1" height="1" fill="#000"/>
<rect x="197" y="712" width="4" height="1" fill="#000"/>
<rect x="189" y="713" width="2" height="1" fill="#000"/>
<rect x="192" y="713" width="2" height="1" fill="#000"/>
<rect x="196" y="713" width="6" height="1" fill="#000"/>
<rect x="185" y="714" width="2" height="1" fill="#000"/>
<rect x="189" y="714" width="6" height="1" fill="#000"/>
<rect x="200" y="714" width="1" height="1" fill="#000"/>
<rect x="203" y="714" width="2" height="1" fill="#000"/>
<rect x="185" y="715" width="2" height="1" fill="#000"/>
<rect x="189" y="715" width="7" height="1" fill="#000"/>
<rect x="203" y="715" width="2" height="1" fill="#000"/>
<rect x="184" y="716" width="3" height="1" fill="#000"/>
<rect x="189" y="716" width="8" height="1" fill="#000"/>
<rect x="199" y="716" width="3" height="1" fill="#000"/>
<rect x="203" y="716" width="1" height="1" fill="#000"/>
<rect x="192" y="717" width="5" height="1" fill="#000"/>
<rect x="199" y="717" width="3" height="1" fill="#000"/>
<rect x="203" y="717" width="1" height="1" fill="#000"/>
<rect x="192" y="718" width="6" height="1" fill="#000"/>
<rect x="200" y="718" width="1" height="1" fill="#000"/>
<rect x="183" y="719" width="1" height="1" fill="#000"/>
<rect x="195" y="719" width="4" height="1" fill="#000"/>
<rect x="184" y="720" width="1" height="1" fill="#000"/>
<rect x="195" y="720" width="4" height="1" fill="#000"/>
<rect x="188" y="721" width="2" height="1" fill="#000"/>
<rect x="197" y="721" width="3" height="1" fill="#000"/>
<rect x="187" y="722" width="3" height="1" fill="#000"/>
<rect x="197" y="722" width="2" height="1" fill="#000"/>
<rect x="188" y="723" width="3" height="1" fill="#000"/>
<rect x="197" y="723" width="4" height="1" fill="#000"/>
<rect x="189" y="724" width="3" height="1" fill="#000"/>
<rect x="194" y="724" width="5" height="1" fill="#000"/>
<rect x="200" y="724" width="2" height="1" fill="#000"/>
<rect x="191" y="725" width="2" height="1" fill="#000"/>
<rect x="196" y="725" width="3" height="1" fill="#000"/>
<rect x="200" y="725" width="2" height="1" fill="#000"/>
<rect x="192" y="726" width="2" height="1" fill="#000"/>
<rect x="197" y="726" width="5" height="1" fill="#000"/>
<rect x="194" y="727" width="7" height="1" fill="#000"/>
<rect x="194" y="728" width="7" height="1" fill="#000"/>
<rect x="196" y="729" width="1" height="1" fill="#000"/>
<rect x="198" y="729" width="3" height="1" fill="#000"/>
<rect x="197" y="730" width="4" height="1" fill="#000"/>
<rect x="198" y="731" width="4" height="1" fill="#000"/>
<rect x="199" y="732" width="2" height="1" fill="#000"/>
<rect x="200" y="733" width="1" height="1" fill="#000"/>
<rect x="201" y="734" width="1" height="1" fill="#000"/>
<rect x="203" y="734" width="2" height="1" fill="#000"/>
<rect x="204" y="735" width="2" height="1" fill="#000"/>
<rect x="204" y="736" width="3" height="1" fill="#000"/>
<rect x="204" y="737" width="5" height="1" fill="#000"/>
<rect x="204" y="738" width="1" height="1" fill="#000"/>
<rect x="206" y="738" width="4" height="1" fill="#000"/>
<rect x="205" y="739" width="5" height="1" fill="#000"/>
<rect x="211" y="739" width="2" height="1" fill="#000"/>
<rect x="208" y="740" width="2" height="1" fill="#000"/>
<rect x="211" y="740" width="4" height="1" fill="#000"/>
<rect x="208" y="741" width="8" height="1" fill="#000"/>
<rect x="217" y="741" width="2" height="1" fill="#000"/>
<rect x="208" y="742" width="12" height="1" fill="#000"/>
<rect x="222" y="742" width="1" height="1" fill="#000"/>
<rect x="209" y="743" width="12" height="1" fill="#000"/>
<rect x="210" y="744" width="11" height="1" fill="#000"/>
<rect x="211" y="745" width="1" height="1" fill="#000"/>
<rect x="215" y="745" width="6" height="1" fill="#000"/>
<rect x="223" y="745" width="2" height="1" fill="#000"/>
<rect x="217" y="746" width="2" height="1" fill="#000"/>
<rect x="224" y="746" width="1" height="1" fill="#000"/>
<rect x="226" y="746" width="1" height="1" fill="#000"/>
<rect x="214" y="747" width="1" height="1" fill="#000"/>
<rect x="217" y="747" width="5" height="1" fill="#000"/>
<rect x="226" y="747" width="2" height="1" fill="#000"/>
<rect x="214" y="748" width="2" height="1" fill="#000"/>
<rect x="217" y="748" width="5" height="1" fill="#000"/>
<rect x="228" y="748" width="1" height="1" fill="#000"/>
<rect x="215" y="749" width="1" height="1" fill="#000"/>
<rect x="217" y="749" width="4" height="1" fill="#000"/>
<rect x="224" y="749" width="1" height="1" fill="#000"/>
<rect x="228" y="749" width="1" height="1" fill="#000"/>
<rect x="216" y="750" width="5" height="1" fill="#000"/>
<rect x="223" y="750" width="2" height="1" fill="#000"/>
<rect x="219" y="751" width="2" height="1" fill="#000"/>
<rect x="222" y="751" width="4" height="1" fill="#000"/>
<rect x="230" y="751" width="1" height="1" fill="#000"/>
<rect x="222" y="752" width="5" height="1" fill="#000"/>
<rect x="230" y="752" width="2" height="1" fill="#000"/>
<rect x="223" y="753" width="5" height="1" fill="#000"/>
<rect x="231" y="753" width="2" height="1" fill="#000"/>
<rect x="220" y="754" width="6" height="1" fill="#000"/>
<rect x="227" y="754" width="2" height="1" fill="#000"/>
<rect x="221" y="755" width="5" height="1" fill="#000"/>
<rect x="227" y="755" width="2" height="1" fill="#000"/>
<rect x="234" y="755" width="1" height="1" fill="#000"/>
<rect x="222" y="756" width="7" height="1" fill="#000"/>
<rect x="232" y="756" width="1" height="1" fill="#000"/>
<rect x="217" y="671" width="1" height="1" fill="#5c504c"/>
<rect x="218" y="672" width="1" height="1" fill="#5c504c"/>
<rect x="215" y="674" width="3" height="1" fill="#5c504c"/>
<rect x="219" y="674" width="1" height="1" fill="#5c504c"/>
<rect x="214" y="675" width="3" height="1" fill="#5c504c"/>
<rect x="224" y="675" width="3" height="1" fill="#5c504c"/>
<rect x="214" y="676" width="1" height="1" fill="#5c504c"/>
<rect x="216" y="676" width="2" height="1" fill="#5c504c"/>
<rect x="224" y="676" width="3" height="1" fill="#5c504c"/>
<rect x="207" y="677" width="1" height="1" fill="#5c504c"/>
<rect x="210" y="677" width="1" height="1" fill="#5c504c"/>
<rect x="224" y="677" width="3" height="1" fill="#5c504c"/>
<rect x="207" y="678" width="1" height="1" fill="#5c504c"/>
<rect x="224" y="678" width="3" height="1" fill="#5c504c"/>
<rect x="206" y="679" width="2" height="1" fill="#5c504c"/>
<rect x="211" y="679" width="1" height="1" fill="#5c504c"/>
<rect x="224" y="679" width="2" height="1" fill="#5c504c"/>
<rect x="207" y="680" width="1" height="1" fill="#5c504c"/>
<rect x="220" y="680" width="1" height="1" fill="#5c504c"/>
<rect x="225" y="680" width="1" height="1" fill="#5c504c"/>
<rect x="218" y="681" width="1" height="1" fill="#5c504c"/>
<rect x="226" y="682" width="2" height="1" fill="#5c504c"/>
<rect x="206" y="683" width="1" height="1" fill="#5c504c"/>
<rect x="226" y="683" width="2" height="1" fill="#5c504c"/>
<rect x="216" y="685" width="1" height="1" fill="#5c504c"/>
<rect x="216" y="686" width="1" height="1" fill="#5c504c"/>
<rect x="217" y="687" width="1" height="1" fill="#5c504c"/>
<rect x="223" y="687" width="2" height="1" fill="#5c504c"/>
<rect x="223" y="688" width="1" height="1" fill="#5c504c"/>
<rect x="225" y="688" width="1" height="1" fill="#5c504c"/>
<rect x="220" y="689" width="1" height="1" fill="#5c504c"/>
<rect x="225" y="689" width="1" height="1" fill="#5c504c"/>
<rect x="220" y="690" width="1" height="1" fill="#5c504c"/>
<rect x="224" y="694" width="1" height="1" fill="#5c504c"/>
<rect x="197" y="696" width="1" height="1" fill="#5c504c"/>
<rect x="206" y="699" width="1" height="1" fill="#5c504c"/>
<rect x="220" y="699" width="1" height="1" fill="#5c504c"/>
<rect x="196" y="700" width="1" height="1" fill="#5c504c"/>
<rect x="220" y="700" width="1" height="1" fill="#5c504c"/>
<rect x="202" y="701" width="1" height="1" fill="#5c504c"/>
<rect x="220" y="701" width="1" height="1" fill="#5c504c"/>
<rect x="200" y="702" width="1" height="1" fill="#5c504c"/>
<rect x="212" y="702" width="1" height="1" fill="#5c504c"/>
<rect x="199" y="703" width="4" height="1" fill="#5c504c"/>
<rect x="206" y="703" width="1" height="1" fill="#5c504c"/>
<rect x="199" y="704" width="2" height="1" fill="#5c504c"/>
<rect x="206" y="704" width="1" height="1" fill="#5c504c"/>
<rect x="191" y="708" width="1" height="1" fill="#5c504c"/>
<rect x="198" y="709" width="1" height="1" fill="#5c504c"/>
<rect x="188" y="710" width="1" height="1" fill="#5c504c"/>
<rect x="194" y="710" width="1" height="1" fill="#5c504c"/>
<rect x="188" y="711" width="1" height="1" fill="#5c504c"/>
<rect x="194" y="711" width="1" height="1" fill="#5c504c"/>
<rect x="206" y="712" width="1" height="1" fill="#5c504c"/>
<rect x="203" y="713" width="1" height="1" fill="#5c504c"/>
<rect x="187" y="714" width="2" height="1" fill="#5c504c"/>
<rect x="202" y="714" width="1" height="1" fill="#5c504c"/>
<rect x="187" y="715" width="2" height="1" fill="#5c504c"/>
<rect x="202" y="715" width="1" height="1" fill="#5c504c"/>
<rect x="187" y="716" width="2" height="1" fill="#5c504c"/>
<rect x="186" y="717" width="2" height="1" fill="#5c504c"/>
<rect x="186" y="718" width="2" height="1" fill="#5c504c"/>
<rect x="201" y="718" width="2" height="1" fill="#5c504c"/>
<rect x="186" y="719" width="2" height="1" fill="#5c504c"/>
<rect x="186" y="720" width="1" height="1" fill="#5c504c"/>
<rect x="195" y="721" width="2" height="1" fill="#5c504c"/>
<rect x="199" y="722" width="1" height="1" fill="#5c504c"/>
<rect x="203" y="736" width="1" height="1" fill="#5c504c"/>
<rect x="206" y="740" width="1" height="1" fill="#5c504c"/>
<rect x="212" y="745" width="1" height="1" fill="#5c504c"/>
<rect x="223" y="748" width="3" height="1" fill="#5c504c"/>
<rect x="221" y="749" width="3" height="1" fill="#5c504c"/>
<rect x="225" y="749" width="1" height="1" fill="#5c504c"/>
<rect x="225" y="750" width="1" height="1" fill="#5c504c"/>
<rect x="229" y="750" width="1" height="1" fill="#5c504c"/>
<rect x="229" y="753" width="2" height="1" fill="#5c504c"/>
<rect x="229" y="754" width="4" height="1" fill="#5c504c"/>
<rect x="231" y="755" width="2" height="1" fill="#5c504c"/>
<path d="M150.6,713.8 L153.3,711.2 L157.3,716.5 L166.6,724.5 L179.9,732.4 L189.2,740.4 L193.2,745.7 L199.8,756.4 L209,757 L200,748 L185,745 L170,748 L161,757 L114,757 L114,745 L130,742 L145,740 L149.3,721.8Z" fill="#004262"/>
<rect x="150" y="715" width="1" height="1" fill="#000"/>
<rect x="155" y="715" width="2" height="1" fill="#000"/>
<rect x="150" y="716" width="1" height="1" fill="#000"/>
<rect x="155" y="716" width="2" height="1" fill="#000"/>
<rect x="150" y="717" width="2" height="1" fill="#000"/>
<rect x="155" y="717" width="3" height="1" fill="#000"/>
<rect x="150" y="718" width="6" height="1" fill="#000"/>
<rect x="157" y="718" width="3" height="1" fill="#000"/>
<rect x="150" y="719" width="1" height="1" fill="#000"/>
<rect x="152" y="719" width="9" height="1" fill="#000"/>
<rect x="150" y="720" width="2" height="1" fill="#000"/>
<rect x="156" y="720" width="3" height="1" fill="#000"/>
<rect x="160" y="720" width="2" height="1" fill="#000"/>
<rect x="149" y="721" width="3" height="1" fill="#000"/>
<rect x="158" y="721" width="5" height="1" fill="#000"/>
<rect x="150" y="722" width="2" height="1" fill="#000"/>
<rect x="158" y="722" width="5" height="1" fill="#000"/>
<rect x="150" y="723" width="2" height="1" fill="#000"/>
<rect x="157" y="723" width="5" height="1" fill="#000"/>
<rect x="163" y="723" width="2" height="1" fill="#000"/>
<rect x="150" y="724" width="2" height="1" fill="#000"/>
<rect x="155" y="724" width="7" height="1" fill="#000"/>
<rect x="163" y="724" width="4" height="1" fill="#000"/>
<rect x="148" y="725" width="2" height="1" fill="#000"/>
<rect x="156" y="725" width="11" height="1" fill="#000"/>
<rect x="148" y="726" width="2" height="1" fill="#000"/>
<rect x="160" y="726" width="9" height="1" fill="#000"/>
<rect x="148" y="727" width="2" height="1" fill="#000"/>
<rect x="160" y="727" width="9" height="1" fill="#000"/>
<rect x="171" y="727" width="1" height="1" fill="#000"/>
<rect x="148" y="728" width="1" height="1" fill="#000"/>
<rect x="161" y="728" width="1" height="1" fill="#000"/>
<rect x="164" y="728" width="3" height="1" fill="#000"/>
<rect x="169" y="728" width="4" height="1" fill="#000"/>
<rect x="147" y="729" width="3" height="1" fill="#000"/>
<rect x="153" y="729" width="2" height="1" fill="#000"/>
<rect x="158" y="729" width="1" height="1" fill="#000"/>
<rect x="164" y="729" width="3" height="1" fill="#000"/>
<rect x="170" y="729" width="5" height="1" fill="#000"/>
<rect x="147" y="730" width="4" height="1" fill="#000"/>
<rect x="158" y="730" width="3" height="1" fill="#000"/>
<rect x="165" y="730" width="1" height="1" fill="#000"/>
<rect x="170" y="730" width="7" height="1" fill="#000"/>
<rect x="147" y="731" width="1" height="1" fill="#000"/>
<rect x="149" y="731" width="3" height="1" fill="#000"/>
<rect x="157" y="731" width="6" height="1" fill="#000"/>
<rect x="166" y="731" width="1" height="1" fill="#000"/>
<rect x="170" y="731" width="8" height="1" fill="#000"/>
<rect x="151" y="732" width="1" height="1" fill="#000"/>
<rect x="166" y="732" width="2" height="1" fill="#000"/>
<rect x="171" y="732" width="9" height="1" fill="#000"/>
<rect x="156" y="733" width="1" height="1" fill="#000"/>
<rect x="172" y="733" width="9" height="1" fill="#000"/>
<rect x="156" y="734" width="2" height="1" fill="#000"/>
<rect x="161" y="734" width="4" height="1" fill="#000"/>
<rect x="173" y="734" width="1" height="1" fill="#000"/>
<rect x="178" y="734" width="4" height="1" fill="#000"/>
<rect x="148" y="735" width="1" height="1" fill="#000"/>
<rect x="151" y="735" width="7" height="1" fill="#000"/>
<rect x="161" y="735" width="4" height="1" fill="#000"/>
<rect x="178" y="735" width="3" height="1" fill="#000"/>
<rect x="151" y="736" width="7" height="1" fill="#000"/>
<rect x="161" y="736" width="1" height="1" fill="#000"/>
<rect x="170" y="736" width="1" height="1" fill="#000"/>
<rect x="175" y="736" width="5" height="1" fill="#000"/>
<rect x="146" y="737" width="1" height="1" fill="#000"/>
<rect x="150" y="737" width="3" height="1" fill="#000"/>
<rect x="160" y="737" width="2" height="1" fill="#000"/>
<rect x="170" y="737" width="3" height="1" fill="#000"/>
<rect x="175" y="737" width="5" height="1" fill="#000"/>
<rect x="146" y="738" width="1" height="1" fill="#000"/>
<rect x="150" y="738" width="3" height="1" fill="#000"/>
<rect x="160" y="738" width="4" height="1" fill="#000"/>
<rect x="168" y="738" width="6" height="1" fill="#000"/>
<rect x="176" y="738" width="1" height="1" fill="#000"/>
<rect x="180" y="738" width="3" height="1" fill="#000"/>
<rect x="150" y="739" width="4" height="1" fill="#000"/>
<rect x="159" y="739" width="6" height="1" fill="#000"/>
<rect x="167" y="739" width="7" height="1" fill="#000"/>
<rect x="141" y="740" width="1" height="1" fill="#000"/>
<rect x="149" y="740" width="5" height="1" fill="#000"/>
<rect x="157" y="740" width="11" height="1" fill="#000"/>
<rect x="169" y="740" width="2" height="1" fill="#000"/>
<rect x="172" y="740" width="4" height="1" fill="#000"/>
<rect x="182" y="740" width="1" height="1" fill="#000"/>
<rect x="136" y="741" width="8" height="1" fill="#000"/>
<rect x="151" y="741" width="3" height="1" fill="#000"/>
<rect x="157" y="741" width="9" height="1" fill="#000"/>
<rect x="172" y="741" width="6" height="1" fill="#000"/>
<rect x="182" y="741" width="3" height="1" fill="#000"/>
<rect x="189" y="741" width="1" height="1" fill="#000"/>
<rect x="127" y="742" width="6" height="1" fill="#000"/>
<rect x="137" y="742" width="11" height="1" fill="#000"/>
<rect x="152" y="742" width="1" height="1" fill="#000"/>
<rect x="157" y="742" width="8" height="1" fill="#000"/>
<rect x="171" y="742" width="8" height="1" fill="#000"/>
<rect x="181" y="742" width="5" height="1" fill="#000"/>
<rect x="189" y="742" width="2" height="1" fill="#000"/>
<rect x="130" y="743" width="2" height="1" fill="#000"/>
<rect x="137" y="743" width="11" height="1" fill="#000"/>
<rect x="151" y="743" width="3" height="1" fill="#000"/>
<rect x="157" y="743" width="2" height="1" fill="#000"/>
<rect x="161" y="743" width="5" height="1" fill="#000"/>
<rect x="170" y="743" width="5" height="1" fill="#000"/>
<rect x="179" y="743" width="5" height="1" fill="#000"/>
<rect x="190" y="743" width="1" height="1" fill="#000"/>
<rect x="117" y="744" width="3" height="1" fill="#000"/>
<rect x="124" y="744" width="2" height="1" fill="#000"/>
<rect x="130" y="744" width="2" height="1" fill="#000"/>
<rect x="135" y="744" width="1" height="1" fill="#000"/>
<rect x="140" y="744" width="2" height="1" fill="#000"/>
<rect x="144" y="744" width="4" height="1" fill="#000"/>
<rect x="156" y="744" width="2" height="1" fill="#000"/>
<rect x="161" y="744" width="6" height="1" fill="#000"/>
<rect x="170" y="744" width="5" height="1" fill="#000"/>
<rect x="180" y="744" width="4" height="1" fill="#000"/>
<rect x="189" y="744" width="1" height="1" fill="#000"/>
<rect x="116" y="745" width="4" height="1" fill="#000"/>
<rect x="124" y="745" width="3" height="1" fill="#000"/>
<rect x="140" y="745" width="2" height="1" fill="#000"/>
<rect x="147" y="745" width="1" height="1" fill="#000"/>
<rect x="153" y="745" width="5" height="1" fill="#000"/>
<rect x="162" y="745" width="5" height="1" fill="#000"/>
<rect x="174" y="745" width="1" height="1" fill="#000"/>
<rect x="189" y="745" width="2" height="1" fill="#000"/>
<rect x="117" y="746" width="1" height="1" fill="#000"/>
<rect x="124" y="746" width="3" height="1" fill="#000"/>
<rect x="130" y="746" width="2" height="1" fill="#000"/>
<rect x="143" y="746" width="3" height="1" fill="#000"/>
<rect x="154" y="746" width="4" height="1" fill="#000"/>
<rect x="159" y="746" width="1" height="1" fill="#000"/>
<rect x="162" y="746" width="4" height="1" fill="#000"/>
<rect x="169" y="746" width="1" height="1" fill="#000"/>
<rect x="174" y="746" width="3" height="1" fill="#000"/>
<rect x="118" y="747" width="1" height="1" fill="#000"/>
<rect x="128" y="747" width="5" height="1" fill="#000"/>
<rect x="135" y="747" width="5" height="1" fill="#000"/>
<rect x="142" y="747" width="4" height="1" fill="#000"/>
<rect x="149" y="747" width="1" height="1" fill="#000"/>
<rect x="155" y="747" width="1" height="1" fill="#000"/>
<rect x="158" y="747" width="2" height="1" fill="#000"/>
<rect x="162" y="747" width="5" height="1" fill="#000"/>
<rect x="169" y="747" width="3" height="1" fill="#000"/>
<rect x="196" y="747" width="1" height="1" fill="#000"/>
<rect x="115" y="748" width="1" height="1" fill="#000"/>
<rect x="118" y="748" width="2" height="1" fill="#000"/>
<rect x="128" y="748" width="4" height="1" fill="#000"/>
<rect x="135" y="748" width="5" height="1" fill="#000"/>
<rect x="142" y="748" width="4" height="1" fill="#000"/>
<rect x="149" y="748" width="1" height="1" fill="#000"/>
<rect x="155" y="748" width="1" height="1" fill="#000"/>
<rect x="159" y="748" width="1" height="1" fill="#000"/>
<rect x="161" y="748" width="6" height="1" fill="#000"/>
<rect x="196" y="748" width="4" height="1" fill="#000"/>
<rect x="114" y="749" width="1" height="1" fill="#000"/>
<rect x="118" y="749" width="2" height="1" fill="#000"/>
<rect x="123" y="749" width="1" height="1" fill="#000"/>
<rect x="128" y="749" width="4" height="1" fill="#000"/>
<rect x="136" y="749" width="8" height="1" fill="#000"/>
<rect x="148" y="749" width="3" height="1" fill="#000"/>
<rect x="155" y="749" width="1" height="1" fill="#000"/>
<rect x="159" y="749" width="4" height="1" fill="#000"/>
<rect x="164" y="749" width="4" height="1" fill="#000"/>
<rect x="196" y="749" width="5" height="1" fill="#000"/>
<rect x="114" y="750" width="1" height="1" fill="#000"/>
<rect x="118" y="750" width="3" height="1" fill="#000"/>
<rect x="122" y="750" width="3" height="1" fill="#000"/>
<rect x="128" y="750" width="4" height="1" fill="#000"/>
<rect x="138" y="750" width="6" height="1" fill="#000"/>
<rect x="148" y="750" width="2" height="1" fill="#000"/>
<rect x="155" y="750" width="2" height="1" fill="#000"/>
<rect x="158" y="750" width="3" height="1" fill="#000"/>
<rect x="164" y="750" width="3" height="1" fill="#000"/>
<rect x="196" y="750" width="6" height="1" fill="#000"/>
<rect x="114" y="751" width="1" height="1" fill="#000"/>
<rect x="119" y="751" width="6" height="1" fill="#000"/>
<rect x="127" y="751" width="7" height="1" fill="#000"/>
<rect x="138" y="751" width="4" height="1" fill="#000"/>
<rect x="152" y="751" width="9" height="1" fill="#000"/>
<rect x="164" y="751" width="2" height="1" fill="#000"/>
<rect x="197" y="751" width="6" height="1" fill="#000"/>
<rect x="114" y="752" width="1" height="1" fill="#000"/>
<rect x="121" y="752" width="4" height="1" fill="#000"/>
<rect x="128" y="752" width="7" height="1" fill="#000"/>
<rect x="139" y="752" width="3" height="1" fill="#000"/>
<rect x="153" y="752" width="7" height="1" fill="#000"/>
<rect x="161" y="752" width="4" height="1" fill="#000"/>
<rect x="197" y="752" width="7" height="1" fill="#000"/>
<rect x="114" y="753" width="2" height="1" fill="#000"/>
<rect x="122" y="753" width="4" height="1" fill="#000"/>
<rect x="127" y="753" width="3" height="1" fill="#000"/>
<rect x="132" y="753" width="6" height="1" fill="#000"/>
<rect x="140" y="753" width="8" height="1" fill="#000"/>
<rect x="154" y="753" width="4" height="1" fill="#000"/>
<rect x="161" y="753" width="3" height="1" fill="#000"/>
<rect x="198" y="753" width="5" height="1" fill="#000"/>
<rect x="121" y="754" width="3" height="1" fill="#000"/>
<rect x="126" y="754" width="4" height="1" fill="#000"/>
<rect x="133" y="754" width="2" height="1" fill="#000"/>
<rect x="141" y="754" width="9" height="1" fill="#000"/>
<rect x="155" y="754" width="1" height="1" fill="#000"/>
<rect x="160" y="754" width="3" height="1" fill="#000"/>
<rect x="199" y="754" width="3" height="1" fill="#000"/>
<rect x="121" y="755" width="2" height="1" fill="#000"/>
<rect x="129" y="755" width="1" height="1" fill="#000"/>
<rect x="133" y="755" width="2" height="1" fill="#000"/>
<rect x="144" y="755" width="7" height="1" fill="#000"/>
<rect x="155" y="755" width="1" height="1" fill="#000"/>
<rect x="160" y="755" width="1" height="1" fill="#000"/>
<rect x="200" y="755" width="4" height="1" fill="#000"/>
<rect x="114" y="756" width="2" height="1" fill="#000"/>
<rect x="121" y="756" width="2" height="1" fill="#000"/>
<rect x="128" y="756" width="3" height="1" fill="#000"/>
<rect x="145" y="756" width="7" height="1" fill="#000"/>
<rect x="155" y="756" width="1" height="1" fill="#000"/>
<rect x="201" y="756" width="4" height="1" fill="#000"/>
<rect x="207" y="756" width="1" height="1" fill="#000"/>
<rect x="153" y="716" width="1" height="1" fill="#5c504c"/>
<rect x="152" y="717" width="2" height="1" fill="#5c504c"/>
<rect x="154" y="722" width="1" height="1" fill="#5c504c"/>
<rect x="162" y="723" width="1" height="1" fill="#5c504c"/>
<rect x="153" y="725" width="1" height="1" fill="#5c504c"/>
<rect x="155" y="725" width="1" height="1" fill="#5c504c"/>
<rect x="152" y="726" width="7" height="1" fill="#5c504c"/>
<rect x="153" y="727" width="5" height="1" fill="#5c504c"/>
<rect x="148" y="731" width="1" height="1" fill="#5c504c"/>
<rect x="156" y="731" width="1" height="1" fill="#5c504c"/>
<rect x="165" y="731" width="1" height="1" fill="#5c504c"/>
<rect x="156" y="732" width="1" height="1" fill="#5c504c"/>
<rect x="165" y="733" width="1" height="1" fill="#5c504c"/>
<rect x="165" y="734" width="1" height="1" fill="#5c504c"/>
<rect x="165" y="735" width="2" height="1" fill="#5c504c"/>
<rect x="147" y="736" width="1" height="1" fill="#5c504c"/>
<rect x="165" y="736" width="2" height="1" fill="#5c504c"/>
<rect x="168" y="737" width="1" height="1" fill="#5c504c"/>
<rect x="184" y="737" width="1" height="1" fill="#5c504c"/>
<rect x="175" y="739" width="2" height="1" fill="#5c504c"/>
<rect x="187" y="740" width="2" height="1" fill="#5c504c"/>
<rect x="185" y="741" width="4" height="1" fill="#5c504c"/>
<rect x="186" y="742" width="3" height="1" fill="#5c504c"/>
<rect x="123" y="743" width="3" height="1" fill="#5c504c"/>
<rect x="135" y="743" width="2" height="1" fill="#5c504c"/>
<rect x="175" y="743" width="1" height="1" fill="#5c504c"/>
<rect x="134" y="744" width="1" height="1" fill="#5c504c"/>
<rect x="136" y="744" width="1" height="1" fill="#5c504c"/>
<rect x="175" y="744" width="1" height="1" fill="#5c504c"/>
<rect x="187" y="744" width="2" height="1" fill="#5c504c"/>
<rect x="188" y="745" width="1" height="1" fill="#5c504c"/>
<rect x="114" y="746" width="2" height="1" fill="#5c504c"/>
<rect x="160" y="746" width="1" height="1" fill="#5c504c"/>
<rect x="115" y="747" width="1" height="1" fill="#5c504c"/>
<rect x="127" y="747" width="1" height="1" fill="#5c504c"/>
<rect x="141" y="747" width="1" height="1" fill="#5c504c"/>
<rect x="121" y="748" width="3" height="1" fill="#5c504c"/>
<rect x="127" y="748" width="1" height="1" fill="#5c504c"/>
<rect x="140" y="748" width="2" height="1" fill="#5c504c"/>
<rect x="122" y="749" width="1" height="1" fill="#5c504c"/>
<rect x="125" y="752" width="1" height="1" fill="#5c504c"/>
<rect x="149" y="752" width="1" height="1" fill="#5c504c"/>
<rect x="126" y="753" width="1" height="1" fill="#5c504c"/>
<rect x="149" y="753" width="2" height="1" fill="#5c504c"/>
<rect x="119" y="754" width="1" height="1" fill="#5c504c"/>
<rect x="125" y="754" width="1" height="1" fill="#5c504c"/>
<rect x="150" y="754" width="1" height="1" fill="#5c504c"/>
<rect x="132" y="755" width="1" height="1" fill="#5c504c"/>
<rect x="161" y="755" width="1" height="1" fill="#5c504c"/>
<path d="M83,744 L92,740 L106,742 L106,757 L93,757.4 L85.9,754.9Z" fill="#004262"/>
<rect x="91" y="740" width="1" height="1" fill="#000"/>
<rect x="94" y="740" width="1" height="1" fill="#000"/>
<rect x="89" y="741" width="4" height="1" fill="#000"/>
<rect x="96" y="741" width="6" height="1" fill="#000"/>
<rect x="88" y="742" width="4" height="1" fill="#000"/>
<rect x="94" y="742" width="1" height="1" fill="#000"/>
<rect x="98" y="742" width="8" height="1" fill="#000"/>
<rect x="84" y="743" width="3" height="1" fill="#000"/>
<rect x="89" y="743" width="2" height="1" fill="#000"/>
<rect x="94" y="743" width="1" height="1" fill="#000"/>
<rect x="99" y="743" width="3" height="1" fill="#000"/>
<rect x="104" y="743" width="2" height="1" fill="#000"/>
<rect x="83" y="744" width="3" height="1" fill="#000"/>
<rect x="99" y="744" width="7" height="1" fill="#000"/>
<rect x="83" y="745" width="2" height="1" fill="#000"/>
<rect x="95" y="745" width="11" height="1" fill="#000"/>
<rect x="84" y="746" width="1" height="1" fill="#000"/>
<rect x="96" y="746" width="8" height="1" fill="#000"/>
<rect x="105" y="746" width="1" height="1" fill="#000"/>
<rect x="84" y="747" width="1" height="1" fill="#000"/>
<rect x="89" y="747" width="1" height="1" fill="#000"/>
<rect x="97" y="747" width="5" height="1" fill="#000"/>
<rect x="84" y="748" width="1" height="1" fill="#000"/>
<rect x="88" y="748" width="2" height="1" fill="#000"/>
<rect x="93" y="748" width="1" height="1" fill="#000"/>
<rect x="98" y="748" width="1" height="1" fill="#000"/>
<rect x="101" y="748" width="1" height="1" fill="#000"/>
<rect x="84" y="749" width="2" height="1" fill="#000"/>
<rect x="93" y="749" width="2" height="1" fill="#000"/>
<rect x="96" y="749" width="1" height="1" fill="#000"/>
<rect x="101" y="749" width="2" height="1" fill="#000"/>
<rect x="85" y="750" width="3" height="1" fill="#000"/>
<rect x="91" y="750" width="1" height="1" fill="#000"/>
<rect x="94" y="750" width="3" height="1" fill="#000"/>
<rect x="101" y="750" width="4" height="1" fill="#000"/>
<rect x="85" y="751" width="4" height="1" fill="#000"/>
<rect x="91" y="751" width="1" height="1" fill="#000"/>
<rect x="94" y="751" width="3" height="1" fill="#000"/>
<rect x="102" y="751" width="3" height="1" fill="#000"/>
<rect x="85" y="752" width="1" height="1" fill="#000"/>
<rect x="87" y="752" width="2" height="1" fill="#000"/>
<rect x="90" y="752" width="1" height="1" fill="#000"/>
<rect x="94" y="752" width="4" height="1" fill="#000"/>
<rect x="103" y="752" width="2" height="1" fill="#000"/>
<rect x="94" y="753" width="3" height="1" fill="#000"/>
<rect x="102" y="753" width="1" height="1" fill="#000"/>
<rect x="86" y="754" width="1" height="1" fill="#000"/>
<rect x="94" y="754" width="2" height="1" fill="#000"/>
<rect x="100" y="754" width="3" height="1" fill="#000"/>
<rect x="90" y="755" width="2" height="1" fill="#000"/>
<rect x="94" y="755" width="2" height="1" fill="#000"/>
<rect x="100" y="755" width="3" height="1" fill="#000"/>
<rect x="90" y="756" width="2" height="1" fill="#000"/>
<rect x="94" y="756" width="2" height="1" fill="#000"/>
<rect x="99" y="756" width="3" height="1" fill="#000"/>
<rect x="92" y="740" width="2" height="1" fill="#5c504c"/>
<rect x="93" y="741" width="1" height="1" fill="#5c504c"/>
<rect x="92" y="742" width="2" height="1" fill="#5c504c"/>
<rect x="96" y="744" width="2" height="1" fill="#5c504c"/>
<rect x="91" y="745" width="2" height="1" fill="#5c504c"/>
<rect x="91" y="746" width="1" height="1" fill="#5c504c"/>
<rect x="97" y="751" width="3" height="1" fill="#5c504c"/>
<rect x="101" y="751" width="1" height="1" fill="#5c504c"/>
<rect x="98" y="752" width="1" height="1" fill="#5c504c"/>
<rect x="98" y="753" width="1" height="1" fill="#5c504c"/>
<rect x="103" y="753" width="2" height="1" fill="#5c504c"/>
<rect x="98" y="754" width="1" height="1" fill="#5c504c"/>
<rect x="104" y="754" width="1" height="1" fill="#5c504c"/>
<rect x="92" y="755" width="1" height="1" fill="#5c504c"/>
<rect x="98" y="755" width="2" height="1" fill="#5c504c"/>
<rect x="92" y="756" width="1" height="1" fill="#5c504c"/>
<path d="M800,558 L806,552 L806,662 L798,662 L792,650 L790,630 L793,600 L796,575Z" fill="#004262"/>
<rect x="805" y="553" width="1" height="1" fill="#000"/>
<rect x="804" y="554" width="2" height="1" fill="#000"/>
<rect x="804" y="557" width="1" height="1" fill="#000"/>
<rect x="803" y="558" width="3" height="1" fill="#000"/>
<rect x="801" y="559" width="4" height="1" fill="#000"/>
<rect x="801" y="560" width="3" height="1" fill="#000"/>
<rect x="801" y="561" width="3" height="1" fill="#000"/>
<rect x="801" y="562" width="1" height="1" fill="#000"/>
<rect x="799" y="569" width="2" height="1" fill="#000"/>
<rect x="800" y="570" width="1" height="1" fill="#000"/>
<rect x="801" y="572" width="1" height="1" fill="#000"/>
<rect x="801" y="573" width="1" height="1" fill="#000"/>
<rect x="801" y="574" width="2" height="1" fill="#000"/>
<rect x="800" y="575" width="4" height="1" fill="#000"/>
<rect x="800" y="576" width="5" height="1" fill="#000"/>
<rect x="801" y="577" width="2" height="1" fill="#000"/>
<rect x="795" y="579" width="1" height="1" fill="#000"/>
<rect x="795" y="580" width="1" height="1" fill="#000"/>
<rect x="797" y="581" width="2" height="1" fill="#000"/>
<rect x="797" y="582" width="3" height="1" fill="#000"/>
<rect x="798" y="583" width="1" height="1" fill="#000"/>
<rect x="803" y="583" width="1" height="1" fill="#000"/>
<rect x="795" y="584" width="2" height="1" fill="#000"/>
<rect x="795" y="585" width="2" height="1" fill="#000"/>
<rect x="801" y="585" width="2" height="1" fill="#000"/>
<rect x="795" y="586" width="5" height="1" fill="#000"/>
<rect x="801" y="586" width="3" height="1" fill="#000"/>
<rect x="795" y="587" width="5" height="1" fill="#000"/>
<rect x="801" y="587" width="4" height="1" fill="#000"/>
<rect x="795" y="588" width="2" height="1" fill="#000"/>
<rect x="798" y="588" width="8" height="1" fill="#000"/>
<rect x="795" y="589" width="2" height="1" fill="#000"/>
<rect x="798" y="589" width="5" height="1" fill="#000"/>
<rect x="804" y="589" width="2" height="1" fill="#000"/>
<rect x="794" y="590" width="8" height="1" fill="#000"/>
<rect x="805" y="590" width="1" height="1" fill="#000"/>
<rect x="794" y="591" width="4" height="1" fill="#000"/>
<rect x="799" y="591" width="3" height="1" fill="#000"/>
<rect x="794" y="592" width="1" height="1" fill="#000"/>
<rect x="799" y="592" width="3" height="1" fill="#000"/>
<rect x="794" y="593" width="1" height="1" fill="#000"/>
<rect x="799" y="593" width="3" height="1" fill="#000"/>
<rect x="803" y="595" width="1" height="1" fill="#000"/>
<rect x="793" y="597" width="1" height="1" fill="#000"/>
<rect x="798" y="597" width="2" height="1" fill="#000"/>
<rect x="793" y="598" width="1" height="1" fill="#000"/>
<rect x="797" y="598" width="4" height="1" fill="#000"/>
<rect x="793" y="599" width="2" height="1" fill="#000"/>
<rect x="798" y="599" width="2" height="1" fill="#000"/>
<rect x="793" y="600" width="1" height="1" fill="#000"/>
<rect x="797" y="600" width="2" height="1" fill="#000"/>
<rect x="797" y="601" width="2" height="1" fill="#000"/>
<rect x="802" y="601" width="2" height="1" fill="#000"/>
<rect x="802" y="602" width="3" height="1" fill="#000"/>
<rect x="802" y="603" width="4" height="1" fill="#000"/>
<rect x="802" y="604" width="4" height="1" fill="#000"/>
<rect x="793" y="605" width="1" height="1" fill="#000"/>
<rect x="801" y="605" width="4" height="1" fill="#000"/>
<rect x="792" y="606" width="3" height="1" fill="#000"/>
<rect x="797" y="606" width="2" height="1" fill="#000"/>
<rect x="802" y="606" width="2" height="1" fill="#000"/>
<rect x="792" y="607" width="3" height="1" fill="#000"/>
<rect x="797" y="607" width="1" height="1" fill="#000"/>
<rect x="792" y="608" width="3" height="1" fill="#000"/>
<rect x="796" y="609" width="1" height="1" fill="#000"/>
<rect x="802" y="609" width="2" height="1" fill="#000"/>
<rect x="796" y="610" width="2" height="1" fill="#000"/>
<rect x="801" y="610" width="3" height="1" fill="#000"/>
<rect x="802" y="611" width="3" height="1" fill="#000"/>
<rect x="792" y="612" width="2" height="1" fill="#000"/>
<rect x="802" y="612" width="3" height="1" fill="#000"/>
<rect x="792" y="613" width="2" height="1" fill="#000"/>
<rect x="796" y="617" width="7" height="1" fill="#000"/>
<rect x="792" y="618" width="12" height="1" fill="#000"/>
<rect x="791" y="619" width="10" height="1" fill="#000"/>
<rect x="803" y="619" width="2" height="1" fill="#000"/>
<rect x="791" y="620" width="4" height="1" fill="#000"/>
<rect x="797" y="620" width="5" height="1" fill="#000"/>
<rect x="791" y="621" width="4" height="1" fill="#000"/>
<rect x="796" y="621" width="6" height="1" fill="#000"/>
<rect x="797" y="622" width="3" height="1" fill="#000"/>
<rect x="797" y="623" width="2" height="1" fill="#000"/>
<rect x="794" y="624" width="1" height="1" fill="#000"/>
<rect x="803" y="624" width="1" height="1" fill="#000"/>
<rect x="790" y="625" width="1" height="1" fill="#000"/>
<rect x="794" y="625" width="2" height="1" fill="#000"/>
<rect x="802" y="625" width="4" height="1" fill="#000"/>
<rect x="790" y="626" width="1" height="1" fill="#000"/>
<rect x="795" y="626" width="1" height="1" fill="#000"/>
<rect x="797" y="626" width="2" height="1" fill="#000"/>
<rect x="801" y="626" width="5" height="1" fill="#000"/>
<rect x="792" y="627" width="1" height="1" fill="#000"/>
<rect x="797" y="627" width="2" height="1" fill="#000"/>
<rect x="801" y="627" width="5" height="1" fill="#000"/>
<rect x="792" y="628" width="1" height="1" fill="#000"/>
<rect x="801" y="628" width="2" height="1" fill="#000"/>
<rect x="804" y="628" width="2" height="1" fill="#000"/>
<rect x="792" y="629" width="1" height="1" fill="#000"/>
<rect x="801" y="629" width="2" height="1" fill="#000"/>
<rect x="805" y="629" width="1" height="1" fill="#000"/>
<rect x="794" y="630" width="2" height="1" fill="#000"/>
<rect x="800" y="630" width="2" height="1" fill="#000"/>
<rect x="790" y="631" width="3" height="1" fill="#000"/>
<rect x="794" y="631" width="2" height="1" fill="#000"/>
<rect x="790" y="632" width="3" height="1" fill="#000"/>
<rect x="804" y="632" width="1" height="1" fill="#000"/>
<rect x="798" y="633" width="1" height="1" fill="#000"/>
<rect x="804" y="633" width="1" height="1" fill="#000"/>
<rect x="804" y="635" width="1" height="1" fill="#000"/>
<rect x="791" y="636" width="2" height="1" fill="#000"/>
<rect x="804" y="636" width="2" height="1" fill="#000"/>
<rect x="791" y="637" width="2" height="1" fill="#000"/>
<rect x="791" y="638" width="1" height="1" fill="#000"/>
<rect x="796" y="639" width="3" height="1" fill="#000"/>
<rect x="791" y="640" width="1" height="1" fill="#000"/>
<rect x="796" y="640" width="4" height="1" fill="#000"/>
<rect x="803" y="640" width="3" height="1" fill="#000"/>
<rect x="796" y="641" width="10" height="1" fill="#000"/>
<rect x="796" y="642" width="7" height="1" fill="#000"/>
<rect x="792" y="643" width="1" height="1" fill="#000"/>
<rect x="796" y="643" width="7" height="1" fill="#000"/>
<rect x="792" y="644" width="1" height="1" fill="#000"/>
<rect x="796" y="644" width="3" height="1" fill="#000"/>
<rect x="800" y="644" width="3" height="1" fill="#000"/>
<rect x="792" y="645" width="1" height="1" fill="#000"/>
<rect x="797" y="645" width="1" height="1" fill="#000"/>
<rect x="801" y="645" width="2" height="1" fill="#000"/>
<rect x="792" y="646" width="4" height="1" fill="#000"/>
<rect x="801" y="646" width="3" height="1" fill="#000"/>
<rect x="794" y="647" width="3" height="1" fill="#000"/>
<rect x="802" y="647" width="1" height="1" fill="#000"/>
<rect x="794" y="648" width="6" height="1" fill="#000"/>
<rect x="794" y="649" width="7" height="1" fill="#000"/>
<rect x="795" y="650" width="3" height="1" fill="#000"/>
<rect x="800" y="650" width="2" height="1" fill="#000"/>
<rect x="795" y="651" width="3" height="1" fill="#000"/>
<rect x="800" y="651" width="5" height="1" fill="#000"/>
<rect x="796" y="652" width="9" height="1" fill="#000"/>
<rect x="797" y="653" width="7" height="1" fill="#000"/>
<rect x="800" y="654" width="4" height="1" fill="#000"/>
<rect x="801" y="655" width="4" height="1" fill="#000"/>
<rect x="797" y="656" width="3" height="1" fill="#000"/>
<rect x="801" y="656" width="3" height="1" fill="#000"/>
<rect x="799" y="657" width="4" height="1" fill="#000"/>
<rect x="800" y="658" width="2" height="1" fill="#000"/>
<rect x="804" y="555" width="2" height="1" fill="#5c504c"/>
<rect x="805" y="562" width="1" height="1" fill="#5c504c"/>
<rect x="805" y="563" width="1" height="1" fill="#5c504c"/>
<rect x="805" y="564" width="1" height="1" fill="#5c504c"/>
<rect x="800" y="566" width="1" height="1" fill="#5c504c"/>
<rect x="800" y="567" width="2" height="1" fill="#5c504c"/>
<rect x="801" y="568" width="2" height="1" fill="#5c504c"/>
<rect x="805" y="570" width="1" height="1" fill="#5c504c"/>
<rect x="805" y="571" width="1" height="1" fill="#5c504c"/>
<rect x="805" y="572" width="1" height="1" fill="#5c504c"/>
<rect x="796" y="575" width="1" height="1" fill="#5c504c"/>
<rect x="799" y="580" width="1" height="1" fill="#5c504c"/>
<rect x="805" y="580" width="1" height="1" fill="#5c504c"/>
<rect x="799" y="581" width="2" height="1" fill="#5c504c"/>
<rect x="804" y="581" width="2" height="1" fill="#5c504c"/>
<rect x="803" y="582" width="3" height="1" fill="#5c504c"/>
<rect x="804" y="583" width="2" height="1" fill="#5c504c"/>
<rect x="803" y="584" width="2" height="1" fill="#5c504c"/>
<rect x="804" y="585" width="1" height="1" fill="#5c504c"/>
<rect x="802" y="590" width="2" height="1" fill="#5c504c"/>
<rect x="802" y="591" width="2" height="1" fill="#5c504c"/>
<rect x="795" y="593" width="2" height="1" fill="#5c504c"/>
<rect x="802" y="593" width="1" height="1" fill="#5c504c"/>
<rect x="801" y="594" width="3" height="1" fill="#5c504c"/>
<rect x="800" y="595" width="2" height="1" fill="#5c504c"/>
<rect x="804" y="595" width="2" height="1" fill="#5c504c"/>
<rect x="794" y="596" width="1" height="1" fill="#5c504c"/>
<rect x="799" y="596" width="2" height="1" fill="#5c504c"/>
<rect x="803" y="596" width="3" height="1" fill="#5c504c"/>
<rect x="794" y="597" width="1" height="1" fill="#5c504c"/>
<rect x="805" y="597" width="1" height="1" fill="#5c504c"/>
<rect x="792" y="605" width="1" height="1" fill="#5c504c"/>
<rect x="799" y="606" width="2" height="1" fill="#5c504c"/>
<rect x="801" y="607" width="2" height="1" fill="#5c504c"/>
<rect x="796" y="608" width="1" height="1" fill="#5c504c"/>
<rect x="802" y="608" width="1" height="1" fill="#5c504c"/>
<rect x="795" y="609" width="1" height="1" fill="#5c504c"/>
<rect x="805" y="610" width="1" height="1" fill="#5c504c"/>
<rect x="794" y="615" width="1" height="1" fill="#5c504c"/>
<rect x="799" y="615" width="2" height="1" fill="#5c504c"/>
<rect x="796" y="616" width="2" height="1" fill="#5c504c"/>
<rect x="799" y="616" width="4" height="1" fill="#5c504c"/>
<rect x="803" y="620" width="3" height="1" fill="#5c504c"/>
<rect x="804" y="621" width="2" height="1" fill="#5c504c"/>
<rect x="805" y="622" width="1" height="1" fill="#5c504c"/>
<rect x="791" y="625" width="1" height="1" fill="#5c504c"/>
<rect x="794" y="628" width="1" height="1" fill="#5c504c"/>
<rect x="803" y="628" width="1" height="1" fill="#5c504c"/>
<rect x="794" y="629" width="1" height="1" fill="#5c504c"/>
<rect x="803" y="629" width="1" height="1" fill="#5c504c"/>
<rect x="793" y="630" width="1" height="1" fill="#5c504c"/>
<rect x="803" y="630" width="1" height="1" fill="#5c504c"/>
<rect x="793" y="631" width="1" height="1" fill="#5c504c"/>
<rect x="798" y="631" width="2" height="1" fill="#5c504c"/>
<rect x="794" y="632" width="2" height="1" fill="#5c504c"/>
<rect x="798" y="632" width="1" height="1" fill="#5c504c"/>
<rect x="794" y="633" width="2" height="1" fill="#5c504c"/>
<rect x="797" y="633" width="1" height="1" fill="#5c504c"/>
<rect x="795" y="634" width="2" height="1" fill="#5c504c"/>
<rect x="795" y="635" width="2" height="1" fill="#5c504c"/>
<rect x="796" y="636" width="2" height="1" fill="#5c504c"/>
<rect x="803" y="637" width="1" height="1" fill="#5c504c"/>
<rect x="803" y="638" width="2" height="1" fill="#5c504c"/>
<rect x="804" y="639" width="2" height="1" fill="#5c504c"/>
<rect x="793" y="643" width="3" height="1" fill="#5c504c"/>
<rect x="793" y="644" width="1" height="1" fill="#5c504c"/>
<rect x="792" y="649" width="2" height="1" fill="#5c504c"/>
<rect x="792" y="650" width="3" height="1" fill="#5c504c"/>
<rect x="798" y="650" width="1" height="1" fill="#5c504c"/>
<rect x="793" y="651" width="2" height="1" fill="#5c504c"/>
<rect x="798" y="651" width="1" height="1" fill="#5c504c"/>
<rect x="793" y="652" width="1" height="1" fill="#5c504c"/>
<rect x="804" y="653" width="2" height="1" fill="#5c504c"/>
<rect x="800" y="656" width="1" height="1" fill="#5c504c"/>
<rect x="802" y="660" width="2" height="1" fill="#5c504c"/>
<rect x="802" y="661" width="2" height="1" fill="#5c504c"/>
</g>
<g fill="#000" shape-rendering="crispEdges">
<rect x="612" y="671" width="1" height="1"/>
<rect x="600" y="672" width="1" height="1"/>
<rect x="602" y="672" width="1" height="1"/>
<rect x="608" y="672" width="1" height="1"/>
<rect x="611" y="672" width="2" height="1"/>
<rect x="602" y="673" width="3" height="1"/>
<rect x="609" y="673" width="1" height="1"/>
<rect x="611" y="673" width="2" height="1"/>
<rect x="600" y="674" width="5" height="1"/>
<rect x="606" y="674" width="1" height="1"/>
<rect x="609" y="674" width="2" height="1"/>
<rect x="612" y="674" width="2" height="1"/>
<rect x="615" y="674" width="1" height="1"/>
<rect x="601" y="675" width="1" height="1"/>
<rect x="604" y="675" width="3" height="1"/>
<rect x="608" y="675" width="2" height="1"/>
<rect x="612" y="675" width="2" height="1"/>
<rect x="615" y="675" width="1" height="1"/>
<rect x="601" y="676" width="1" height="1"/>
<rect x="604" y="676" width="1" height="1"/>
<rect x="607" y="676" width="2" height="1"/>
<rect x="614" y="676" width="1" height="1"/>
<rect x="617" y="676" width="1" height="1"/>
<rect x="614" y="677" width="2" height="1"/>
<rect x="614" y="678" width="2" height="1"/>
<rect x="619" y="678" width="1" height="1"/>
<rect x="617" y="679" width="1" height="1"/>
<rect x="619" y="679" width="3" height="1"/>
<rect x="616" y="680" width="3" height="1"/>
<rect x="620" y="680" width="1" height="1"/>
<rect x="622" y="680" width="1" height="1"/>
<rect x="620" y="681" width="1" height="1"/>
<rect x="622" y="681" width="2" height="1"/>
<rect x="625" y="681" width="1" height="1"/>
<rect x="618" y="682" width="1" height="1"/>
<rect x="620" y="682" width="1" height="1"/>
<rect x="622" y="682" width="1" height="1"/>
<rect x="624" y="682" width="2" height="1"/>
<rect x="627" y="682" width="1" height="1"/>
<rect x="623" y="683" width="4" height="1"/>
<rect x="629" y="683" width="1" height="1"/>
<rect x="622" y="684" width="1" height="1"/>
<rect x="624" y="684" width="2" height="1"/>
<rect x="628" y="684" width="1" height="1"/>
<rect x="624" y="685" width="1" height="1"/>
<rect x="626" y="685" width="1" height="1"/>
<rect x="631" y="685" width="2" height="1"/>
<rect x="626" y="686" width="1" height="1"/>
<rect x="628" y="686" width="1" height="1"/>
<rect x="630" y="686" width="3" height="1"/>
<rect x="629" y="687" width="2" height="1"/>
<rect x="630" y="688" width="1" height="1"/>
<rect x="632" y="689" width="1" height="1"/>
<rect x="635" y="689" width="1" height="1"/>
<rect x="633" y="690" width="1" height="1"/>
<rect x="633" y="691" width="1" height="1"/>
<rect x="635" y="691" width="1" height="1"/>
<rect x="637" y="691" width="1" height="1"/>
<rect x="638" y="692" width="1" height="1"/>
<rect x="637" y="693" width="3" height="1"/>
<rect x="636" y="694" width="3" height="1"/>
<rect x="636" y="695" width="1" height="1"/>
<rect x="638" y="695" width="1" height="1"/>
<rect x="640" y="695" width="1" height="1"/>
<rect x="637" y="697" width="3" height="1"/>
<rect x="641" y="697" width="2" height="1"/>
<rect x="638" y="698" width="2" height="1"/>
<rect x="642" y="698" width="1" height="1"/>
<rect x="641" y="699" width="1" height="1"/>
<rect x="643" y="699" width="2" height="1"/>
<rect x="641" y="700" width="2" height="1"/>
<rect x="644" y="700" width="2" height="1"/>
<rect x="642" y="701" width="2" height="1"/>
<rect x="646" y="701" width="1" height="1"/>
<rect x="641" y="702" width="3" height="1"/>
<rect x="647" y="703" width="1" height="1"/>
<rect x="643" y="704" width="2" height="1"/>
<rect x="647" y="704" width="1" height="1"/>
<rect x="644" y="705" width="3" height="1"/>
<rect x="645" y="706" width="5" height="1"/>
<rect x="646" y="707" width="1" height="1"/>
<rect x="649" y="707" width="1" height="1"/>
<rect x="651" y="707" width="1" height="1"/>
<rect x="647" y="708" width="1" height="1"/>
<rect x="652" y="708" width="1" height="1"/>
<rect x="649" y="709" width="2" height="1"/>
<rect x="649" y="710" width="1" height="1"/>
<rect x="652" y="710" width="1" height="1"/>
<rect x="654" y="710" width="1" height="1"/>
<rect x="651" y="711" width="2" height="1"/>
<rect x="654" y="711" width="2" height="1"/>
<rect x="651" y="712" width="2" height="1"/>
<rect x="652" y="713" width="1" height="1"/>
<rect x="655" y="713" width="1" height="1"/>
<rect x="652" y="714" width="5" height="1"/>
<rect x="656" y="715" width="1" height="1"/>
<rect x="654" y="716" width="1" height="1"/>
<rect x="655" y="717" width="2" height="1"/>
<rect x="655" y="718" width="2" height="1"/>
<rect x="654" y="719" width="1" height="1"/>
<rect x="658" y="719" width="1" height="1"/>
<rect x="654" y="720" width="1" height="1"/>
<rect x="657" y="720" width="2" height="1"/>
<rect x="655" y="721" width="1" height="1"/>
<rect x="658" y="721" width="1" height="1"/>
<rect x="655" y="722" width="1" height="1"/>
<rect x="657" y="722" width="1" height="1"/>
<rect x="658" y="723" width="1" height="1"/>
<rect x="656" y="724" width="1" height="1"/>
<rect x="658" y="725" width="2" height="1"/>
<rect x="657" y="726" width="1" height="1"/>
<rect x="658" y="727" width="2" height="1"/>
<rect x="662" y="727" width="1" height="1"/>
<rect x="659" y="728" width="5" height="1"/>
<rect x="662" y="729" width="3" height="1"/>
<rect x="666" y="729" width="1" height="1"/>
<rect x="667" y="730" width="1" height="1"/>
<rect x="662" y="731" width="1" height="1"/>
<rect x="664" y="731" width="2" height="1"/>
<rect x="667" y="731" width="1" height="1"/>
<rect x="664" y="732" width="1" height="1"/>
<rect x="667" y="732" width="1" height="1"/>
<rect x="664" y="733" width="4" height="1"/>
<rect x="669" y="733" width="1" height="1"/>
<rect x="666" y="734" width="2" height="1"/>
<rect x="669" y="734" width="3" height="1"/>
<rect x="667" y="735" width="1" height="1"/>
<rect x="670" y="735" width="1" height="1"/>
<rect x="668" y="736" width="1" height="1"/>
<rect x="671" y="736" width="1" height="1"/>
<rect x="668" y="737" width="3" height="1"/>
<rect x="673" y="737" width="1" height="1"/>
<rect x="671" y="738" width="1" height="1"/>
<rect x="671" y="739" width="1" height="1"/>
<rect x="670" y="740" width="1" height="1"/>
<rect x="673" y="740" width="1" height="1"/>
<rect x="671" y="741" width="1" height="1"/>
<rect x="673" y="741" width="1" height="1"/>
<rect x="675" y="741" width="1" height="1"/>
<rect x="674" y="742" width="1" height="1"/>
<rect x="674" y="743" width="2" height="1"/>
<rect x="677" y="743" width="1" height="1"/>
<rect x="674" y="744" width="1" height="1"/>
<rect x="676" y="744" width="1" height="1"/>
<rect x="675" y="745" width="4" height="1"/>
<rect x="679" y="746" width="1" height="1"/>
<rect x="675" y="747" width="4" height="1"/>
<rect x="680" y="747" width="1" height="1"/>
<rect x="677" y="748" width="2" height="1"/>
<rect x="680" y="748" width="1" height="1"/>
<rect x="680" y="749" width="1" height="1"/>
<rect x="678" y="750" width="1" height="1"/>
<rect x="679" y="751" width="1" height="1"/>
<rect x="682" y="752" width="2" height="1"/>
<rect x="681" y="753" width="1" height="1"/>
<rect x="681" y="754" width="1" height="1"/>
<rect x="687" y="754" width="2" height="1"/>
<rect x="681" y="755" width="1" height="1"/>
<rect x="685" y="755" width="2" height="1"/>
<rect x="689" y="755" width="1" height="1"/>
<rect x="692" y="755" width="1" height="1"/>
<rect x="694" y="755" width="1" height="1"/>
<rect x="681" y="756" width="1" height="1"/>
<rect x="684" y="756" width="1" height="1"/>
<rect x="688" y="756" width="1" height="1"/>
<rect x="692" y="756" width="2" height="1"/>
<rect x="697" y="756" width="2" height="1"/>
<rect x="684" y="757" width="1" height="1"/>
<rect x="687" y="757" width="1" height="1"/>
<rect x="689" y="757" width="2" height="1"/>
<rect x="692" y="757" width="2" height="1"/>
<rect x="695" y="757" width="1" height="1"/>
<rect x="698" y="757" width="2" height="1"/>
<rect x="686" y="758" width="1" height="1"/>
<rect x="692" y="758" width="1" height="1"/>
<rect x="694" y="758" width="2" height="1"/>
<rect x="697" y="758" width="1" height="1"/>
<rect x="700" y="758" width="1" height="1"/>
<rect x="694" y="759" width="1" height="1"/>
<rect x="696" y="759" width="1" height="1"/>
<rect x="700" y="759" width="1" height="1"/>
<rect x="699" y="760" width="2" height="1"/>
<rect x="697" y="761" width="1" height="1"/>
<rect x="699" y="761" width="3" height="1"/>
<rect x="699" y="762" width="3" height="1"/>
<rect x="700" y="763" width="1" height="1"/>
<rect x="702" y="763" width="2" height="1"/>
<rect x="700" y="764" width="2" height="1"/>
<rect x="703" y="764" width="1" height="1"/>
<rect x="700" y="765" width="2" height="1"/>
<rect x="704" y="765" width="1" height="1"/>
<rect x="700" y="766" width="1" height="1"/>
<rect x="702" y="766" width="1" height="1"/>
<rect x="703" y="767" width="2" height="1"/>
<rect x="701" y="768" width="1" height="1"/>
<rect x="703" y="768" width="2" height="1"/>
<rect x="705" y="769" width="1" height="1"/>
<rect x="703" y="771" width="4" height="1"/>
<rect x="703" y="772" width="5" height="1"/>
<rect x="706" y="773" width="1" height="1"/>
<rect x="704" y="774" width="1" height="1"/>
<rect x="708" y="774" width="1" height="1"/>
<rect x="705" y="775" width="1" height="1"/>
<rect x="707" y="775" width="2" height="1"/>
<rect x="705" y="776" width="2" height="1"/>
<rect x="708" y="776" width="1" height="1"/>
<rect x="705" y="777" width="2" height="1"/>
<rect x="709" y="777" width="1" height="1"/>
<rect x="707" y="778" width="2" height="1"/>
<rect x="707" y="780" width="1" height="1"/>
<rect x="709" y="780" width="1" height="1"/>
<rect x="707" y="781" width="4" height="1"/>
<rect x="709" y="782" width="1" height="1"/>
<rect x="711" y="782" width="1" height="1"/>
<rect x="709" y="783" width="1" height="1"/>
<rect x="711" y="783" width="1" height="1"/>
<rect x="708" y="784" width="2" height="1"/>
<rect x="711" y="784" width="1" height="1"/>
<rect x="709" y="785" width="1" height="1"/>
<rect x="712" y="785" width="1" height="1"/>
<rect x="710" y="786" width="2" height="1"/>
<rect x="713" y="786" width="1" height="1"/>
<rect x="709" y="787" width="2" height="1"/>
<rect x="713" y="787" width="1" height="1"/>
<rect x="713" y="788" width="2" height="1"/>
<rect x="710" y="789" width="3" height="1"/>
<rect x="711" y="790" width="1" height="1"/>
<rect x="714" y="790" width="2" height="1"/>
<rect x="714" y="791" width="1" height="1"/>
<rect x="19" y="697" width="5" height="1"/>
<rect x="27" y="697" width="3" height="1"/>
<rect x="19" y="698" width="1" height="1"/>
<rect x="21" y="698" width="2" height="1"/>
<rect x="24" y="698" width="2" height="1"/>
<rect x="19" y="699" width="1" height="1"/>
<rect x="21" y="699" width="3" height="1"/>
<rect x="28" y="699" width="1" height="1"/>
<rect x="21" y="700" width="2" height="1"/>
<rect x="24" y="700" width="1" height="1"/>
<rect x="29" y="700" width="1" height="1"/>
<rect x="12" y="701" width="2" height="1"/>
<rect x="16" y="701" width="3" height="1"/>
<rect x="13" y="702" width="4" height="1"/>
<rect x="10" y="703" width="3" height="1"/>
<rect x="28" y="703" width="1" height="1"/>
<rect x="30" y="703" width="1" height="1"/>
<rect x="6" y="704" width="2" height="1"/>
<rect x="10" y="704" width="4" height="1"/>
<rect x="27" y="704" width="1" height="1"/>
<rect x="39" y="704" width="1" height="1"/>
<rect x="41" y="704" width="1" height="1"/>
<rect x="47" y="704" width="1" height="1"/>
<rect x="8" y="705" width="1" height="1"/>
<rect x="10" y="705" width="1" height="1"/>
<rect x="26" y="705" width="2" height="1"/>
<rect x="29" y="705" width="1" height="1"/>
<rect x="34" y="705" width="1" height="1"/>
<rect x="36" y="705" width="1" height="1"/>
<rect x="42" y="705" width="3" height="1"/>
<rect x="47" y="705" width="2" height="1"/>
<rect x="6" y="706" width="3" height="1"/>
<rect x="25" y="706" width="2" height="1"/>
<rect x="28" y="706" width="1" height="1"/>
<rect x="31" y="706" width="1" height="1"/>
<rect x="34" y="706" width="1" height="1"/>
<rect x="38" y="706" width="1" height="1"/>
<rect x="41" y="706" width="1" height="1"/>
<rect x="44" y="706" width="1" height="1"/>
<rect x="47" y="706" width="1" height="1"/>
<rect x="6" y="707" width="1" height="1"/>
<rect x="28" y="707" width="1" height="1"/>
<rect x="33" y="707" width="1" height="1"/>
<rect x="35" y="707" width="1" height="1"/>
<rect x="37" y="707" width="1" height="1"/>
<rect x="44" y="707" width="1" height="1"/>
<rect x="46" y="707" width="2" height="1"/>
<rect x="49" y="707" width="1" height="1"/>
<rect x="30" y="708" width="2" height="1"/>
<rect x="44" y="708" width="1" height="1"/>
<rect x="47" y="708" width="1" height="1"/>
<rect x="27" y="709" width="1" height="1"/>
<rect x="30" y="709" width="1" height="1"/>
<rect x="43" y="713" width="1" height="1"/>
<rect x="43" y="714" width="1" height="1"/>
<rect x="47" y="714" width="1" height="1"/>
<rect x="43" y="715" width="2" height="1"/>
<rect x="46" y="715" width="1" height="1"/>
<rect x="48" y="715" width="2" height="1"/>
<rect x="51" y="715" width="1" height="1"/>
<rect x="44" y="716" width="2" height="1"/>
<rect x="49" y="716" width="2" height="1"/>
<rect x="52" y="716" width="1" height="1"/>
<rect x="48" y="717" width="1" height="1"/>
<rect x="51" y="717" width="2" height="1"/>
<rect x="51" y="718" width="1" height="1"/>
<rect x="51" y="719" width="1" height="1"/>
<rect x="52" y="720" width="1" height="1"/>
<rect x="50" y="721" width="1" height="1"/>
<rect x="50" y="723" width="1" height="1"/>
<rect x="57" y="723" width="2" height="1"/>
<rect x="61" y="723" width="1" height="1"/>
<rect x="51" y="724" width="2" height="1"/>
<rect x="49" y="725" width="1" height="1"/>
<rect x="59" y="725" width="1" height="1"/>
<rect x="49" y="726" width="1" height="1"/>
<rect x="53" y="726" width="1" height="1"/>
<rect x="55" y="726" width="1" height="1"/>
<rect x="59" y="726" width="1" height="1"/>
<rect x="66" y="726" width="3" height="1"/>
<rect x="70" y="726" width="1" height="1"/>
<rect x="72" y="726" width="1" height="1"/>
<rect x="50" y="727" width="2" height="1"/>
<rect x="68" y="727" width="3" height="1"/>
<rect x="72" y="727" width="1" height="1"/>
<rect x="63" y="728" width="1" height="1"/>
<rect x="66" y="728" width="1" height="1"/>
<rect x="73" y="730" width="1" height="1"/>
<rect x="71" y="731" width="1" height="1"/>
<rect x="70" y="732" width="1" height="1"/>
<rect x="72" y="732" width="1" height="1"/>
<rect x="72" y="733" width="1" height="1"/>
<rect x="74" y="733" width="1" height="1"/>
<rect x="71" y="734" width="1" height="1"/>
<rect x="73" y="735" width="1" height="1"/>
<rect x="76" y="737" width="1" height="1"/>
<rect x="78" y="737" width="1" height="1"/>
<rect x="72" y="738" width="3" height="1"/>
<rect x="78" y="738" width="1" height="1"/>
<rect x="69" y="739" width="2" height="1"/>
<rect x="74" y="739" width="1" height="1"/>
<rect x="76" y="739" width="3" height="1"/>
<rect x="67" y="740" width="2" height="1"/>
<rect x="70" y="740" width="1" height="1"/>
<rect x="76" y="740" width="1" height="1"/>
<rect x="78" y="740" width="1" height="1"/>
<rect x="71" y="741" width="1" height="1"/>
<rect x="74" y="741" width="1" height="1"/>
<rect x="78" y="741" width="1" height="1"/>
<rect x="65" y="742" width="1" height="1"/>
<rect x="67" y="742" width="2" height="1"/>
<rect x="70" y="742" width="1" height="1"/>
<rect x="65" y="743" width="2" height="1"/>
<rect x="69" y="744" width="1" height="1"/>
<rect x="70" y="745" width="1" height="1"/>
<rect x="70" y="746" width="2" height="1"/>
<rect x="72" y="747" width="1" height="1"/>
<rect x="71" y="748" width="3" height="1"/>
<rect x="69" y="749" width="1" height="1"/>
<rect x="75" y="749" width="1" height="1"/>
<rect x="76" y="750" width="1" height="1"/>
<rect x="80" y="751" width="1" height="1"/>
<rect x="75" y="752" width="1" height="1"/>
<rect x="81" y="752" width="1" height="1"/>
<rect x="75" y="753" width="2" height="1"/>
<rect x="79" y="753" width="2" height="1"/>
<rect x="80" y="754" width="1" height="1"/>
<rect x="85" y="754" width="1" height="1"/>
<rect x="88" y="754" width="1" height="1"/>
<rect x="81" y="755" width="3" height="1"/>
<rect x="85" y="755" width="3" height="1"/>
<rect x="92" y="755" width="1" height="1"/>
<rect x="89" y="756" width="1" height="1"/>
<rect x="94" y="756" width="1" height="1"/>
<rect x="88" y="757" width="1" height="1"/>
<rect x="91" y="757" width="2" height="1"/>
<rect x="323" y="640" width="1" height="1"/>
<rect x="323" y="641" width="1" height="1"/>
<rect x="305" y="642" width="1" height="1"/>
<rect x="322" y="642" width="1" height="1"/>
<rect x="304" y="643" width="2" height="1"/>
<rect x="322" y="643" width="1" height="1"/>
<rect x="324" y="643" width="1" height="1"/>
<rect x="250" y="644" width="1" height="1"/>
<rect x="304" y="644" width="1" height="1"/>
<rect x="306" y="644" width="1" height="1"/>
<rect x="322" y="644" width="1" height="1"/>
<rect x="324" y="644" width="1" height="1"/>
<rect x="247" y="645" width="1" height="1"/>
<rect x="304" y="645" width="2" height="1"/>
<rect x="323" y="645" width="1" height="1"/>
<rect x="240" y="646" width="1" height="1"/>
<rect x="244" y="646" width="1" height="1"/>
<rect x="246" y="646" width="2" height="1"/>
<rect x="250" y="646" width="1" height="1"/>
<rect x="254" y="646" width="2" height="1"/>
<rect x="305" y="646" width="1" height="1"/>
<rect x="323" y="646" width="1" height="1"/>
<rect x="325" y="646" width="1" height="1"/>
<rect x="238" y="647" width="1" height="1"/>
<rect x="242" y="647" width="1" height="1"/>
<rect x="251" y="647" width="1" height="1"/>
<rect x="253" y="647" width="1" height="1"/>
<rect x="257" y="647" width="1" height="1"/>
<rect x="305" y="647" width="1" height="1"/>
<rect x="324" y="647" width="2" height="1"/>
<rect x="239" y="648" width="2" height="1"/>
<rect x="242" y="648" width="1" height="1"/>
<rect x="254" y="648" width="1" height="1"/>
<rect x="258" y="648" width="2" height="1"/>
<rect x="285" y="648" width="1" height="1"/>
<rect x="291" y="648" width="3" height="1"/>
<rect x="306" y="648" width="1" height="1"/>
<rect x="255" y="649" width="1" height="1"/>
<rect x="258" y="649" width="1" height="1"/>
<rect x="260" y="649" width="3" height="1"/>
<rect x="266" y="649" width="1" height="1"/>
<rect x="271" y="649" width="1" height="1"/>
<rect x="284" y="649" width="1" height="1"/>
<rect x="287" y="649" width="1" height="1"/>
<rect x="291" y="649" width="1" height="1"/>
<rect x="296" y="649" width="1" height="1"/>
<rect x="237" y="650" width="3" height="1"/>
<rect x="259" y="650" width="1" height="1"/>
<rect x="268" y="650" width="1" height="1"/>
<rect x="272" y="650" width="2" height="1"/>
<rect x="284" y="650" width="5" height="1"/>
<rect x="292" y="650" width="2" height="1"/>
<rect x="295" y="650" width="1" height="1"/>
<rect x="297" y="650" width="1" height="1"/>
<rect x="304" y="650" width="2" height="1"/>
<rect x="325" y="650" width="2" height="1"/>
<rect x="216" y="651" width="1" height="1"/>
<rect x="226" y="651" width="1" height="1"/>
<rect x="228" y="651" width="2" height="1"/>
<rect x="233" y="651" width="1" height="1"/>
<rect x="235" y="651" width="1" height="1"/>
<rect x="262" y="651" width="2" height="1"/>
<rect x="271" y="651" width="3" height="1"/>
<rect x="278" y="651" width="1" height="1"/>
<rect x="304" y="651" width="1" height="1"/>
<rect x="326" y="651" width="3" height="1"/>
<rect x="215" y="652" width="1" height="1"/>
<rect x="217" y="652" width="2" height="1"/>
<rect x="228" y="652" width="1" height="1"/>
<rect x="231" y="652" width="1" height="1"/>
<rect x="235" y="652" width="1" height="1"/>
<rect x="265" y="652" width="1" height="1"/>
<rect x="271" y="652" width="1" height="1"/>
<rect x="276" y="652" width="1" height="1"/>
<rect x="282" y="652" width="1" height="1"/>
<rect x="284" y="652" width="1" height="1"/>
<rect x="298" y="652" width="2" height="1"/>
<rect x="301" y="652" width="1" height="1"/>
<rect x="304" y="652" width="1" height="1"/>
<rect x="216" y="653" width="1" height="1"/>
<rect x="219" y="653" width="2" height="1"/>
<rect x="225" y="653" width="1" height="1"/>
<rect x="229" y="653" width="2" height="1"/>
<rect x="233" y="653" width="1" height="1"/>
<rect x="275" y="653" width="1" height="1"/>
<rect x="280" y="653" width="1" height="1"/>
<rect x="299" y="653" width="1" height="1"/>
<rect x="301" y="653" width="1" height="1"/>
<rect x="328" y="653" width="1" height="1"/>
<rect x="217" y="654" width="1" height="1"/>
<rect x="220" y="654" width="1" height="1"/>
<rect x="300" y="654" width="1" height="1"/>
<rect x="302" y="654" width="1" height="1"/>
<rect x="216" y="655" width="1" height="1"/>
<rect x="219" y="655" width="3" height="1"/>
<rect x="329" y="655" width="2" height="1"/>
<rect x="332" y="655" width="1" height="1"/>
<rect x="215" y="656" width="2" height="1"/>
<rect x="219" y="656" width="1" height="1"/>
<rect x="330" y="656" width="1" height="1"/>
<rect x="333" y="656" width="1" height="1"/>
<rect x="331" y="657" width="1" height="1"/>
<rect x="333" y="657" width="1" height="1"/>
<rect x="333" y="658" width="2" height="1"/>
<rect x="343" y="658" width="2" height="1"/>
<rect x="333" y="659" width="1" height="1"/>
<rect x="336" y="659" width="2" height="1"/>
<rect x="344" y="659" width="1" height="1"/>
<rect x="333" y="660" width="1" height="1"/>
<rect x="340" y="660" width="3" height="1"/>
<rect x="344" y="660" width="1" height="1"/>
<rect x="335" y="661" width="1" height="1"/>
<rect x="337" y="661" width="2" height="1"/>
<rect x="340" y="661" width="3" height="1"/>
</g>
<g fill="none" stroke="#000" stroke-width="1.3">
<path d="M249,678.6 L253,684.6 L254.4,693.9 L251.7,703.2 L246.4,711.2 L241,716.5 L235.7,721.8 L227.8,728.5 L223.8,731.1"/>
<path d="M227.8,663.3 L235.7,662"/>
<path d="M242.4,664.6 L250.4,662"/>
<path d="M257,660.6 L265,662.6 L273,663.3 L282,664.6"/>
<path d="M285,662 L300,661"/>
<path d="M506.6,694.7 L507.3,706 L512.2,713"/>
<path d="M523.4,713 L531.9,717.2 L534.7,720 L543.1,717.2 L554.4,710.2 L560,706 L569.9,698.9"/>
</g>
<g fill="#2e4a68" stroke="#1c3450" stroke-width="0.8">
<path d="M299.5,59.2 L303.5,57.9 L304.9,55.8 L309.6,55.1 L314.4,57.9 L315.7,61.9 L316.4,67.3 L319.8,70.7 L323.8,72.1 L319.8,73.4 L319.8,78.2 L319.1,82.9 L322.5,89 L323.8,92.4 L323.2,96.4 L319.8,91.7 L315.7,85.6 L314.4,78.2 L314.4,74.1 L310.3,68.7 L309.6,61.2 L307.6,59.2 L305.6,61.9 L302.9,63.3 L299.5,61.2Z"/>
<path d="M368.1,261.8 L371.1,259.2 L374,258.1 L377.7,259.6 L380.7,263.7 L386.6,265.5 L390.3,267.4 L392.5,271.1 L395.5,273.6 L396.6,276.6 L393.2,275.1 L388.8,271.4 L382.9,269.2 L380.7,268.1 L377.4,265.5 L374.8,261.8 L371.8,260.7 L369.2,262.6Z"/>
<path d="M604.4,306.6 L609.3,304.6 L612.3,305.6 L614.7,301.2 L612.7,293.3 L612.3,288.4 L614.2,285.4 L616.7,287.9 L618.7,289.9 L615.7,292.3 L616.7,294.8 L622.6,294.8 L620.6,289.9 L621.1,286.4 L623.6,289.9 L627.5,293.3 L624.6,296.3 L623.6,299.7 L620.1,302.7 L616.7,309.6 L612.7,311.5 L608.3,313.5 L605.9,311.5 L604.4,308.6Z"/>
<path d="M446.4,363.4 L449.6,365.5 L451.6,366.5 L448.5,369.7 L445.4,371.8 L443.3,374.9 L444.3,377 L439.1,377.5 L440.1,373.8 L442.2,368.6 L446.4,366.5Z"/>
<path d="M424.4,413.6 L427.6,417.8 L426.5,423.1 L430.7,428.3 L431.8,432.5 L428.6,434.6 L426.5,430.4 L425.5,425.2 L424.4,419.9Z"/>
<path d="M526.6,502.4 L527.8,506.1 L530.3,507.3 L533.4,500.5 L534,507.3 L531.5,513.5 L529.1,518.4 L528.5,523.9 L530.3,527 L535.8,525.2 L532.2,530.1 L534.6,533.8 L533.4,538.1 L529.7,537.5 L525.4,531.3 L527.8,528.8 L526,522 L526,517.2 L529.1,511 L526.6,505.5Z"/>
<path d="M539.9,601.3 L543.3,604.3 L543.8,612.2 L546.3,613.6 L551.2,612.7 L554.1,609.7 L555.6,604.8 L557.6,602.8 L557.1,606.7 L555.6,611.2 L562,611.7 L563.5,610.2 L564,613.6 L557.6,614.6 L553.6,616.6 L548.7,618.6 L547.2,620.5 L544.8,619.1 L541.3,617.1 L541.3,611.2 L541.3,604.8Z"/>
<path d="M121,660 L125,653 L132,652 L136,658 L133,667 L125,669Z"/>
<path d="M42,681 L45,679.5 L50,685 L51,689 L48,689.5 L44,685Z"/>
<path d="M57.2,690.2 L59,690 L61.5,695.5 L65.2,700.5 L68.6,702.7 L75.9,704 L81.4,705 L84,709 L83.5,711 L78.4,711 L70.9,708.5 L64.2,706 L59.2,701 L57,695Z"/>
<path d="M145.3,696 L152,696 L154.6,703.2 L152,707.2 L148,712.5 L144,713.8 L141.3,708.5 L146.6,705.9 L150,701.9 L147.3,699.2Z"/>
<path d="M783,734 L790,738 L797,752 L793,756 L786,748Z"/>
</g>
<g fill="none" stroke="#000" stroke-width="3.2">
<path d="M783.6,645.6 L786.4,647.9 L785.3,650.2 L783.9,652.5 L785.4,654.8 L785.5,657.1 L784.1,659.6 L785.7,661.8 L787,664 L786.5,666.6 L786.1,668.8 L787.1,671.1 L786.8,673.1 L785.3,674.9 L784.4,676.8 L785.8,678.2 L787.5,679.7 L787.3,683.1 L789,684.6 L792.6,684.2 L792.6,687 L792.5,689.4 L793.8,691.5 L795.2,693.6 L794.2,696 L793.4,698.4 L795.4,700.5 L795.9,703.3 L793.2,704.4 L792.8,706.8 L792.4,709.3 L789.6,710.3 L787.9,712.1 L788.2,714.6 L789,717.2 L787.1,718.8 L784.2,719.9 L785.3,722.5 L786.4,724.8 L784.5,727.1 L783.9,729.4 L786,731.7 L785,734"/>
</g>
<g fill="none" stroke="#004262" stroke-width="1.4">
<path d="M783.6,645.6 L786.4,647.9 L785.3,650.2 L783.9,652.5 L785.4,654.8 L785.5,657.1 L784.1,659.6 L785.7,661.8 L787,664 L786.5,666.6 L786.1,668.8 L787.1,671.1 L786.8,673.1 L785.3,674.9 L784.4,676.8 L785.8,678.2 L787.5,679.7 L787.3,683.1 L789,684.6 L792.6,684.2 L792.6,687 L792.5,689.4 L793.8,691.5 L795.2,693.6 L794.2,696 L793.4,698.4 L795.4,700.5 L795.9,703.3 L793.2,704.4 L792.8,706.8 L792.4,709.3 L789.6,710.3 L787.9,712.1 L788.2,714.6 L789,717.2 L787.1,718.8 L784.2,719.9 L785.3,722.5 L786.4,724.8 L784.5,727.1 L783.9,729.4 L786,731.7 L785,734"/>
</g>
<g fill="none" stroke="#806c12" stroke-width="1" shape-rendering="crispEdges">
<path d="M182.5,6.2 L191.2,17.5 L197.4,33.7 L200.6,42.4 L200.6,89.8 L196.1,101.2 L188.6,111.2 L187.4,124.9 L183.7,137.4 L176.2,146.2 L174.9,156.1 L167.4,167.4 L161.2,177.3 L155,189.8 L149.9,196.2 L145.5,203.6 L147.4,212.4 L151.1,222.4 L157.4,224.9"/>
<path d="M174.8,226.7 L174.7,227.8 L174.3,228.9 L173.6,229.8 L172.8,230.6 L171.8,231.2 L170.7,231.6 L169.5,231.7 L168.3,231.6 L167.2,231.2 L166.2,230.6 L165.4,229.8 L164.7,228.9 L164.3,227.8 L164.2,226.7 L164.3,225.6 L164.7,224.5 L165.4,223.6 L166.2,222.8 L167.2,222.2 L168.3,221.8 L169.5,221.7 L170.7,221.8 L171.8,222.2 L172.8,222.8 L173.6,223.6 L174.3,224.5 L174.7,225.6 L174.8,226.7"/>
<path d="M164.5,231 L163.8,236 L167.5,255 L172.5,292.5 L175,322.5 L182.5,360 L182.5,385 L175,405 L162.5,433 L157.3,462.4 L152.3,479.9 L142.3,499.9 L136,512.3 L133.5,526 L130.8,540 L129.5,577.4 L126.4,602.3 L125.5,625 L130,645 L135,652.5"/>
<path d="M6,255 L75,245 L95,239.8 L105,236.1 L110,234.2 L117.5,229.8 L126.2,226.1 L136.2,224.9 L157.4,224.9 L164,224.5"/>
<path d="M174.8,223.6 L184.8,218.6 L197.3,208.6 L209.8,202.4 L219.8,193.7 L226,188 L232,186.2 L250,175 L280,165 L290,165 L315,160 L340,155 L365,147.5 L385,140 L400,135 L405,135 L425,132.5 L450,132.5 L480,137.5 L515,136.2 L522,142.2 L549.5,158.5 L572,161 L597,153.5 L614.5,148.5"/>
<path d="M614.5,148.5 L642,148.5 L659.5,141 L684.5,126 L709.5,113.5 L747,91 L772,81 L806,71"/>
<path d="M659.5,142.2 L672,153.5 L684.5,171 L687,186 L702,191 L722,186 L747,181 L772,176 L806,172.2"/>
<path d="M714.5,188.5 L722,201 L727,209 L742,215 L755.4,233.8 L768.9,260.7 L768.9,282.2 L806,306.4"/>
<path d="M241.1,6.2 L248.6,16.2 L248.6,21.2 L258.6,32.4 L263.6,43.7 L263.6,51.2 L268.6,58.6 L284.8,61.1 L290,57.5 L305,53.8 L320,62.5 L340,77.5 L365,92.5 L382.5,110 L395,120 L405,127.5"/>
<path d="M241.1,6.2 L229.9,17.5 L228,22.5 L228,42.4 L224.9,59.9 L214.9,68 L201.2,71.1"/>
<path d="M397.5,100 L415,101.2 L430,107.5 L436.2,117.5 L437.5,130 L432.5,145 L425,157.5 L410,165 L395,163.8 L380,157.5 L367.5,145 L365,132.5 L370,117.5 L380,107.5 L390,101.2 L397.5,100"/>
<path d="M471.2,6 L467.5,40 L462.5,47.5 L440,57.5 L430,70 L422.5,90 L410,112.5 L407.5,125 L405,135"/>
<path d="M405,135 L400,165 L397.5,190 L397.5,243 L395,252.5 L396.2,305 L400,335 L401.4,340 L402,360.7 L405,381.4 L403.6,396.2 L408,405 L412.4,418.4 L419.8,431.7 L424.3,442 L430.2,460 L437.8,471 L424.5,495.6 L397.8,544.5 L366.7,575.7 L326.7,602.3 L315,615 L307.5,625"/>
<path d="M407.5,137.5 L422.5,152.5 L445,180 L465,205 L477.5,225 L495,237.5 L507.5,235 L520,237.5"/>
<path d="M520,237.5 L540,220 L557,209 L574.5,181 L594.5,158.5 L614.5,148.5 L609.5,138.5 L597,123.5 L592,108.5 L604.5,96 L600.8,78.5 L604.5,66 L604.5,48.5 L594.5,38.5 L587,23.5 L588.2,6"/>
<path d="M513,240 L521.5,236.5 L535,250 L543,287.6 L556.5,314.4 L570,325.2 L580.7,336 L584.6,350 L600,380 L612.7,409 L627.2,421.6 L633.5,434.3 L630.8,461.5 L629,488.6 L630.8,515.8 L636.2,526 L646.8,553.4 L657,590 L672,625 L697,650 L712,665 L719.5,690 L729.5,710 L742,730 L747,750 L750.3,770.5 L754.8,788.6 L756,806"/>
<path d="M402,369.6 L409.5,366.6 L416.9,362.2 L422.8,353.3 L428.7,347.4 L440.5,340 L460,316 L477.9,289 L490,262 L500,240 L509,236"/>
<path d="M405,381.4 L387.5,387.5 L370,400 L347.5,402.5 L335,410 L315,433 L300,445 L280,458 L262,470 L255,475 L200,475 L162,481.2 L146,479.3 L134.8,473.7 L109.8,473.7 L98.6,477.4 L82.4,473.7 L45,464.9 L6,462"/>
<path d="M405,381.4 L414,366.6 L428.7,363.7 L446.4,362.9 L465.7,364.4 L480,362.2 L522.3,353.3 L584.6,353.3 L591.4,352 L661.3,368.2 L728.6,373.6 L768.9,365.5 L806,341.3"/>
<path d="M255,475 L230,525 L215,575 L205,600 L195,620 L187.5,642.5 L185,657.5 L175,675 L160,685"/>
<path d="M6,661 L37.5,650 L72.5,643.8 L87.5,643.8 L125,640 L140,640 L152.5,643.8 L171.2,651.2 L183.7,655.6 L193.7,656.2 L206.2,651.2 L220,647.5 L240,642.5 L265,642.5 L282,641.2 L290,637.5 L307.5,625 L320,623.8 L345,627.5 L357.5,632.5 L370,637.5 L387.5,630 L407.5,622.5 L432.5,617.5 L445,616.2 L470,618.8 L482.5,615 L507.5,616.2 L520,617.5 L532.5,623.8 L547,627.5 L584.5,640 L622,642.5 L672,652.5 L704.5,660 L734.5,662.5 L759.5,657.5 L784.5,655"/>
<path d="M92.5,657.5 L105,670 L130,675 L140,678.7 L156.2,683.1 L161.2,686.2 L165,682.5 L175,671.2 L183.7,661.2 L187.4,650 L190,640"/>
<path d="M6,615 L12.5,630 L15,660"/>
<path d="M437.8,471 L477.9,455.6 L513.4,429 L540,406.7 L548.4,398.3 L553.8,384.4 L578,352 L584.6,350 L588.7,336 L607.6,319.8 L634.4,309.1 L661.3,295.6 L688.2,282.2 L715.1,268.7 L742,252.6 L768.9,233.8 L806,220.3"/>
<path d="M627.2,421.6 L636.2,427 L645.3,438 L654.3,445.2 L681.5,457.8 L708.6,466 L735.8,469.6 L759.3,472.3 L781,483.2 L797.3,486.8 L806,494"/>
<path d="M739.3,252.6 L755.4,268.7 L768.9,282.2"/>
<path d="M583.2,294 L574.5,309 L569.5,324 L579.5,334"/>
<path d="M804.3,536.2 L801.7,543.1 L800.8,563.8 L793.9,579.3 L786.2,593.1 L784.4,603.4 L785.3,620.7 L787,635.8 L785,645.6 L779.2,655.5 L781.2,665.3 L791,669.3 L798.9,679.1 L804.8,694.9"/>
<path d="M793,654.5 L792.8,657.3 L792.2,660.1 L791.3,662.5 L790,664.5 L788.5,666 L786.8,667 L785,667.3 L783.2,667 L781.5,666 L780,664.5 L778.7,662.5 L777.8,660.1 L777.2,657.3 L777,654.5 L777.2,651.7 L777.8,648.9 L778.7,646.5 L780,644.5 L781.5,643 L783.2,642 L785,641.7 L786.8,642 L788.5,643 L790,644.5 L791.3,646.5 L792.2,648.9 L792.8,651.7 L793,654.5"/>
<path d="M594.6,352 L594.3,355.1 L593.3,358 L591.7,360.5 L589.6,362.4 L587.2,363.6 L584.6,364 L582,363.6 L579.6,362.4 L577.5,360.5 L575.9,358 L574.9,355.1 L574.6,352 L574.9,348.9 L575.9,346 L577.5,343.5 L579.6,341.6 L582,340.4 L584.6,340 L587.2,340.4 L589.6,341.6 L591.7,343.5 L593.3,346 L594.3,348.9 L594.6,352"/>
<path d="M158,477 L157.6,479.2 L156.5,481.1 L154.7,482.7 L152.5,483.7 L150,484 L147.5,483.7 L145.3,482.7 L143.5,481.1 L142.4,479.2 L142,477 L142.4,474.8 L143.5,472.9 L145.3,471.3 L147.5,470.3 L150,470 L152.5,470.3 L154.7,471.3 L156.5,472.9 L157.6,474.8 L158,477"/>
</g>
<g fill="none" stroke="#000" stroke-width="1.1" shape-rendering="crispEdges">
<path d="M6,105.2 L154.3,105.2 L156.2,112.5 L160.6,114.3 L160,123.7 L155,130 L148.7,134.9 L137.5,149.3 L186.8,149.3"/>
<path d="M209.9,104.6 L290,105 L311.2,104.5 L312.5,97.5 L310,88.8 L325,91.2 L365,91.2 L415,91.2 L452.5,92 L515,93.8 L522,93.5 L635,95 L787,94.8 L806,98.5"/>
<path d="M635.8,94.8 L640,93.1 L642.2,91.3 L649.2,89.4 L656.6,89 L659.2,86.8 L663.6,85.3 L671.4,83.1 L676.2,82.8 L677,80.9 L679.2,77.2 L697,68.5 L697,61 L707,56 L709.5,48.5 L734.5,34.8 L754.5,18.5 L764.5,13.5 L747,6"/>
<path d="M764.5,13.5 L767,26 L782,38.5 L792,41 L806,33.5"/>
<path d="M787,94.8 L782,111 L782,118.5 L769.5,121 L759.5,133.5 L747,136 L734.5,138.5 L722,151 L714.5,143.5 L704.5,148.5 L694.5,156 L692,166 L682,168.5 L669.5,176 L654.5,186 L634.5,188.5 L619.5,193.5 L612,201 L609.5,209 L607.6,212.3 L594.1,215 L590,220.3 L588.7,238.6"/>
<path d="M143,238.6 L500,238.6 L588.7,238.6 L678.8,237.8"/>
<path d="M678.8,237.8 L704.4,228.4 L731.2,220.3 L742,220.3 L806,223"/>
<path d="M678.8,239 L669.4,250 L661.3,263.4 L672.1,274.1 L685.5,283.5 L693.6,284.9 L707,311.8 L717.8,330.6 L733.9,341.3 L744.7,354.8 L758.1,368.2 L764.7,380 L768.4,387.2 L779.2,398.1 L795.5,412.6 L799,421.6 L804.6,437.9 L806,441.5"/>
<path d="M300,237.5 L307.5,247.5 L303.8,285 L296.2,355 L287.5,433 L280,500 L282.5,600 L285,640"/>
<path d="M492.5,238.5 L500,279.5 L511.2,340 L517.9,384.5 L524.5,429 L540,469 L544.5,482.3 L531.2,500 L533.4,535.6 L529,562.3 L536.4,590 L537.4,594.9 L539.4,597.4 L539.9,600.8"/>
<path d="M344.5,594.3 L535.7,594.3"/>
<path d="M547.2,620.5 L558.6,620.5 L570,621.5 L744.6,631.2 L746.9,651.3 L758,651.3 L760.2,611.2 L780.2,609 L798,620.1"/>
<path d="M344.5,594.3 L342.2,602.3 L349,615.7 L357.8,629 L360,642.4"/>
<path d="M6,415.5 L80,415.5"/>
<path d="M45,594 L185,594 L188,610 L186,630 L190,645 L192.5,655"/>
<path d="M204.3,6.2 C203.8,6.6 201.4,7.4 201.2,8.7 C201,9.9 202,11.6 203,13.7 C204,15.8 206.6,18.7 207.4,21.2 C208.2,23.7 208.6,27.2 208,28.7 C207.4,30.1 204.8,29.1 203.7,29.9 C202.6,30.7 201.1,32.5 201.2,33.7 C201.3,35 203.3,35.7 204.3,37.4 C205.3,39.1 206.2,41.4 207.4,43.7 C208.6,46 210.4,49.1 211.2,51.2 C212,53.3 211.4,55.6 212.4,56.2 C213.4,56.8 216,54.7 217.4,54.9 C218.8,55.1 219.8,56.8 221.1,57.4 C222.3,58 223.8,58 224.9,58.6 C226,59.2 226.3,60.5 227.4,61.1 C228.5,61.7 231,60.7 231.7,62.4 C232.4,64.1 232.5,69 231.7,71.1 C230.9,73.2 227,73.2 226.8,74.9 C226.6,76.6 230.6,79.4 230.5,81.1 C230.4,82.8 226.4,83.4 226.1,84.9 C225.8,86.4 228.8,88.3 228.6,90 C228.4,91.7 226.1,93.5 224.8,95 C223.6,96.5 222.3,98.7 221.1,98.7 C219.8,98.7 218.6,96.1 217.3,95 C216.1,93.9 214.6,91.5 213.6,91.9 C212.6,92.3 211.7,95.3 211.1,97.5 C210.5,99.7 210.9,103.3 209.9,105 C208.9,106.7 206,107.7 204.9,107.5 C203.8,107.3 203.6,105 203.6,103.7 C203.6,102.5 205.3,101 204.9,100 C204.5,99 202.3,97.5 201.1,97.5 C199.8,97.5 197.8,99 197.4,100 C197,101 197.8,102.7 198.6,103.7 C199.4,104.7 202.2,105.4 202.4,106.2 C202.6,107 200,106.8 199.9,108.7 C199.8,110.6 202.5,115.6 201.7,117.5 C200.9,119.4 195.8,119 194.9,120 C194,121 195.2,122.9 196.1,123.7 C197,124.5 200.1,124.3 200.5,124.9 C200.9,125.5 200.6,127.1 198.6,127.4 C196.6,127.7 189.6,126 188.6,126.8 C187.6,127.6 191.2,130.8 192.4,132.4 C193.7,134 196.3,134.9 196.1,136.2 C195.9,137.4 192.3,138.2 191.1,139.9 C189.8,141.6 189.3,144.6 188.6,146.2 C187.9,147.8 187,148.3 186.8,149.3 C186.6,150.3 186.5,151.1 187.4,152.4 C188.3,153.8 192,156.2 192.4,157.4 C192.8,158.7 191.4,159.7 189.9,159.9 C188.4,160.1 184.5,158.2 183.7,158.6 C182.9,159 184.1,161.3 184.9,162.4 C185.7,163.5 189,163.9 188.6,164.9 C188.2,165.9 184.5,167.3 182.4,168.6 C180.3,169.8 178.1,172 176.2,172.4 C174.3,172.8 172.2,170.7 171.2,171.1 C170.1,171.5 169.7,173.7 169.9,174.9 C170.1,176.2 171.4,177.8 172.4,178.6 C173.4,179.4 176.4,178.8 176.2,179.8 C176,180.8 172.2,183.1 171.2,184.8 C170.1,186.5 171.2,188.9 169.9,189.8 C168.6,190.7 164.8,189.3 163.6,190 C162.3,190.7 162.4,192.3 162.4,193.7 C162.4,195.1 163.7,197.1 163.6,198.6 C163.5,200.1 162.5,202.8 161.8,202.4 C161.1,202 160.2,197 159.3,196.2 C158.4,195.4 157.2,196.4 156.1,197.4 C154.9,198.4 152.6,201.2 152.4,202.4 C152.2,203.6 153.8,204.3 154.9,204.3 C156.1,204.3 158.3,202.5 159.3,202.4 C160.3,202.3 161.3,202.8 161.1,203.6 C160.9,204.4 159.2,206.2 158,207.4 C156.8,208.6 154.3,209.8 153.6,211 C152.9,212.2 152.8,213.7 153.6,214.9 C154.4,216.1 157.8,216.8 158.6,218 C159.4,219.2 158.4,221.1 158.6,222.4 C158.8,223.8 160.5,225.3 159.9,226.1 C159.3,226.9 156.4,226.3 154.9,227.3 C153.4,228.3 152.8,231.1 151.1,232.3 C149.4,233.6 146.2,233.8 144.9,234.8 C143.6,235.9 142.7,237.5 143,238.6 C143.3,239.7 146,239.8 146.7,241.2 C147.4,242.6 148,245.2 147.3,246.9 C146.6,248.6 144.2,250.2 142.3,251.2 C140.4,252.2 137.8,253.7 136.1,253.1 C134.4,252.5 133.4,248.2 132.4,247.5 C131.4,246.8 130.1,247.7 129.9,248.7 C129.7,249.7 131.1,252.2 131.1,253.7 C131.1,255.2 129.8,256.4 129.9,257.5 C130,258.6 132.1,260 131.7,260.6 C131.3,261.2 128.3,261.9 127.4,261.2 C126.5,260.5 126.7,256.4 126.1,256.2 C125.5,256 124,258.5 123.6,260 C123.2,261.5 122.3,264 123.6,265 C124.8,266 130.6,265.2 131.1,266.2 C131.6,267.2 128.2,271.2 126.7,271.2 C125.2,271.2 123.1,265.6 122.4,266.2 C121.7,266.8 121.9,272.8 122.4,274.9 C122.9,277 125.5,277.4 125.5,278.7 C125.5,279.9 122.7,280.5 122.4,282.4 C122.1,284.3 124.4,288.1 123.6,289.9 C122.8,291.7 118.8,291.6 117.4,293 C116.1,294.4 115.9,298.4 115.5,298.6 C115.1,298.8 116.1,294.9 114.9,294.3 C113.8,293.7 109.4,294 108.6,294.9 C107.8,295.8 110.5,298.5 109.9,299.9 C109.3,301.2 106.2,301.6 104.9,303 C103.7,304.4 103.8,308.1 102.4,308.6 C101.1,309.1 97.6,306 96.8,306.1 C96,306.2 96.1,308.4 97.4,309.2 C98.8,310 103.7,310.3 104.9,311.1 C106.2,311.9 106.2,313.9 104.9,314.2 C103.7,314.5 99.1,312.7 97.4,313 C95.7,313.3 94.5,315.1 94.9,316.1 C95.3,317.1 98.9,318.2 99.9,319.2 C101,320.2 101.8,321.2 101.2,322.3 C100.6,323.4 98.1,324.7 96.2,325.5 C94.3,326.3 91.8,326.5 89.9,327.3 C88,328.1 84.9,329.7 84.9,330.5 C84.9,331.3 89.6,331.1 89.9,332.3 C90.2,333.5 87.2,335.8 86.8,337.5 C86.4,339.2 86.5,341.1 87.4,342.5 C88.3,343.9 92,345.2 92.4,346.2 C92.8,347.2 91.8,348.7 89.9,348.7 C88,348.7 82.8,345.8 81.2,346.2 C79.6,346.6 79.3,349.7 80.5,351.2 C81.7,352.7 87.9,354.1 88.6,355 C89.3,355.9 86.8,357 84.9,356.8 C83,356.6 79.2,353.8 77.4,353.7 C75.6,353.6 73.9,355.1 74.3,356.2 C74.7,357.2 78.8,358.8 79.9,360 C81.1,361.2 82,362.7 81.2,363.7 C80.4,364.7 76,365.4 74.9,366.2 C73.9,367 73.9,367.7 74.9,368.7 C76,369.7 80.8,371.8 81.2,372.4 C81.6,373 78.6,371.7 77.4,372.4 C76.2,373.1 74.1,375.3 74.3,376.8 C74.5,378.3 76.9,380.7 78.7,381.2 C80.5,381.7 83.5,380.6 84.9,379.9 C86.4,379.2 87.4,377.5 87.4,376.8 C87.4,376.1 85.7,375 84.9,375.5 C84.1,376 83.1,378.1 82.4,379.9 C81.7,381.7 80.5,384.1 80.5,386.2 C80.5,388.3 81.2,391.2 82.4,392.4 C83.6,393.6 86.8,393.9 87.4,393.6 C88,393.3 86.7,390.7 86.2,390.5 C85.7,390.3 84.5,390.6 84.3,392.4 C84.1,394.2 85,399.1 84.9,401.1 C84.8,403.1 84.9,403.6 83.7,404.2 C82.5,404.8 79.2,404.4 78,404.9 C76.8,405.4 76.1,406.1 76.8,407.4 C77.5,408.6 81.9,411.1 82.4,412.4 C82.9,413.6 80.9,413.3 79.9,414.9 C78.9,416.4 76.2,420 76.2,421.7 C76.2,423.4 78.5,424.7 79.9,424.8 C81.4,424.9 84,423.6 84.9,422.3 C85.8,421.1 85.9,418.1 85.5,417.3 C85.1,416.5 82.7,415.8 82.4,417.3 C82.1,418.8 84.1,424 83.7,426.1 C83.3,428.2 80.6,428.1 79.9,430 C79.2,431.9 78,435.7 79.3,437.5 C80.5,439.3 87.1,438.9 87.4,440.6 C87.7,442.3 82,445.6 81.1,447.5 C80.2,449.4 80.4,451.1 81.8,451.8 C83.2,452.5 87.8,452.2 89.3,451.8 C90.8,451.4 91.3,449 91.1,449.3 C90.9,449.6 89.3,452.4 88,453.7 C86.7,454.9 83.7,455.4 83,456.8 C82.3,458.2 82.1,460.6 83.6,462.4 C85,464.2 90.3,465.7 91.7,467.4 C93.1,469.1 90.7,471.1 91.7,472.4 C92.8,473.6 96.6,474.9 98,474.9 C99.4,474.9 100,472 99.9,472.4 C99.8,472.8 98.5,476.1 97.4,477.4 C96.4,478.6 94.4,478.3 93.6,479.9 C92.8,481.5 94.3,485.9 92.4,486.8 C90.5,487.7 84.7,485 82.4,485.5 C80.1,486 78.6,488.4 78.6,489.9 C78.6,491.4 80.5,493.9 82.4,494.3 C84.3,494.7 88.7,493.1 89.9,492.4 C91.2,491.7 90.5,489.3 89.9,489.9 C89.3,490.5 87.8,494.4 86.1,496.1 C84.4,497.8 80.3,498.8 79.9,499.9 C79.5,500.9 82.8,501.4 83.6,502.4 C84.4,503.4 85.9,505.1 84.9,506.1 C83.9,507.1 78.8,507.6 77.4,508.6 C76.1,509.6 77.8,510.8 76.8,512.3 C75.8,513.8 72.2,516.2 71.2,517.3 C70.2,518.4 71.6,518.6 70.9,518.7 C70.2,518.8 68.1,517.3 67.1,518.1 C66,518.9 65.1,522.2 64.6,523.7 C64.1,525.2 62.8,526.4 64,526.9 C65.2,527.4 70.9,527.2 72.1,526.9 C73.2,526.6 72.4,524.7 70.9,525 C69.5,525.3 64.8,526.6 63.4,528.7 C61.9,530.8 63,535.7 62.2,537.5 C61.4,539.3 59.8,539.4 58.4,539.3 C57,539.2 54.6,536.5 54,536.8 C53.4,537.1 53.6,540.4 54.7,541.2 C55.9,542 60.3,541.2 60.9,541.8 C61.5,542.4 59.8,544 58.4,545 C57,546 53.6,546.5 52.8,548.1 C52,549.8 54,553.5 53.4,554.9 C52.8,556.2 49.7,555.4 49,556.2 C48.3,557 47.9,559.4 49,559.9 C50.1,560.4 54.9,560.1 55.9,559.3 C56.9,558.5 56.2,554.5 55.3,554.9 C54.4,555.3 50.5,559.7 50.3,561.8 C50.1,563.9 53.7,566 54,567.4 C54.3,568.8 54,569.4 52.2,569.9 C50.4,570.4 44.2,569.2 43.4,570.5 C42.6,571.8 47,575.4 47.2,577.4 C47.4,579.4 44.3,580.3 44.7,582.4 C45.1,584.5 49.7,587.9 49.7,589.9 C49.7,591.9 45.5,593.5 44.7,594.2"/>
<path d="M227.4,52.4 C228.7,50.7 232.6,44.5 234.9,42.4 C237.2,40.3 239,40 241.1,39.7 C243.2,39.4 244.2,39.4 247.3,40.6 C250.4,41.8 256.7,45.4 259.8,46.8 C262.9,48.1 263.6,47.6 266.1,48.7 C268.6,49.9 272.3,53 274.8,53.7 C277.3,54.4 279.6,54.2 281,53 C282.4,51.8 284.1,48.8 283.5,46.2 C282.9,43.6 278.4,39.9 277.3,37.4 C276.2,34.9 276.3,33.5 276.7,31.2 C277.1,28.9 278.4,25.1 279.8,23.7 C281.2,22.2 282.7,23.2 284.8,22.5 C286.9,21.8 289.4,19.9 292.3,19.3 C295.2,18.7 299.6,19.4 302,18.7 C304.4,17.9 305.5,16.9 306.5,14.8 C307.5,12.7 307.8,7.5 308,6"/>
</g>
<defs><mask id="rm"><rect x="0" y="0" width="1138" height="812" fill="#fff"/>
<rect x="398.4" y="363.4" width="14.8" height="8" fill="#000"/>
<rect x="394.1" y="243.5" width="23" height="8" fill="#000"/>
<rect x="394.1" y="123.5" width="23" height="8" fill="#000"/>
<rect x="393.8" y="3.5" width="23.6" height="8" fill="#000"/>
</mask></defs>
<g mask="url(#rm)">
<g fill="none" stroke="#c8c8c8" stroke-width="1" shape-rendering="crispEdges">
<circle cx="407" cy="407" r="159.5"/>
<circle cx="407" cy="407" r="279.5"/>
<circle cx="407" cy="407" r="399.5"/>
<circle cx="407" cy="407" r="519.5"/>
</g>
<circle cx="407" cy="407" r="39.6" fill="none" stroke="#f01010" stroke-width="1" shape-rendering="crispEdges"/>
</g>
<text x="399.9" y="371.9" font-size="11" fill="#f4f0a8" textLength="11.8" lengthAdjust="spacingAndGlyphs">31</text>
<text x="395.6" y="252" font-size="11" fill="#f4f0a8" textLength="20" lengthAdjust="spacingAndGlyphs">125</text>
<text x="395.6" y="132" font-size="11" fill="#f4f0a8" textLength="20" lengthAdjust="spacingAndGlyphs">219</text>
<text x="395.3" y="12" font-size="11" fill="#f4f0a8" textLength="20.6" lengthAdjust="spacingAndGlyphs">313</text>
<rect x="517" y="55" width="7" height="1" fill="#e87800" shape-rendering="crispEdges"/>
<rect x="516" y="744" width="7" height="1" fill="#f09800" shape-rendering="crispEdges"/>
</g>
<rect x="6" y="757" width="248" height="48" fill="#000"/>
<rect x="9.5" y="759.5" width="242" height="43" fill="none" stroke="#a0a0a0" stroke-width="1"/>
<rect x="685" y="792" width="121" height="14" fill="#000"/>
<circle cx="60.5" cy="780.5" r="4.3" fill="none" stroke="#00d8e8" stroke-width="1"/><line x1="58" y1="780.5" x2="63" y2="780.5" stroke="#00d8e8" stroke-width="1"/>
<line x1="82" y1="780.5" x2="89" y2="780.5" stroke="#00d8e8" stroke-width="1"/>
<circle cx="110.5" cy="780.5" r="4.3" fill="none" stroke="#00d8e8" stroke-width="1"/><line x1="108" y1="780.5" x2="113" y2="780.5" stroke="#00d8e8" stroke-width="1"/><line x1="110.5" y1="778" x2="110.5" y2="783" stroke="#00d8e8" stroke-width="1"/>
<line x1="132" y1="780.5" x2="139" y2="780.5" stroke="#00d8e8" stroke-width="1"/>
<line x1="135.5" y1="777" x2="135.5" y2="784" stroke="#00d8e8" stroke-width="1"/>
<circle cx="60.5" cy="793.5" r="4.3" fill="none" stroke="#e8e800" stroke-width="1"/><line x1="58" y1="793.5" x2="63" y2="793.5" stroke="#e8e800" stroke-width="1"/>
<line x1="82" y1="793.5" x2="89" y2="793.5" stroke="#e8e800" stroke-width="1"/>
<circle cx="110.5" cy="793.5" r="4.3" fill="none" stroke="#e8e800" stroke-width="1"/><line x1="108" y1="793.5" x2="113" y2="793.5" stroke="#e8e800" stroke-width="1"/><line x1="110.5" y1="791" x2="110.5" y2="796" stroke="#e8e800" stroke-width="1"/>
<line x1="132" y1="793.5" x2="139" y2="793.5" stroke="#e8e800" stroke-width="1"/>
<line x1="135.5" y1="790" x2="135.5" y2="797" stroke="#e8e800" stroke-width="1"/>
<text x="13.1" y="770.8" font-size="9.3" fill="#d8d8d8" textLength="35.4" lengthAdjust="spacingAndGlyphs">Symbols</text>
<text x="53.1" y="770.8" font-size="9.3" fill="#e8e8e8" textLength="16.6" lengthAdjust="spacingAndGlyphs">-CG</text>
<text x="78.3" y="770.8" font-size="9.3" fill="#e8e8e8" textLength="13.7" lengthAdjust="spacingAndGlyphs">-IC</text>
<text x="98.8" y="770.8" font-size="9.3" fill="#e8e8e8" textLength="20" lengthAdjust="spacingAndGlyphs">+CG</text>
<text x="124" y="770.8" font-size="9.3" fill="#e8e8e8" textLength="17.2" lengthAdjust="spacingAndGlyphs">+IC</text>
<text x="153" y="770.8" font-size="9.3" fill="#d8d8d8" textLength="90.2" lengthAdjust="spacingAndGlyphs">Strike age color codes</text>
<text x="13.1" y="783.4" font-size="9.3" fill="#d8d8d8" textLength="28" lengthAdjust="spacingAndGlyphs">Recent</text>
<text x="13.1" y="796.5" font-size="9.3" fill="#d8d8d8" textLength="14.9" lengthAdjust="spacingAndGlyphs">Old</text>
<text x="153.6" y="783.4" font-size="9.3" fill="#e0d000" textLength="15.9" lengthAdjust="spacingAndGlyphs">15+</text>
<text x="188.4" y="783.4" font-size="9.3" fill="#e0b400" textLength="15.9" lengthAdjust="spacingAndGlyphs">30+</text>
<text x="223.2" y="783.4" font-size="9.3" fill="#e0a000" textLength="15.9" lengthAdjust="spacingAndGlyphs">45+</text>
<text x="153.6" y="796.5" font-size="9.3" fill="#e07800" textLength="15.9" lengthAdjust="spacingAndGlyphs">60+</text>
<text x="188.4" y="796.5" font-size="9.3" fill="#e05a00" textLength="15.9" lengthAdjust="spacingAndGlyphs">75+</text>
<text x="223.2" y="796.5" font-size="9.3" fill="#e03c00" textLength="15.9" lengthAdjust="spacingAndGlyphs">90+</text>
<text x="688.9" y="801.7" font-size="9.5" fill="#e8e8e8" textLength="113.1" lengthAdjust="spacingAndGlyphs">©2005 Astrogenic Systems</text>
<g fill="none" stroke="#c0c0c0" stroke-width="1">
<rect x="812.5" y="8.5" width="319" height="319" rx="6"/>
<rect x="812.5" y="333.5" width="319" height="114" rx="6"/>
<rect x="812.5" y="453.5" width="319" height="349" rx="6"/>
</g>
<g stroke="#c8c8c8" stroke-width="1">
<rect x="819.5" y="16.5" width="57" height="17" fill="#5a0000"/>
<rect x="883.5" y="16.5" width="57" height="17" fill="#363636"/>
<rect x="994.5" y="16.5" width="127" height="17" fill="#303030"/>
<rect x="821.5" y="64.5" width="81" height="15" fill="#585858"/>
<rect x="931.5" y="64.5" width="81" height="15" fill="#585858"/>
<rect x="1041.5" y="64.5" width="81" height="15" fill="#585858"/>
</g>
<g fill="none" stroke="#a0a0a0" stroke-width="1"><line x1="821" y1="217.5" x2="1124" y2="217.5"/><line x1="821" y1="358.5" x2="1123" y2="358.5"/></g>
<rect x="925.5" y="227.5" width="9.7" height="10" fill="#f00000"/>
<rect x="925.5" y="227.5" width="50" height="10" rx="1.5" fill="none" stroke="#8c8c8c"/>
<rect x="1028.5" y="227.5" width="18.7" height="10" fill="#90ccff"/>
<rect x="1028.5" y="227.5" width="50" height="10" rx="1.5" fill="none" stroke="#8c8c8c"/>
<rect x="925.5" y="281.5" width="10.6" height="10" fill="#e860a8"/>
<rect x="925.5" y="281.5" width="50" height="10" rx="1.5" fill="none" stroke="#8c8c8c"/>
<rect x="1028.5" y="281.5" width="14" height="10" fill="#00e000"/>
<rect x="1028.5" y="281.5" width="50" height="10" rx="1.5" fill="none" stroke="#8c8c8c"/>
<rect x="1016" y="231.2" width="6" height="1.6" fill="#e0e0e0"/>
<rect x="1016" y="285.2" width="6" height="1.6" fill="#e0e0e0"/>
<text x="823.9" y="29.8" font-size="13" fill="#e0d0cc" font-weight="bold" textLength="48.6" lengthAdjust="spacingAndGlyphs">STRIKE</text>
<text x="890.7" y="29.8" font-size="13" fill="#c8c8c8" font-weight="bold" textLength="42.8" lengthAdjust="spacingAndGlyphs">NOISE</text>
<text x="998.5" y="29.8" font-size="13" fill="#ffffff" font-weight="bold" textLength="62" lengthAdjust="spacingAndGlyphs">Bng 161°</text>
<text x="1075.6" y="29.8" font-size="13" fill="#00e800" font-weight="bold" textLength="42.3" lengthAdjust="spacingAndGlyphs">278mi</text>
<text x="829.7" y="76" font-size="12" fill="#e8e8e8" textLength="64.7" lengthAdjust="spacingAndGlyphs">Strikes/min</text>
<text x="943.5" y="76" font-size="12" fill="#e8e8e8" textLength="57.3" lengthAdjust="spacingAndGlyphs">Close/min</text>
<text x="1050.4" y="76" font-size="12" fill="#e8e8e8" textLength="62.3" lengthAdjust="spacingAndGlyphs">Noises/min</text>
<text x="884" y="111.7" font-size="28" fill="#ffffff" font-weight="bold" textLength="18.5" lengthAdjust="spacingAndGlyphs">0</text>
<text x="993.6" y="111.7" font-size="28" fill="#ffffff" font-weight="bold" textLength="18.8" lengthAdjust="spacingAndGlyphs">0</text>
<text x="1103.5" y="111.7" font-size="28" fill="#b8b8b8" font-weight="bold" textLength="18.7" lengthAdjust="spacingAndGlyphs">0</text>
<text x="826.1" y="143" font-size="13" fill="#f0f0f0" textLength="76.2" lengthAdjust="spacingAndGlyphs">Total Strikes</text>
<text x="944.6" y="143" font-size="13" fill="#f0f0f0" textLength="67.8" lengthAdjust="spacingAndGlyphs">Total Close</text>
<text x="1047.1" y="143" font-size="13" fill="#f0f0f0" textLength="75.4" lengthAdjust="spacingAndGlyphs">Total Noises</text>
<text x="879.6" y="160.9" font-size="13" fill="#f0f0f0" textLength="22.9" lengthAdjust="spacingAndGlyphs">245</text>
<text x="1005.5" y="160.9" font-size="13" fill="#f0f0f0" textLength="6.9" lengthAdjust="spacingAndGlyphs">0</text>
<text x="1107.4" y="160.9" font-size="13" fill="#f0f0f0" textLength="14.8" lengthAdjust="spacingAndGlyphs">39</text>
<text x="821" y="214.6" font-size="13" fill="#c8c8c8" textLength="164.3" lengthAdjust="spacingAndGlyphs">Lightning type distribution</text>
<text x="821.3" y="236.8" font-size="12.5" fill="#ffffff" font-weight="bold" textLength="83.6" lengthAdjust="spacingAndGlyphs">Cloud-ground</text>
<text x="913.4" y="236.8" font-size="12.5" fill="#e0e0e0" font-weight="bold" textLength="7.2" lengthAdjust="spacingAndGlyphs">+</text>
<text x="979.7" y="236.8" font-size="12.5" fill="#ffffff" font-weight="bold" textLength="28.8" lengthAdjust="spacingAndGlyphs">18%</text>
<text x="1082.2" y="236.8" font-size="12.5" fill="#ffffff" font-weight="bold" textLength="29.6" lengthAdjust="spacingAndGlyphs">36%</text>
<text x="821.4" y="260.8" font-size="12.5" fill="#c8c8c8" font-weight="bold" textLength="37.4" lengthAdjust="spacingAndGlyphs">Count</text>
<text x="925.3" y="260.8" font-size="12.5" fill="#ffffff" font-weight="bold" textLength="15.2" lengthAdjust="spacingAndGlyphs">43</text>
<text x="1028.1" y="260.8" font-size="12.5" fill="#ffffff" font-weight="bold" textLength="15.4" lengthAdjust="spacingAndGlyphs">89</text>
<text x="821.4" y="290.8" font-size="12.5" fill="#ffffff" font-weight="bold" textLength="63.2" lengthAdjust="spacingAndGlyphs">Intracloud</text>
<text x="913.4" y="290.8" font-size="12.5" fill="#e0e0e0" font-weight="bold" textLength="7.2" lengthAdjust="spacingAndGlyphs">+</text>
<text x="979.7" y="290.8" font-size="12.5" fill="#ffffff" font-weight="bold" textLength="28.8" lengthAdjust="spacingAndGlyphs">20%</text>
<text x="1082.2" y="290.8" font-size="12.5" fill="#ffffff" font-weight="bold" textLength="29.6" lengthAdjust="spacingAndGlyphs">26%</text>
<text x="821.4" y="315" font-size="12.5" fill="#c8c8c8" font-weight="bold" textLength="37.4" lengthAdjust="spacingAndGlyphs">Count</text>
<text x="925.3" y="315" font-size="12.5" fill="#ffffff" font-weight="bold" textLength="15.2" lengthAdjust="spacingAndGlyphs">50</text>
<text x="1028.1" y="315" font-size="12.5" fill="#ffffff" font-weight="bold" textLength="15.4" lengthAdjust="spacingAndGlyphs">63</text>
<text x="821.7" y="352.5" font-size="16" fill="#00e800" font-weight="bold" textLength="190.3" lengthAdjust="spacingAndGlyphs">2/1/2026 7:14:56 AM</text>
<text x="821.4" y="388" font-size="13" fill="#f0f0f0" textLength="48.4" lengthAdjust="spacingAndGlyphs">Squelch</text>
<text x="909.9" y="388" font-size="13" fill="#f0f0f0" textLength="6.5" lengthAdjust="spacingAndGlyphs">0</text>
<text x="981.2" y="388" font-size="13" fill="#f0f0f0" textLength="43.6" lengthAdjust="spacingAndGlyphs">Upload</text>
<text x="1060.8" y="388" font-size="13" fill="#c8c8c8" textLength="54" lengthAdjust="spacingAndGlyphs">Disabled</text>
<text x="821.4" y="408" font-size="13" fill="#f0f0f0" textLength="72.2" lengthAdjust="spacingAndGlyphs">Persistence</text>
<text x="909.3" y="408" font-size="13" fill="#f0f0f0" textLength="41.3" lengthAdjust="spacingAndGlyphs">90 min</text>
<text x="981.2" y="408" font-size="13" fill="#f0f0f0" textLength="50.5" lengthAdjust="spacingAndGlyphs">Capture</text>
<text x="1060.8" y="408" font-size="13" fill="#00e000" textLength="36.8" lengthAdjust="spacingAndGlyphs">Active</text>
<text x="821.4" y="427.7" font-size="13" fill="#f0f0f0" textLength="39.5" lengthAdjust="spacingAndGlyphs">Range</text>
<text x="909.3" y="427.7" font-size="13" fill="#f0f0f0" textLength="41.3" lengthAdjust="spacingAndGlyphs">313 mi</text>
<text x="981.2" y="427.7" font-size="13" fill="#f0f0f0" textLength="52.5" lengthAdjust="spacingAndGlyphs">Receiver</text>
<text x="1060.8" y="427.7" font-size="13" fill="#00e000" textLength="50.5" lengthAdjust="spacingAndGlyphs">Enabled</text>
<text x="821.4" y="475" font-size="13" fill="#c8c8c8" textLength="43.1" lengthAdjust="spacingAndGlyphs">Uptime</text>
<text x="909.3" y="475" font-size="13" fill="#f0f0f0" textLength="44.2" lengthAdjust="spacingAndGlyphs">475:00</text>
<text x="981.2" y="475" font-size="13" fill="#c8c8c8" textLength="61.4" lengthAdjust="spacingAndGlyphs">Peak time</text>
<text x="1060.8" y="475" font-size="13" fill="#c8c8c8" textLength="24.3" lengthAdjust="spacingAndGlyphs">Plot</text>
<text x="821.4" y="498" font-size="13" fill="#c8c8c8" textLength="60.3" lengthAdjust="spacingAndGlyphs">Peak rate</text>
<text x="909.3" y="498" font-size="13" fill="#f0f0f0" textLength="34.2" lengthAdjust="spacingAndGlyphs">6/min</text>
<text x="981.8" y="498" font-size="13" fill="#f0f0f0" textLength="57.9" lengthAdjust="spacingAndGlyphs">12:27 AM</text>
<text x="1060.8" y="498" font-size="13" fill="#f0f0f0" textLength="35.6" lengthAdjust="spacingAndGlyphs">Strike</text>
<text x="822.6" y="527.6" font-size="13" fill="#c8c8c8" textLength="75.4" lengthAdjust="spacingAndGlyphs">Trend graph</text>
<text x="908.7" y="527.6" font-size="13" fill="#f0f0f0" textLength="41.3" lengthAdjust="spacingAndGlyphs">60 min</text>
<text x="820.5" y="792.8" font-size="13" fill="#c8c8c8" textLength="12.8" lengthAdjust="spacingAndGlyphs">60</text>
<text x="864" y="792.8" font-size="13" fill="#c8c8c8" textLength="13.6" lengthAdjust="spacingAndGlyphs">50</text>
<text x="909.1" y="792.8" font-size="13" fill="#c8c8c8" textLength="13.3" lengthAdjust="spacingAndGlyphs">40</text>
<text x="952.9" y="792.8" font-size="13" fill="#c8c8c8" textLength="13.6" lengthAdjust="spacingAndGlyphs">30</text>
<text x="997.4" y="792.8" font-size="13" fill="#c8c8c8" textLength="13.1" lengthAdjust="spacingAndGlyphs">20</text>
<text x="1042.5" y="792.8" font-size="13" fill="#c8c8c8" textLength="13.2" lengthAdjust="spacingAndGlyphs">10</text>
<text x="1087.2" y="792.8" font-size="13" fill="#c8c8c8" textLength="6.3" lengthAdjust="spacingAndGlyphs">0</text>
<text x="1100" y="792.8" font-size="13" fill="#c8c8c8" textLength="18.2" lengthAdjust="spacingAndGlyphs">min</text>
<text x="1092" y="547.2" font-size="13" fill="#c8c8c8" textLength="13.1" lengthAdjust="spacingAndGlyphs">30</text>
<text x="1092" y="625.75" font-size="13" fill="#c8c8c8" textLength="13.1" lengthAdjust="spacingAndGlyphs">20</text>
<text x="1092.3" y="704.3" font-size="13" fill="#c8c8c8" textLength="12.8" lengthAdjust="spacingAndGlyphs">10</text>
<g stroke="#c8c8c8" stroke-width="1" fill="none">
<line x1="822" y1="777.5" x2="1089" y2="777.5"/>
<line x1="1088.5" y1="542" x2="1088.5" y2="778"/>
<line x1="822.5" y1="775" x2="822.5" y2="780"/>
<line x1="867.5" y1="775" x2="867.5" y2="780"/>
<line x1="911.5" y1="775" x2="911.5" y2="780"/>
<line x1="956.5" y1="775" x2="956.5" y2="780"/>
<line x1="1000.5" y1="775" x2="1000.5" y2="780"/>
<line x1="1044.5" y1="775" x2="1044.5" y2="780"/>
<line x1="1084" y1="738.5" x2="1089" y2="738.5"/>
<line x1="1084" y1="699.5" x2="1089" y2="699.5"/>
<line x1="1084" y1="660.5" x2="1089" y2="660.5"/>
<line x1="1084" y1="621.5" x2="1089" y2="621.5"/>
<line x1="1084" y1="582.5" x2="1089" y2="582.5"/>
<line x1="1084" y1="543.5" x2="1089" y2="543.5"/>
</g>
<path d="M849,777 L851,770 L854,770 L856,777 L858,770 L861,770 L863,777" stroke="#fff" fill="none" stroke-width="1"/>
<path d="M867,777 L870,770 L873,762 L876,770 L878,777 L880,770 L883,770 L885,777" stroke="#fff" fill="none" stroke-width="1"/>
<line x1="871" y1="776" x2="873" y2="770" stroke="#00e000"/><line x1="873" y1="770" x2="875" y2="776" stroke="#e060a0"/>
</svg></body></html>
